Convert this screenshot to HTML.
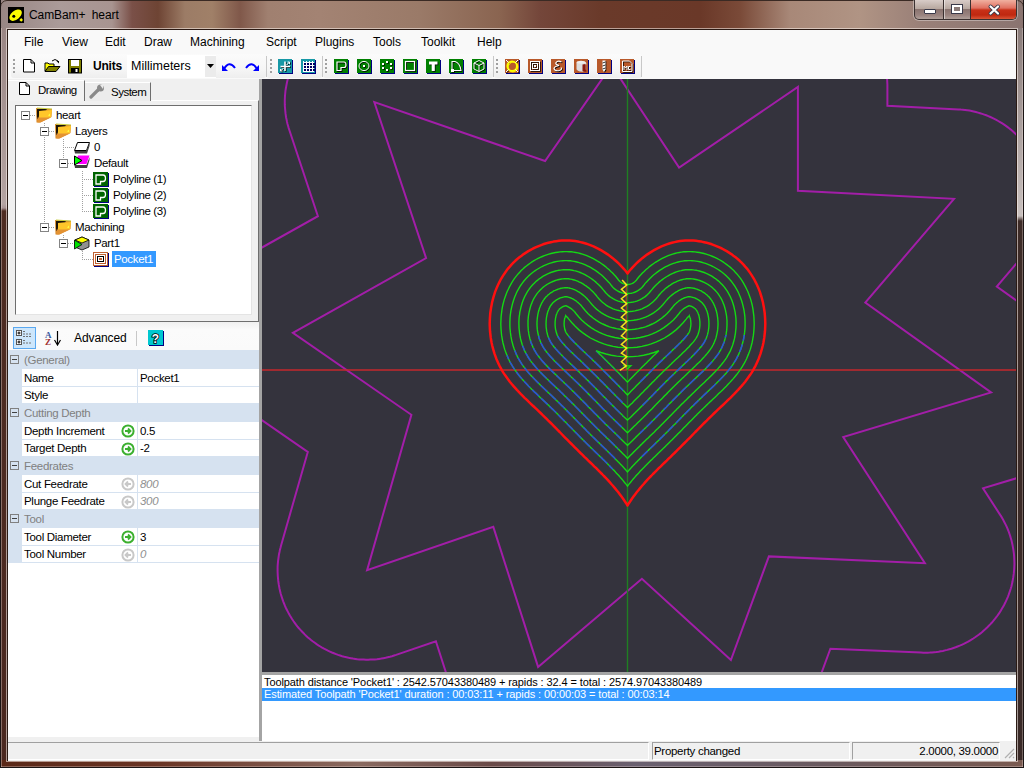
<!DOCTYPE html>
<html><head><meta charset="utf-8">
<style>
*{box-sizing:border-box;margin:0;padding:0}
html,body{width:1024px;height:768px;overflow:hidden}
body{position:relative;font-family:"Liberation Sans",sans-serif;font-size:11px;color:#000;
background:linear-gradient(90deg,#988684 0px,#ab9b99 60px,#a89490 112px,#7a5048 132px,#6e4434 158px,#9c7c66 185px,#a08068 212px,#80584a 240px,#a08070 268px,#a38373 320px,#9a7a68 420px,#8a6450 500px,#74463a 540px,#6a3a2a 600px,#6a3828 700px,#7a4a38 740px,#a88878 790px,#b09484 860px,#9a8078 920px,#8a7470 1024px)}
.a{position:absolute}
.t{position:absolute;white-space:pre;line-height:1}
</style></head><body>
<!-- window outer frame line -->
<div class="a" style="left:0;top:0;width:1024px;height:768px;border:1px solid #3a2a24;border-radius:7px 7px 0 0"></div>
<!-- title icon -->
<div class="a" style="left:8px;top:7px;width:16px;height:16px;background:#000"></div>
<svg class="a" style="left:8px;top:7px" width="16" height="16"><ellipse cx="7.6" cy="8.2" rx="7.2" ry="4.4" transform="rotate(-40 7.6 8.2)" fill="#ff0"/><circle cx="5.8" cy="9.2" r="1.5" fill="#000"/><path d="M13.2 11L15 12.9L13.2 14.8L11.4 12.9Z" fill="#ff0"/></svg>
<div class="t" style="left:29px;top:9px;font-size:12px;color:#000;letter-spacing:-0.1px">CamBam+  heart</div>
<!-- caption buttons -->
<div class="a" style="left:913px;top:0px;width:105px;height:21px;border-radius:0 0 6px 6px;background:rgba(255,255,255,0.35)"></div>
<div class="a" style="left:914px;top:0px;width:103px;height:20px;border:1px solid #3a3030;border-top:none;border-radius:0 0 5px 5px;overflow:hidden;background:linear-gradient(#d8ccc8,#b8a8a0 45%,#8a7470 50%,#9a8480 80%,#b0a09a)">
 <div class="a" style="left:28px;top:0;width:1px;height:20px;background:#3a3030"></div>
 <div class="a" style="left:29px;top:0;width:1px;height:20px;background:rgba(255,255,255,0.5)"></div>
 <div class="a" style="left:55px;top:0;width:47px;height:20px;background:linear-gradient(#f0b0a0,#e07060 40%,#c83018 50%,#c02810 75%,#e06040)"></div>
 <div class="a" style="left:55px;top:0;width:1px;height:20px;background:#3a3030"></div>
 <div class="a" style="left:9px;top:9px;width:12px;height:5px;background:#fff;border:1px solid #3a3a4a;border-radius:1px"></div>
 <div class="a" style="left:36px;top:4px;width:12px;height:10px;border:3px solid #fff;outline:1px solid #3a3a4a;outline-offset:-1px;background:#8a7a78"></div>
 <svg class="a" style="left:73px;top:4px" width="13" height="12"><path d="M2.5 2.5 L10 9.5 M10 2.5 L2.5 9.5" stroke="#3a3a4a" stroke-width="3.8" stroke-linecap="round"/><path d="M2.5 2.5 L10 9.5 M10 2.5 L2.5 9.5" stroke="#fff" stroke-width="2.2" stroke-linecap="round"/></svg>
</div>

<!-- frame strips -->
<div class="a" style="left:0;top:28px;width:8px;height:740px;background:linear-gradient(#9a8684 0px,#b4a4a2 176px,#a89494 180px,#4e2c22 183px,#4a2820 740px)"></div>
<div class="a" style="left:1016px;top:28px;width:8px;height:740px;background:linear-gradient(#8a7c7a 0px,#c8c0be 188px,#3e2c28 193px,#3a2a28 740px)"></div>
<div class="a" style="left:0;top:760px;width:1024px;height:8px;background:linear-gradient(90deg,#5a2818 0%,#6a3424 15%,#8a6a60 35%,#6a4a48 48%,#6a6070 62%,#6a5a60 80%,#7a5a50 100%)"></div>
<div class="a" style="left:0;top:0;width:1px;height:768px;background:#1a1414"></div>
<div class="a" style="left:1023px;top:0;width:1px;height:768px;background:#1a1414"></div>
<div class="a" style="left:1px;top:28px;width:1px;height:739px;background:rgba(255,240,235,0.35)"></div>
<div class="a" style="left:1022px;top:28px;width:1px;height:739px;background:rgba(255,240,235,0.3)"></div>
<div class="a" style="left:0;top:767px;width:1024px;height:1px;background:#1a1414"></div>
<div class="a" style="left:1px;top:766px;width:1022px;height:1px;background:rgba(255,240,235,0.3)"></div>
<div class="a" style="left:6px;top:28px;width:1012px;height:734px;border:1px solid rgba(255,245,240,0.55)"></div>
<!-- client area -->
<div class="a" id="client" style="left:7px;top:29px;width:1010px;height:732px;border:1px solid #2a1a14;background:#f0f0f0;overflow:hidden">
</div>

<!-- menu bar -->
<div class="a" style="left:8px;top:30px;width:1008px;height:49px;background:#f9f9f9"></div>
<div class="t" style="left:24px;top:36px;font-size:12px">File</div>
<div class="t" style="left:62px;top:36px;font-size:12px">View</div>
<div class="t" style="left:105px;top:36px;font-size:12px">Edit</div>
<div class="t" style="left:144px;top:36px;font-size:12px">Draw</div>
<div class="t" style="left:190px;top:36px;font-size:12px">Machining</div>
<div class="t" style="left:266px;top:36px;font-size:12px">Script</div>
<div class="t" style="left:315px;top:36px;font-size:12px">Plugins</div>
<div class="t" style="left:373px;top:36px;font-size:12px">Tools</div>
<div class="t" style="left:421px;top:36px;font-size:12px">Toolkit</div>
<div class="t" style="left:477px;top:36px;font-size:12px">Help</div>
<!-- toolbar strip -->


<!-- toolbar 1 -->
<div class="a" style="left:11px;top:54px;width:255px;height:24px;border-radius:3px;background:linear-gradient(#fbfbfb,#f6f6f6 60%,#eeeeee)"></div>
<div class="a" style="left:266px;top:56px;width:1px;height:21px;background:#c8c8c8"></div>
<div class="a" style="left:267px;top:54px;width:55px;height:24px;border-radius:3px;background:linear-gradient(#fbfbfb,#f6f6f6 60%,#eeeeee)"></div><div class="a" style="left:322px;top:56px;width:1px;height:21px;background:#c8c8c8"></div><div class="a" style="left:323px;top:54px;width:170px;height:24px;border-radius:3px;background:linear-gradient(#fbfbfb,#f6f6f6 60%,#eeeeee)"></div>
<div class="a" style="left:493px;top:56px;width:1px;height:21px;background:#c8c8c8"></div>
<div class="a" style="left:494px;top:54px;width:148px;height:24px;border-radius:3px;background:linear-gradient(#fbfbfb,#f6f6f6 60%,#eeeeee)"></div>
<div class="a" style="left:641px;top:56px;width:1px;height:21px;background:#c8c8c8"></div>
<div class="a" style="left:325px;top:59px;width:2px;height:2px;background:#a0a0a0"></div><div class="a" style="left:325px;top:63px;width:2px;height:2px;background:#a0a0a0"></div><div class="a" style="left:325px;top:67px;width:2px;height:2px;background:#a0a0a0"></div><div class="a" style="left:325px;top:71px;width:2px;height:2px;background:#a0a0a0"></div><div class="a" style="left:13px;top:59px;width:2px;height:2px;background:#a0a0a0"></div><div class="a" style="left:13px;top:63px;width:2px;height:2px;background:#a0a0a0"></div><div class="a" style="left:13px;top:67px;width:2px;height:2px;background:#a0a0a0"></div><div class="a" style="left:13px;top:71px;width:2px;height:2px;background:#a0a0a0"></div><div class="a" style="left:270px;top:59px;width:2px;height:2px;background:#a0a0a0"></div><div class="a" style="left:270px;top:63px;width:2px;height:2px;background:#a0a0a0"></div><div class="a" style="left:270px;top:67px;width:2px;height:2px;background:#a0a0a0"></div><div class="a" style="left:270px;top:71px;width:2px;height:2px;background:#a0a0a0"></div><div class="a" style="left:496px;top:59px;width:2px;height:2px;background:#a0a0a0"></div><div class="a" style="left:496px;top:63px;width:2px;height:2px;background:#a0a0a0"></div><div class="a" style="left:496px;top:67px;width:2px;height:2px;background:#a0a0a0"></div><div class="a" style="left:496px;top:71px;width:2px;height:2px;background:#a0a0a0"></div><svg class="a" style="left:23px;top:59px" width="13" height="14"><path d="M0.5 0.5 H8 L11.5 4 V13 H0.5Z" fill="#fff" stroke="#000"/><path d="M8 0.5 V4 H11.5" fill="none" stroke="#000" stroke-width="1"/></svg><svg class="a" style="left:44px;top:58px" width="17" height="15"><path d="M1 5 H4 L5 6 H10 V13 H1Z" fill="#ff0" stroke="#000"/><path d="M1 13.5 L4.5 8.5 H16 L12 13.5Z" fill="#808000" stroke="#000"/><path d="M8 3 Q11 0 14 3" fill="none" stroke="#000"/><path d="M12.5 3 L15 3 L15 5.5Z" fill="#000"/></svg><svg class="a" style="left:68px;top:59px" width="15" height="15"><rect x="0.5" y="0.5" width="13" height="13.5" fill="#808000" stroke="#000"/><rect x="3" y="1" width="8" height="6" fill="#fff"/><rect x="3" y="9" width="8" height="5" fill="#000"/><rect x="7.5" y="10" width="2" height="3" fill="#fff"/></svg><svg class="a" style="left:278px;top:59px" width="15" height="15"><rect x="1" y="1" width="14" height="14" fill="#000080"/><rect x="0" y="0" width="14" height="14" fill="#1798a6"/><g transform="translate(0.8,0.8)" opacity="0.9"><path d="M7 2.5V12M2.5 7.5H12" stroke="#000" stroke-width="1.6"/><path d="M8.5 6L11.5 3M9.5 3H11.5V5M5.5 9L2.5 12M2.5 10V12H4.5" fill="none" stroke="#000" stroke-width="1"/></g><path d="M7 2.5V12M2.5 7.5H12" stroke="#fff" stroke-width="1.6"/><path d="M8.5 6L11.5 3M9.5 3H11.5V5M5.5 9L2.5 12M2.5 10V12H4.5" fill="none" stroke="#fff" stroke-width="1"/></svg><svg class="a" style="left:301px;top:59px" width="15" height="15"><rect x="1" y="1" width="14" height="14" fill="#000080"/><rect x="0" y="0" width="14" height="14" fill="#1798a6"/><rect x="3" y="4" width="2" height="2" fill="#000060"/><rect x="3" y="7" width="2" height="2" fill="#000060"/><rect x="3" y="10" width="2" height="2" fill="#000060"/><rect x="6" y="4" width="2" height="2" fill="#000060"/><rect x="6" y="7" width="2" height="2" fill="#000060"/><rect x="6" y="10" width="2" height="2" fill="#000060"/><rect x="9" y="4" width="2" height="2" fill="#000060"/><rect x="9" y="7" width="2" height="2" fill="#000060"/><rect x="9" y="10" width="2" height="2" fill="#000060"/><rect x="12" y="4" width="2" height="2" fill="#000060"/><rect x="12" y="7" width="2" height="2" fill="#000060"/><rect x="12" y="10" width="2" height="2" fill="#000060"/><path d="M2 3.5H13M2 6.5H13M2 9.5H13M2 12.5H13M2.5 2V13M5.5 2V13M8.5 2V13M11.5 2V13" stroke="#fff" stroke-width="1"/></svg><svg class="a" style="left:334px;top:59px" width="15" height="15"><rect x="1" y="1" width="14" height="14" fill="#000080"/><rect x="0" y="0" width="14" height="14" fill="#008000"/><g transform="translate(0.8,0.8)" opacity="0.9"><path d="M3 3H10Q12 3 12 6Q12 8.5 10 8.5H7V11.5H3Z" fill="none" stroke="#000" stroke-width="1.2"/></g><path d="M3 3H10Q12 3 12 6Q12 8.5 10 8.5H7V11.5H3Z" fill="none" stroke="#fff" stroke-width="1.2"/></svg><svg class="a" style="left:357px;top:59px" width="15" height="15"><rect x="1" y="1" width="14" height="14" fill="#000080"/><rect x="0" y="0" width="14" height="14" fill="#008000"/><g transform="translate(0.8,0.8)" opacity="0.9"><ellipse cx="7" cy="7" rx="5" ry="4.6" fill="none" stroke="#000" stroke-width="1"/><rect x="6" y="6" width="2" height="2" fill="#000"/></g><ellipse cx="7" cy="7" rx="5" ry="4.6" fill="none" stroke="#fff" stroke-width="1"/><rect x="6" y="6" width="2" height="2" fill="#fff"/></svg><svg class="a" style="left:380px;top:59px" width="15" height="15"><rect x="1" y="1" width="14" height="14" fill="#000080"/><rect x="0" y="0" width="14" height="14" fill="#008000"/><g transform="translate(0.8,0.8)" opacity="0.9"><rect x="6" y="2" width="2" height="2" fill="#000"/><rect x="2" y="4" width="2" height="2" fill="#000"/><rect x="10" y="4" width="2" height="2" fill="#000"/><rect x="2" y="8" width="2" height="2" fill="#000"/><rect x="10" y="8" width="2" height="2" fill="#000"/><rect x="6" y="10" width="2" height="2" fill="#000"/></g><rect x="6" y="2" width="2" height="2" fill="#fff"/><rect x="2" y="4" width="2" height="2" fill="#fff"/><rect x="10" y="4" width="2" height="2" fill="#fff"/><rect x="2" y="8" width="2" height="2" fill="#fff"/><rect x="10" y="8" width="2" height="2" fill="#fff"/><rect x="6" y="10" width="2" height="2" fill="#fff"/></svg><svg class="a" style="left:403px;top:59px" width="15" height="15"><rect x="1" y="1" width="14" height="14" fill="#000080"/><rect x="0" y="0" width="14" height="14" fill="#008000"/><g transform="translate(0.8,0.8)" opacity="0.9"><rect x="2.5" y="2.5" width="9" height="9" fill="none" stroke="#000" stroke-width="1.2"/></g><rect x="2.5" y="2.5" width="9" height="9" fill="none" stroke="#fff" stroke-width="1.2"/></svg><svg class="a" style="left:426px;top:59px" width="15" height="15"><rect x="1" y="1" width="14" height="14" fill="#000080"/><rect x="0" y="0" width="14" height="14" fill="#008000"/><g transform="translate(0.8,0.8)" opacity="0.9"><path d="M3 2.5H11.5V5.5H8.8V12H5.7V5.5H3Z" fill="#000"/></g><path d="M3 2.5H11.5V5.5H8.8V12H5.7V5.5H3Z" fill="#fff"/></svg><svg class="a" style="left:449px;top:59px" width="15" height="15"><rect x="1" y="1" width="14" height="14" fill="#000080"/><rect x="0" y="0" width="14" height="14" fill="#008000"/><g transform="translate(0.8,0.8)" opacity="0.9"><path d="M3 12V2.5H6Q11 4 12 11.5H3.5" fill="none" stroke="#000" stroke-width="1.1"/><rect x="2" y="10" width="3" height="3" fill="#000"/></g><path d="M3 12V2.5H6Q11 4 12 11.5H3.5" fill="none" stroke="#fff" stroke-width="1.1"/><rect x="2" y="10" width="3" height="3" fill="#fff"/></svg><svg class="a" style="left:472px;top:59px" width="15" height="15"><rect x="1" y="1" width="14" height="14" fill="#000080"/><rect x="0" y="0" width="14" height="14" fill="#008000"/><g transform="translate(0.8,0.8)" opacity="0.9"><path d="M7 1.5L12 4V10L7 12.5L2 10V4Z M2 4L7 6.5L12 4 M7 6.5V12.5" fill="none" stroke="#000" stroke-width="1"/></g><path d="M7 1.5L12 4V10L7 12.5L2 10V4Z M2 4L7 6.5L12 4 M7 6.5V12.5" fill="none" stroke="#fff" stroke-width="1"/></svg><svg class="a" style="left:505px;top:59px" width="15" height="15"><rect x="1" y="1" width="14" height="14" fill="#000080"/><rect x="0" y="0" width="14" height="14" fill="#b8592a"/><g transform="translate(0.8,0.8)" opacity="0.9"><circle cx="7" cy="7" r="4.8" fill="none" stroke="#ff0" stroke-width="1.6"/><path d="M1 1L3.5 3.5M13 1L10.5 3.5M1 13L3.5 10.5M13 13L10.5 10.5" stroke="#000"/></g><circle cx="7" cy="7" r="4.8" fill="none" stroke="#ff0" stroke-width="1.6"/><path d="M1 1L3.5 3.5M13 1L10.5 3.5M1 13L3.5 10.5M13 13L10.5 10.5" stroke="#fff"/></svg><svg class="a" style="left:528px;top:59px" width="15" height="15"><rect x="1" y="1" width="14" height="14" fill="#000080"/><rect x="0" y="0" width="14" height="14" fill="#b8592a"/><g transform="translate(0.8,0.8)" opacity="0.9"><rect x="2.5" y="2.5" width="9" height="9" fill="none" stroke="#000"/><rect x="4.5" y="4.5" width="5" height="5" fill="none" stroke="#000"/><rect x="6" y="6" width="2" height="2" fill="#000"/></g><rect x="2.5" y="2.5" width="9" height="9" fill="none" stroke="#fff"/><rect x="4.5" y="4.5" width="5" height="5" fill="none" stroke="#fff"/><rect x="6" y="6" width="2" height="2" fill="#fff"/></svg><svg class="a" style="left:551px;top:59px" width="15" height="15"><rect x="1" y="1" width="14" height="14" fill="#000080"/><rect x="0" y="0" width="14" height="14" fill="#b8592a"/><g transform="translate(0.8,0.8)" opacity="0.9"><path d="M10.5 3Q7 1 5 3.5Q4 5.5 8 6.5Q3 7.5 3 9.5Q4 12.5 8.5 11.5Q11.5 10.5 10 8.5" fill="none" stroke="#000" stroke-width="1.2"/></g><path d="M10.5 3Q7 1 5 3.5Q4 5.5 8 6.5Q3 7.5 3 9.5Q4 12.5 8.5 11.5Q11.5 10.5 10 8.5" fill="none" stroke="#fff" stroke-width="1.2"/></svg><svg class="a" style="left:574px;top:59px" width="15" height="15"><rect x="1" y="1" width="14" height="14" fill="#000080"/><rect x="0" y="0" width="14" height="14" fill="#b8592a"/><g transform="translate(0.8,0.8)" opacity="0.9"><ellipse cx="7" cy="3.5" rx="4.5" ry="1.8" fill="#eee"/><path d="M2.5 3.5V10.5Q7 13.5 11.5 10.5V3.5Q7 6 2.5 3.5Z" fill="#ddd"/><path d="M8.5 5.5V12H11.5V5Z" fill="#8a1a10"/></g><ellipse cx="7" cy="3.5" rx="4.5" ry="1.8" fill="#eee"/><path d="M2.5 3.5V10.5Q7 13.5 11.5 10.5V3.5Q7 6 2.5 3.5Z" fill="#ddd"/><path d="M8.5 5.5V12H11.5V5Z" fill="#8a1a10"/></svg><svg class="a" style="left:597px;top:59px" width="15" height="15"><rect x="1" y="1" width="14" height="14" fill="#000080"/><rect x="0" y="0" width="14" height="14" fill="#b8592a"/><g transform="translate(0.8,0.8)" opacity="0.9"><path d="M5.5 1.5H8.5V10.5L7 13L5.5 10.5Z" fill="#000"/><path d="M5.5 4L8.5 3M5.5 7L8.5 6M5.5 10L8.5 9" stroke="#333"/></g><path d="M5.5 1.5H8.5V10.5L7 13L5.5 10.5Z" fill="#fff"/><path d="M5.5 4L8.5 3M5.5 7L8.5 6M5.5 10L8.5 9" stroke="#333"/></svg><svg class="a" style="left:620px;top:59px" width="15" height="15"><rect x="1" y="1" width="14" height="14" fill="#000080"/><rect x="0" y="0" width="14" height="14" fill="#b8592a"/><g transform="translate(0.8,0.8)" opacity="0.9"><path d="M2.5 2H9.5L12 4.5V12.5H2.5Z" fill="none" stroke="#000"/><path d="M4 11V7L5.5 9L7 7V11M10.5 7.5H8.5V10.5H10.5" fill="none" stroke="#000"/></g><path d="M2.5 2H9.5L12 4.5V12.5H2.5Z" fill="none" stroke="#fff"/><path d="M4 11V7L5.5 9L7 7V11M10.5 7.5H8.5V10.5H10.5" fill="none" stroke="#fff"/></svg><div class="t" style="left:93px;top:60px;font-size:12px;font-weight:bold;letter-spacing:-0.2px">Units</div>
<div class="a" style="left:127px;top:55px;width:89px;height:23px;background:#fff"></div>
<div class="a" style="left:205px;top:56px;width:11px;height:21px;background:#ebebeb"></div>
<svg class="a" style="left:207px;top:64px" width="7" height="4"><path d="M0 0H7L3.5 4Z" fill="#000"/></svg>
<div class="t" style="left:131px;top:60px;font-size:12.5px">Millimeters</div>
<svg class="a" style="left:221px;top:60px" width="17" height="12"><path d="M3 9 Q8 0 14 8" fill="none" stroke="#0000ff" stroke-width="2"/><path d="M1 5 L1 11 L7 11Z" fill="#0000ff"/></svg>
<svg class="a" style="left:244px;top:60px" width="17" height="12"><path d="M2 8 Q8 0 13 9" fill="none" stroke="#0000ff" stroke-width="2"/><path d="M15 5 L15 11 L9 11Z" fill="#0000ff"/></svg>

<!-- left panel -->
<div class="a" style="left:8px;top:79px;width:254px;height:664px;background:#f0f0f0"></div>
<div class="a" style="left:259px;top:79px;width:3px;height:594px;background:#a4a4a4"></div>
<!-- tab page -->
<div class="a" style="left:8px;top:100px;width:251px;height:222px;border-top:1px solid #fff;border-right:1px solid #6e6e6e;border-bottom:1px solid #6e6e6e;background:#f0f0f0"></div>
<!-- tabs -->
<div class="a" style="left:85px;top:82px;width:66px;height:19px;border-right:1px solid #6e6e6e;border-top:1px solid #fff;background:#ececec"></div>
<div class="a" style="left:8px;top:80px;width:77px;height:21px;border-right:1px solid #6e6e6e;border-top:1px solid #fff;background:#f2f2f2"></div>
<svg class="a" style="left:19px;top:82px" width="12" height="13"><path d="M0.5 0.5H7L10.5 4V12.5H0.5Z" fill="#fff" stroke="#000"/><path d="M7 0.5V4H10.5" fill="none" stroke="#000"/></svg>
<div class="t" style="left:38px;top:85px;font-size:11.5px;letter-spacing:-0.5px">Drawing</div>
<svg class="a" style="left:89px;top:84px" width="17" height="15"><path d="M2 13 L9 6" stroke="#8a8a8a" stroke-width="3.2" stroke-linecap="round"/><circle cx="11.5" cy="4" r="3.5" fill="#8a8a8a"/><path d="M11 1 L15 0 L14 5Z" fill="#ececec"/></svg>
<div class="t" style="left:111px;top:87px;font-size:11.5px;letter-spacing:-0.5px">System</div>
<!-- tree -->
<div class="a" style="left:15px;top:105px;width:237px;height:210px;border-top:1px solid #6e6e6e;border-left:1px solid #6e6e6e;border-right:1px solid #e4e4e4;border-bottom:1px solid #e4e4e4;background:#fff"></div>
<!-- tree items --><div class="a" style="left:44px;top:123px;width:1px;height:100px;background:repeating-linear-gradient(180deg,#a0a0a0 0 1px,transparent 1px 2px)"></div><div class="a" style="left:63px;top:139px;width:1px;height:20px;background:repeating-linear-gradient(180deg,#a0a0a0 0 1px,transparent 1px 2px)"></div><div class="a" style="left:82px;top:171px;width:1px;height:40px;background:repeating-linear-gradient(180deg,#a0a0a0 0 1px,transparent 1px 2px)"></div><div class="a" style="left:63px;top:235px;width:1px;height:4px;background:repeating-linear-gradient(180deg,#a0a0a0 0 1px,transparent 1px 2px)"></div><div class="a" style="left:82px;top:251px;width:1px;height:8px;background:repeating-linear-gradient(180deg,#a0a0a0 0 1px,transparent 1px 2px)"></div><svg class="a" style="left:21px;top:111px" width="9" height="9"><rect x="0.5" y="0.5" width="8" height="8" fill="#fff" stroke="#848484"/><path d="M2 4.5H7" stroke="#000"/></svg><div class="a" style="left:30px;top:115px;width:6px;height:1px;background:repeating-linear-gradient(90deg,#a0a0a0 0 1px,transparent 1px 2px)"></div><svg class="a" style="left:36px;top:107px" width="17" height="16"><path d="M0 1L16 2L15.5 10L4 15.5L0.5 15.5Z" fill="#d88a2a"/><path d="M1 2L11 2L10 3.5L3.5 4L2.5 12L1 12Z" fill="#1c1408"/><path d="M3 4L16 3L15 10.5L3 12Z" fill="#ffc62a"/><path d="M1.5 10.5L15 10.5L4.5 15.5L1.5 15.5Z" fill="#e39232"/><path d="M1 1L16 2" stroke="#c8d040" stroke-width="1"/><path d="M12 8.5L14 6.5L14 9Z" fill="#ffff40"/></svg><div class="t" style="left:56px;top:110px;font-size:11.5px;letter-spacing:-0.35px">heart</div><svg class="a" style="left:40px;top:127px" width="9" height="9"><rect x="0.5" y="0.5" width="8" height="8" fill="#fff" stroke="#848484"/><path d="M2 4.5H7" stroke="#000"/></svg><div class="a" style="left:49px;top:131px;width:6px;height:1px;background:repeating-linear-gradient(90deg,#a0a0a0 0 1px,transparent 1px 2px)"></div><svg class="a" style="left:55px;top:123px" width="17" height="16"><path d="M0 1L16 2L15.5 10L4 15.5L0.5 15.5Z" fill="#d88a2a"/><path d="M1 2L11 2L10 3.5L3.5 4L2.5 12L1 12Z" fill="#1c1408"/><path d="M3 4L16 3L15 10.5L3 12Z" fill="#ffc62a"/><path d="M1.5 10.5L15 10.5L4.5 15.5L1.5 15.5Z" fill="#e39232"/><path d="M1 1L16 2" stroke="#c8d040" stroke-width="1"/><path d="M12 8.5L14 6.5L14 9Z" fill="#ffff40"/></svg><div class="t" style="left:75px;top:126px;font-size:11.5px;letter-spacing:-0.35px">Layers</div><div class="a" style="left:63px;top:147px;width:11px;height:1px;background:repeating-linear-gradient(90deg,#a0a0a0 0 1px,transparent 1px 2px)"></div><svg class="a" style="left:74px;top:142px" width="16" height="13"><path d="M3.5 0.5H15.5L12.5 8.5H0.5Z" fill="#fff" stroke="#000"/><path d="M0.5 9 H12.5 L15.5 1 V4 L13 11.5 H1Z" fill="#404040"/></svg><div class="t" style="left:94px;top:142px;font-size:11.5px;letter-spacing:-0.35px">0</div><svg class="a" style="left:59px;top:159px" width="9" height="9"><rect x="0.5" y="0.5" width="8" height="8" fill="#fff" stroke="#848484"/><path d="M2 4.5H7" stroke="#000"/></svg><div class="a" style="left:68px;top:163px;width:6px;height:1px;background:repeating-linear-gradient(90deg,#a0a0a0 0 1px,transparent 1px 2px)"></div><svg class="a" style="left:74px;top:155px" width="16" height="14"><path d="M0.5 10 H12.5 L15.5 2 V5 L13 13 H1Z" fill="#404040"/><path d="M4 0.5H15.5L12.5 9H1Z" fill="#ff00ff"/><path d="M0.5 1 L0.5 10 L8 5.5Z" fill="#00ff00" stroke="#000" stroke-width="1"/></svg><div class="t" style="left:94px;top:158px;font-size:11.5px;letter-spacing:-0.35px">Default</div><div class="a" style="left:82px;top:179px;width:11px;height:1px;background:repeating-linear-gradient(90deg,#a0a0a0 0 1px,transparent 1px 2px)"></div><svg class="a" style="left:93px;top:172px" width="16" height="15"><rect x="1" y="1" width="15" height="14" fill="#000080"/><rect x="0" y="0" width="15" height="14" fill="#006400"/><path d="M3 3H10Q12.5 3 12.5 6.5Q12.5 9.5 10 9.5H7.5V12H3Z" fill="none" stroke="#fff" stroke-width="1.3"/></svg><div class="t" style="left:113px;top:174px;font-size:11.5px;letter-spacing:-0.35px">Polyline (1)</div><div class="a" style="left:82px;top:195px;width:11px;height:1px;background:repeating-linear-gradient(90deg,#a0a0a0 0 1px,transparent 1px 2px)"></div><svg class="a" style="left:93px;top:188px" width="16" height="15"><rect x="1" y="1" width="15" height="14" fill="#000080"/><rect x="0" y="0" width="15" height="14" fill="#006400"/><path d="M3 3H10Q12.5 3 12.5 6.5Q12.5 9.5 10 9.5H7.5V12H3Z" fill="none" stroke="#fff" stroke-width="1.3"/></svg><div class="t" style="left:113px;top:190px;font-size:11.5px;letter-spacing:-0.35px">Polyline (2)</div><div class="a" style="left:82px;top:211px;width:11px;height:1px;background:repeating-linear-gradient(90deg,#a0a0a0 0 1px,transparent 1px 2px)"></div><svg class="a" style="left:93px;top:204px" width="16" height="15"><rect x="1" y="1" width="15" height="14" fill="#000080"/><rect x="0" y="0" width="15" height="14" fill="#006400"/><path d="M3 3H10Q12.5 3 12.5 6.5Q12.5 9.5 10 9.5H7.5V12H3Z" fill="none" stroke="#fff" stroke-width="1.3"/></svg><div class="t" style="left:113px;top:206px;font-size:11.5px;letter-spacing:-0.35px">Polyline (3)</div><svg class="a" style="left:40px;top:223px" width="9" height="9"><rect x="0.5" y="0.5" width="8" height="8" fill="#fff" stroke="#848484"/><path d="M2 4.5H7" stroke="#000"/></svg><div class="a" style="left:49px;top:227px;width:6px;height:1px;background:repeating-linear-gradient(90deg,#a0a0a0 0 1px,transparent 1px 2px)"></div><svg class="a" style="left:55px;top:219px" width="17" height="16"><path d="M0 1L16 2L15.5 10L4 15.5L0.5 15.5Z" fill="#d88a2a"/><path d="M1 2L11 2L10 3.5L3.5 4L2.5 12L1 12Z" fill="#1c1408"/><path d="M3 4L16 3L15 10.5L3 12Z" fill="#ffc62a"/><path d="M1.5 10.5L15 10.5L4.5 15.5L1.5 15.5Z" fill="#e39232"/><path d="M1 1L16 2" stroke="#c8d040" stroke-width="1"/><path d="M12 8.5L14 6.5L14 9Z" fill="#ffff40"/></svg><div class="t" style="left:75px;top:222px;font-size:11.5px;letter-spacing:-0.35px">Machining</div><svg class="a" style="left:59px;top:239px" width="9" height="9"><rect x="0.5" y="0.5" width="8" height="8" fill="#fff" stroke="#848484"/><path d="M2 4.5H7" stroke="#000"/></svg><div class="a" style="left:68px;top:243px;width:6px;height:1px;background:repeating-linear-gradient(90deg,#a0a0a0 0 1px,transparent 1px 2px)"></div><svg class="a" style="left:74px;top:236px" width="16" height="15"><path d="M8 1 L15 4 V11 L8 14 L1 11 V4Z" fill="#909090" stroke="#000" stroke-width="0.8"/><path d="M8 1 L15 4 L8 7 L1 4Z" fill="#ffff00" stroke="#000" stroke-width="0.8"/><path d="M0.5 4 V13 L8 8.5Z" fill="#00e000" stroke="#000" stroke-width="0.8"/></svg><div class="t" style="left:94px;top:238px;font-size:11.5px;letter-spacing:-0.35px">Part1</div><div class="a" style="left:82px;top:259px;width:11px;height:1px;background:repeating-linear-gradient(90deg,#a0a0a0 0 1px,transparent 1px 2px)"></div><svg class="a" style="left:93px;top:252px" width="16" height="15"><rect x="1" y="1" width="15" height="14" fill="#000080"/><rect x="0" y="0" width="15" height="14" fill="#fff"/><rect x="0.5" y="0.5" width="14" height="13" fill="none" stroke="#c06030"/><rect x="2.5" y="2.5" width="10" height="9" fill="none" stroke="#c06030"/><rect x="4.5" y="4.5" width="6" height="5" fill="none" stroke="#000"/><rect x="6" y="6" width="3" height="2" fill="#c06030"/></svg><div class="a" style="left:112px;top:251px;width:44px;height:16px;background:#3399ff"></div><div class="t" style="left:114px;top:254px;font-size:11.5px;letter-spacing:-0.35px;color:#fff">Pocket1</div>
<!-- property grid -->
<div class="a" style="left:8px;top:322px;width:251px;height:28px;background:linear-gradient(#f0f0f0,#fbfbfb 30%,#fafafa)"></div>
<div class="a" style="left:13px;top:327px;width:23px;height:22px;border:1px solid #5aa8f0;background:#cde6fb"></div>
<svg class="a" style="left:16px;top:330px" width="18" height="16"><rect x="0.5" y="0.5" width="5" height="5" fill="#fff" stroke="#555"/><path d="M1.5 3H4.5M3 1.5V4.5" stroke="#000"/><rect x="0.5" y="9.5" width="5" height="5" fill="#fff" stroke="#555"/><path d="M1.5 12H4.5M3 10.5V13.5" stroke="#000"/><path d="M7 1.5H10M7 4H16M7 6.5H16M7 10.5H10M7 13H16" stroke="#707070" stroke-dasharray="2 1"/></svg>
<div class="t" style="left:45px;top:331px;font-family:'Liberation Serif',serif;font-size:9px;font-weight:bold;color:#3a5aa0">A</div>
<div class="t" style="left:45px;top:338px;font-family:'Liberation Serif',serif;font-size:9px;font-weight:bold;color:#a03030">Z</div>
<svg class="a" style="left:54px;top:331px" width="7" height="15"><path d="M3.5 0V13" stroke="#000" stroke-width="1.2"/><path d="M0.5 9L3.5 14L6.5 9" fill="none" stroke="#000" stroke-width="1.2"/></svg>
<div class="t" style="left:74px;top:332px;font-size:12px;letter-spacing:-0.1px">Advanced</div>
<div class="a" style="left:136px;top:331px;width:1px;height:15px;background:#c8c8c8"></div>
<svg class="a" style="left:148px;top:330px" width="16" height="16"><rect x="1" y="1" width="15" height="15" fill="#000080"/><rect x="0" y="0" width="15" height="15" fill="#00c8d0"/><text x="7.5" y="12.5" font-family="Liberation Sans" font-size="12" font-weight="bold" text-anchor="middle" fill="#fff" stroke="#000" stroke-width="1.6" paint-order="stroke">?</text></svg>
<!-- grid -->
<div class="a" style="left:8px;top:350px;width:251px;height:387px;background:#fff"></div>
<div class="a" style="left:8px;top:350px;width:251px;height:213px;background:#d6e2f0"></div>
<svg class="a" style="left:10px;top:355px" width="9" height="9"><rect x="0.5" y="0.5" width="8" height="8" fill="none" stroke="#808080"/><path d="M2 4.5H7" stroke="#404040"/></svg><div class="t" style="left:24px;top:355px;font-size:11.5px;letter-spacing:-0.3px;color:#808080">(General)</div><div class="a" style="left:22px;top:369px;width:237px;height:17px;background:#fff"></div><div class="a" style="left:137px;top:369px;width:1px;height:17px;background:#d6e2f0"></div><div class="t" style="left:24px;top:373px;font-size:11.5px;letter-spacing:-0.3px">Name</div><div class="t" style="left:140px;top:373px;font-size:11.5px;letter-spacing:-0.3px">Pocket1</div><div class="a" style="left:22px;top:387px;width:237px;height:16px;background:#fff"></div><div class="a" style="left:137px;top:387px;width:1px;height:16px;background:#d6e2f0"></div><div class="t" style="left:24px;top:390px;font-size:11.5px;letter-spacing:-0.3px">Style</div><div class="t" style="left:140px;top:390px;font-size:11.5px;letter-spacing:-0.3px"></div><svg class="a" style="left:10px;top:408px" width="9" height="9"><rect x="0.5" y="0.5" width="8" height="8" fill="none" stroke="#808080"/><path d="M2 4.5H7" stroke="#404040"/></svg><div class="t" style="left:24px;top:408px;font-size:11.5px;letter-spacing:-0.3px;color:#808080">Cutting Depth</div><div class="a" style="left:22px;top:422px;width:237px;height:17px;background:#fff"></div><div class="a" style="left:137px;top:422px;width:1px;height:17px;background:#d6e2f0"></div><div class="t" style="left:24px;top:426px;font-size:11.5px;letter-spacing:-0.3px">Depth Increment</div><svg class="a" style="left:121px;top:424px" width="14" height="14"><circle cx="7" cy="7" r="5.6" fill="#fff" stroke="#3cb030" stroke-width="2"/><path d="M4 7H9M7 4.5L9.5 7L7 9.5" fill="none" stroke="#3cb030" stroke-width="1.8"/></svg><div class="t" style="left:140px;top:426px;font-size:11.5px;letter-spacing:-0.3px">0.5</div><div class="a" style="left:22px;top:440px;width:237px;height:16px;background:#fff"></div><div class="a" style="left:137px;top:440px;width:1px;height:16px;background:#d6e2f0"></div><div class="t" style="left:24px;top:443px;font-size:11.5px;letter-spacing:-0.3px">Target Depth</div><svg class="a" style="left:121px;top:442px" width="14" height="14"><circle cx="7" cy="7" r="5.6" fill="#fff" stroke="#3cb030" stroke-width="2"/><path d="M4 7H9M7 4.5L9.5 7L7 9.5" fill="none" stroke="#3cb030" stroke-width="1.8"/></svg><div class="t" style="left:140px;top:443px;font-size:11.5px;letter-spacing:-0.3px">-2</div><svg class="a" style="left:10px;top:461px" width="9" height="9"><rect x="0.5" y="0.5" width="8" height="8" fill="none" stroke="#808080"/><path d="M2 4.5H7" stroke="#404040"/></svg><div class="t" style="left:24px;top:461px;font-size:11.5px;letter-spacing:-0.3px;color:#808080">Feedrates</div><div class="a" style="left:22px;top:475px;width:237px;height:17px;background:#fff"></div><div class="a" style="left:137px;top:475px;width:1px;height:17px;background:#d6e2f0"></div><div class="t" style="left:24px;top:479px;font-size:11.5px;letter-spacing:-0.3px">Cut Feedrate</div><svg class="a" style="left:121px;top:477px" width="14" height="14"><circle cx="7" cy="7" r="5.6" fill="#fff" stroke="#c8c8c8" stroke-width="2"/><path d="M10 7H5M7 4.5L4.5 7L7 9.5" fill="none" stroke="#c8c8c8" stroke-width="1.8"/></svg><div class="t" style="left:140px;top:479px;font-size:11.5px;letter-spacing:-0.3px;font-style:italic;color:#909090">800</div><div class="a" style="left:22px;top:493px;width:237px;height:16px;background:#fff"></div><div class="a" style="left:137px;top:493px;width:1px;height:16px;background:#d6e2f0"></div><div class="t" style="left:24px;top:496px;font-size:11.5px;letter-spacing:-0.3px">Plunge Feedrate</div><svg class="a" style="left:121px;top:495px" width="14" height="14"><circle cx="7" cy="7" r="5.6" fill="#fff" stroke="#c8c8c8" stroke-width="2"/><path d="M10 7H5M7 4.5L4.5 7L7 9.5" fill="none" stroke="#c8c8c8" stroke-width="1.8"/></svg><div class="t" style="left:140px;top:496px;font-size:11.5px;letter-spacing:-0.3px;font-style:italic;color:#909090">300</div><svg class="a" style="left:10px;top:514px" width="9" height="9"><rect x="0.5" y="0.5" width="8" height="8" fill="none" stroke="#808080"/><path d="M2 4.5H7" stroke="#404040"/></svg><div class="t" style="left:24px;top:514px;font-size:11.5px;letter-spacing:-0.3px;color:#808080">Tool</div><div class="a" style="left:22px;top:528px;width:237px;height:17px;background:#fff"></div><div class="a" style="left:137px;top:528px;width:1px;height:17px;background:#d6e2f0"></div><div class="t" style="left:24px;top:532px;font-size:11.5px;letter-spacing:-0.3px">Tool Diameter</div><svg class="a" style="left:121px;top:530px" width="14" height="14"><circle cx="7" cy="7" r="5.6" fill="#fff" stroke="#3cb030" stroke-width="2"/><path d="M4 7H9M7 4.5L9.5 7L7 9.5" fill="none" stroke="#3cb030" stroke-width="1.8"/></svg><div class="t" style="left:140px;top:532px;font-size:11.5px;letter-spacing:-0.3px">3</div><div class="a" style="left:22px;top:546px;width:237px;height:16px;background:#fff"></div><div class="a" style="left:137px;top:546px;width:1px;height:16px;background:#d6e2f0"></div><div class="t" style="left:24px;top:549px;font-size:11.5px;letter-spacing:-0.3px">Tool Number</div><svg class="a" style="left:121px;top:548px" width="14" height="14"><circle cx="7" cy="7" r="5.6" fill="#fff" stroke="#c8c8c8" stroke-width="2"/><path d="M10 7H5M7 4.5L4.5 7L7 9.5" fill="none" stroke="#c8c8c8" stroke-width="1.8"/></svg><div class="t" style="left:140px;top:549px;font-size:11.5px;letter-spacing:-0.3px;font-style:italic;color:#909090">0</div>
<!-- canvas bg -->
<div class="a" id="cv" style="left:262px;top:79px;width:754px;height:593px;background:#34333d;overflow:hidden"><!-- CANVAS START --><svg class="a" style="left:0;top:0" width="754" height="593" viewBox="262 79 754 593">
<path d="M611.6 65.3 L679.1 167.6 L797.9 87.0 L797.9 190.8 L954.0 198.8 L865.3 302.6 L991.1 392.4 L843.2 437.0 L924.9 563.2 L768.9 556.4 L730.9 660.1 L641.9 578.8 L538.1 666.9 L493.3 526.9 L367.1 570.2 L411.4 414.8 L292.9 332.8 L426.1 258.1 L374.3 102.0 L545.1 161.0Z" fill="none" stroke="#a21ea8" stroke-width="2" stroke-linejoin="miter"/>
<path d="M538.1 14.2 L510.3 54.3 L403.5 17.4 L401.4 16.7 L399.4 16.1 L397.2 15.5 L395.1 15.0 L393.0 14.5 L390.8 14.0 L388.7 13.7 L386.5 13.3 L384.4 13.1 L382.2 12.8 L380.0 12.7 L377.8 12.6 L375.6 12.5 L373.4 12.5 L371.3 12.6 L369.1 12.7 L366.9 12.8 L364.7 13.0 L362.5 13.3 L360.4 13.6 L358.2 14.0 L356.1 14.4 L353.9 14.8 L351.8 15.4 L349.7 15.9 L347.6 16.6 L345.5 17.2 L343.5 18.0 L341.4 18.8 L339.4 19.6 L337.4 20.5 L335.4 21.4 L333.5 22.4 L331.5 23.4 L329.6 24.5 L327.7 25.6 L325.9 26.7 L324.1 27.9 L322.3 29.2 L320.5 30.5 L318.8 31.8 L317.1 33.2 L315.4 34.6 L313.8 36.1 L312.2 37.6 L310.6 39.1 L309.1 40.7 L307.6 42.3 L306.2 43.9 L304.8 45.6 L303.4 47.3 L302.1 49.1 L300.9 50.9 L299.6 52.7 L298.4 54.5 L297.3 56.4 L296.2 58.3 L295.2 60.2 L294.2 62.1 L293.2 64.1 L292.3 66.1 L291.5 68.1 L290.7 70.1 L289.9 72.2 L289.2 74.3 L288.6 76.4 L287.9 78.5 L287.4 80.6 L286.9 82.7 L286.5 84.9 L286.1 87.0 L285.7 89.2 L285.4 91.3 L285.2 93.5 L285.0 95.7 L284.9 97.9 L284.8 100.1 L284.8 102.2 L284.8 104.4 L284.9 106.6 L285.1 108.8 L285.3 111.0 L285.5 113.2 L285.8 115.3 L286.1 117.5 L286.6 119.6 L287.0 121.8 L287.5 123.9 L288.1 126.0 L288.7 128.1 L289.4 130.2 L317.9 216.2 L249.1 254.7 L247.2 255.8 L245.4 257.0 L243.5 258.1 L241.7 259.4 L239.9 260.6 L238.2 262.0 L236.5 263.3 L234.8 264.7 L233.2 266.1 L231.6 267.6 L230.0 269.1 L228.5 270.7 L227.0 272.3 L225.5 273.9 L224.1 275.6 L222.7 277.3 L221.4 279.0 L220.1 280.8 L218.8 282.6 L217.6 284.4 L216.5 286.2 L215.4 288.1 L214.3 290.0 L213.3 291.9 L212.3 293.9 L211.4 295.9 L210.5 297.9 L209.7 299.9 L208.9 301.9 L208.2 304.0 L207.5 306.1 L206.9 308.2 L206.3 310.3 L205.8 312.4 L205.3 314.5 L204.9 316.7 L204.5 318.8 L204.2 321.0 L203.9 323.1 L203.7 325.3 L203.6 327.5 L203.5 329.7 L203.4 331.9 L203.4 334.0 L203.5 336.2 L203.6 338.4 L203.7 340.6 L204.0 342.8 L204.2 344.9 L204.5 347.1 L204.9 349.2 L205.3 351.4 L205.8 353.5 L206.4 355.6 L206.9 357.7 L207.6 359.8 L208.3 361.9 L209.0 363.9 L209.8 366.0 L210.6 368.0 L211.5 370.0 L212.4 372.0 L213.4 373.9 L214.4 375.9 L215.5 377.8 L216.6 379.6 L217.8 381.5 L219.0 383.3 L220.3 385.1 L221.6 386.8 L222.9 388.6 L224.3 390.3 L225.7 391.9 L227.2 393.5 L228.7 395.1 L230.2 396.7 L231.8 398.2 L233.4 399.7 L235.0 401.1 L236.7 402.5 L238.4 403.8 L240.2 405.1 L242.0 406.4 L307.8 451.9 L281.0 545.7 L280.5 547.8 L279.9 549.9 L279.5 552.0 L279.0 554.2 L278.7 556.4 L278.4 558.5 L278.1 560.7 L277.9 562.9 L277.7 565.1 L277.6 567.3 L277.6 569.4 L277.6 571.6 L277.7 573.8 L277.8 576.0 L278.0 578.2 L278.2 580.4 L278.5 582.6 L278.8 584.7 L279.2 586.9 L279.6 589.0 L280.1 591.2 L280.6 593.3 L281.2 595.4 L281.9 597.5 L282.6 599.6 L283.3 601.6 L284.1 603.7 L284.9 605.7 L285.8 607.7 L286.8 609.7 L287.8 611.6 L288.8 613.6 L289.9 615.5 L291.0 617.3 L292.2 619.2 L293.4 621.0 L294.7 622.8 L296.0 624.6 L297.3 626.3 L298.7 628.0 L300.2 629.6 L301.7 631.2 L303.2 632.8 L304.7 634.4 L306.3 635.9 L307.9 637.4 L309.6 638.8 L311.3 640.2 L313.0 641.5 L314.8 642.8 L316.6 644.1 L318.4 645.3 L320.3 646.5 L322.1 647.6 L324.0 648.7 L326.0 649.7 L327.9 650.7 L329.9 651.6 L331.9 652.5 L333.9 653.3 L336.0 654.1 L338.1 654.9 L340.1 655.5 L342.2 656.2 L344.3 656.8 L346.5 657.3 L348.6 657.8 L350.8 658.2 L352.9 658.6 L355.1 658.9 L357.3 659.2 L359.4 659.4 L361.6 659.5 L363.8 659.6 L366.0 659.7 L368.2 659.7 L370.4 659.6 L372.6 659.5 L374.8 659.4 L376.9 659.2 L379.1 658.9 L381.3 658.6 L383.4 658.2 L385.6 657.8 L387.7 657.3 L389.9 656.8 L392.0 656.2 L394.1 655.5 L396.1 654.9 L435.9 641.2 L452.9 694.2 L453.6 696.3 L454.3 698.3 L455.1 700.4 L455.9 702.4 L456.8 704.4 L457.8 706.4 L458.8 708.4 L459.8 710.3 L460.9 712.2 L462.0 714.1 L463.2 715.9 L464.5 717.8 L465.7 719.6 L467.0 721.3 L468.4 723.0 L469.8 724.7 L471.2 726.4 L472.7 728.0 L474.2 729.6 L475.8 731.2 L477.4 732.7 L479.0 734.1 L480.7 735.6 L482.4 737.0 L484.1 738.3 L485.9 739.6 L487.7 740.9 L489.5 742.1 L491.4 743.3 L493.3 744.4 L495.2 745.5 L497.2 746.5 L499.1 747.5 L501.1 748.4 L503.1 749.3 L505.2 750.1 L507.2 750.9 L509.3 751.6 L511.4 752.3 L513.5 752.9 L515.6 753.5 L517.7 754.1 L519.9 754.5 L522.0 754.9 L524.2 755.3 L526.4 755.6 L528.6 755.9 L530.8 756.1 L532.9 756.3 L535.1 756.4 L537.3 756.4 L539.5 756.4 L541.7 756.3 L543.9 756.2 L546.1 756.0 L548.3 755.8 L550.5 755.5 L552.7 755.2 L554.8 754.8 L557.0 754.4 L559.1 753.9 L561.3 753.4 L563.4 752.8 L565.5 752.1 L567.6 751.4 L569.6 750.7 L571.7 749.9 L573.7 749.0 L575.7 748.1 L577.7 747.2 L579.6 746.2 L581.6 745.1 L583.5 744.0 L585.4 742.9 L587.2 741.7 L589.0 740.5 L590.8 739.2 L592.6 737.9 L594.3 736.5 L596.0 735.1 L639.7 698.0 L670.5 726.2 L672.2 727.6 L673.8 729.1 L675.6 730.4 L677.3 731.8 L679.1 733.1 L680.9 734.3 L682.7 735.5 L684.6 736.7 L686.4 737.8 L688.4 738.8 L690.3 739.9 L692.3 740.8 L694.3 741.8 L696.3 742.6 L698.3 743.5 L700.4 744.2 L702.4 744.9 L704.5 745.6 L706.6 746.2 L708.7 746.8 L710.9 747.3 L713.0 747.8 L715.2 748.2 L717.3 748.6 L719.5 748.9 L721.7 749.1 L723.9 749.3 L726.0 749.5 L728.2 749.6 L730.4 749.6 L732.6 749.6 L734.8 749.5 L737.0 749.4 L739.2 749.2 L741.4 749.0 L743.5 748.7 L745.7 748.4 L747.9 748.0 L750.0 747.5 L752.1 747.0 L754.3 746.5 L756.4 745.9 L758.5 745.2 L760.5 744.5 L762.6 743.8 L764.6 743.0 L766.7 742.1 L768.7 741.2 L770.6 740.3 L772.6 739.3 L774.5 738.2 L776.4 737.2 L778.3 736.0 L780.1 734.8 L782.0 733.6 L783.7 732.3 L785.5 731.0 L787.2 729.7 L788.9 728.3 L790.6 726.8 L792.2 725.3 L793.8 723.8 L795.3 722.3 L796.8 720.7 L798.3 719.0 L799.7 717.4 L801.1 715.7 L802.4 713.9 L803.7 712.2 L805.0 710.4 L806.2 708.5 L807.3 706.7 L808.4 704.8 L809.5 702.9 L810.5 700.9 L811.5 699.0 L812.4 697.0 L813.3 695.0 L814.2 692.9 L814.9 690.9 L830.4 648.7 L921.0 652.6 L923.2 652.7 L925.4 652.7 L927.6 652.7 L929.8 652.6 L932.0 652.4 L934.2 652.2 L936.4 652.0 L938.6 651.7 L940.7 651.3 L942.9 650.9 L945.0 650.4 L947.2 649.9 L949.3 649.3 L951.4 648.7 L953.5 648.0 L955.6 647.3 L957.6 646.5 L959.7 645.7 L961.7 644.8 L963.7 643.9 L965.7 642.9 L967.6 641.9 L969.5 640.8 L971.4 639.7 L973.3 638.5 L975.1 637.3 L976.9 636.0 L978.7 634.7 L980.5 633.4 L982.2 632.0 L983.8 630.6 L985.5 629.1 L987.1 627.6 L988.6 626.0 L990.2 624.4 L991.7 622.8 L993.1 621.2 L994.5 619.5 L995.9 617.7 L997.2 616.0 L998.5 614.2 L999.7 612.4 L1000.9 610.5 L1002.0 608.6 L1003.1 606.7 L1004.2 604.8 L1005.2 602.8 L1006.1 600.8 L1007.0 598.8 L1007.9 596.8 L1008.7 594.7 L1009.4 592.7 L1010.1 590.6 L1010.8 588.5 L1011.4 586.4 L1011.9 584.2 L1012.4 582.1 L1012.8 579.9 L1013.2 577.7 L1013.5 575.6 L1013.8 573.4 L1014.0 571.2 L1014.2 569.0 L1014.3 566.8 L1014.4 564.6 L1014.4 562.4 L1014.3 560.2 L1014.2 558.0 L1014.1 555.8 L1013.9 553.6 L1013.6 551.4 L1013.3 549.3 L1012.9 547.1 L1012.5 544.9 L1012.0 542.8 L1011.5 540.6 L1010.9 538.5 L1010.3 536.4 L1009.6 534.3 L1008.9 532.2 L1008.1 530.2 L1007.3 528.2 L1006.4 526.1 L1005.4 524.1 L1004.4 522.2 L1003.4 520.2 L1002.3 518.3 L1001.2 516.4 L1000.0 514.6 L983.0 488.3 L1016.9 478.1 L1019.0 477.4 L1021.1 476.7 L1023.2 476.0 L1025.2 475.2 L1027.2 474.3 L1029.2 473.4 L1031.2 472.4 L1033.1 471.4 L1035.1 470.4 L1036.9 469.3 L1038.8 468.1 L1040.7 466.9 L1042.5 465.7 L1044.2 464.4 L1046.0 463.1 L1047.7 461.7 L1049.4 460.3 L1051.0 458.9 L1052.6 457.4 L1054.2 455.9 L1055.8 454.3 L1057.2 452.7 L1058.7 451.1 L1060.1 449.4 L1061.5 447.7 L1062.8 445.9 L1064.1 444.2 L1065.4 442.4 L1066.6 440.5 L1067.7 438.7 L1068.8 436.8 L1069.9 434.9 L1070.9 432.9 L1071.9 430.9 L1072.8 429.0 L1073.7 426.9 L1074.5 424.9 L1075.3 422.9 L1076.0 420.8 L1076.6 418.7 L1077.3 416.6 L1077.8 414.5 L1078.3 412.3 L1078.8 410.2 L1079.2 408.1 L1079.6 405.9 L1079.9 403.7 L1080.1 401.5 L1080.3 399.4 L1080.5 397.2 L1080.6 395.0 L1080.6 392.8 L1080.6 390.6 L1080.5 388.4 L1080.4 386.2 L1080.2 384.0 L1080.0 381.9 L1079.7 379.7 L1079.4 377.5 L1079.0 375.4 L1078.5 373.2 L1078.0 371.1 L1077.5 369.0 L1076.9 366.8 L1076.2 364.8 L1075.5 362.7 L1074.8 360.6 L1074.0 358.6 L1073.1 356.6 L1072.2 354.6 L1071.3 352.6 L1070.3 350.6 L1069.2 348.7 L1068.1 346.8 L1067.0 344.9 L1065.8 343.1 L1064.6 341.3 L1063.3 339.5 L1062.0 337.7 L1060.6 336.0 L1059.2 334.3 L1057.8 332.7 L1056.3 331.1 L1054.8 329.5 L1053.2 328.0 L1051.6 326.5 L1050.0 325.0 L1048.3 323.6 L1046.6 322.2 L1044.9 320.9 L1043.1 319.6 L996.8 286.5 L1022.0 256.9 L1023.4 255.3 L1024.8 253.5 L1026.1 251.8 L1027.4 250.0 L1028.6 248.2 L1029.8 246.4 L1031.0 244.5 L1032.1 242.6 L1033.1 240.7 L1034.1 238.7 L1035.1 236.8 L1036.0 234.8 L1036.8 232.7 L1037.6 230.7 L1038.4 228.7 L1039.1 226.6 L1039.7 224.5 L1040.3 222.4 L1040.9 220.3 L1041.4 218.1 L1041.8 216.0 L1042.2 213.8 L1042.6 211.7 L1042.9 209.5 L1043.1 207.3 L1043.3 205.1 L1043.4 203.0 L1043.5 200.8 L1043.5 198.6 L1043.5 196.4 L1043.4 194.2 L1043.2 192.0 L1043.0 189.8 L1042.8 187.7 L1042.5 185.5 L1042.2 183.3 L1041.7 181.2 L1041.3 179.0 L1040.8 176.9 L1040.2 174.8 L1039.6 172.7 L1038.9 170.6 L1038.2 168.5 L1037.5 166.5 L1036.6 164.4 L1035.8 162.4 L1034.9 160.4 L1033.9 158.5 L1032.9 156.5 L1031.8 154.6 L1030.7 152.7 L1029.6 150.9 L1028.4 149.0 L1027.1 147.2 L1025.9 145.4 L1024.5 143.7 L1023.2 142.0 L1021.8 140.3 L1020.3 138.7 L1018.8 137.1 L1017.3 135.5 L1015.7 134.0 L1014.1 132.5 L1012.5 131.0 L1010.8 129.6 L1009.1 128.3 L1007.3 126.9 L1005.6 125.6 L1003.8 124.4 L1001.9 123.2 L1000.1 122.1 L998.2 121.0 L996.3 119.9 L994.3 118.9 L992.3 117.9 L990.4 117.0 L988.3 116.1 L986.3 115.3 L984.3 114.6 L982.2 113.9 L980.1 113.2 L978.0 112.6 L975.9 112.0 L973.7 111.5 L971.6 111.0 L969.5 110.6 L967.3 110.3 L965.1 110.0 L962.9 109.7 L960.8 109.6 L958.6 109.4 L887.4 105.8 L887.4 87.0 L887.4 84.8 L887.3 82.6 L887.2 80.4 L887.0 78.2 L886.7 76.0 L886.4 73.8 L886.1 71.6 L885.7 69.5 L885.2 67.3 L884.7 65.2 L884.1 63.1 L883.5 60.9 L882.9 58.8 L882.1 56.8 L881.4 54.7 L880.5 52.6 L879.7 50.6 L878.8 48.6 L877.8 46.6 L876.8 44.7 L875.7 42.8 L874.6 40.9 L873.4 39.0 L872.2 37.1 L871.0 35.3 L869.7 33.5 L868.3 31.8 L867.0 30.1 L865.5 28.4 L864.1 26.7 L862.6 25.1 L861.0 23.6 L859.4 22.0 L857.8 20.5 L856.2 19.1 L854.5 17.7 L852.8 16.3 L851.0 15.0 L849.2 13.7 L847.4 12.4 L845.5 11.2 L843.7 10.1 L841.7 9.0 L839.8 7.9 L837.9 6.9 L835.9 6.0 L833.9 5.0 L831.8 4.2 L829.8 3.4 L827.7 2.6 L825.6 1.9 L823.5 1.2 L821.4 0.6 L819.3 0.1 L817.1 -0.4 L815.0 -0.9 L812.8 -1.3 L810.6 -1.6 L808.4 -1.9 L806.2 -2.1 L804.0 -2.3 L801.8 -2.4 L799.6 -2.5 L797.4 -2.5 L795.2 -2.5 L793.0 -2.4 L790.8 -2.2 L788.6 -2.0 L786.5 -1.8 L784.3 -1.5 L782.1 -1.1 L779.9 -0.7 L777.8 -0.2 L775.6 0.3 L773.5 0.9 L771.4 1.5 L769.3 2.2 L767.2 2.9 L765.2 3.7 L763.1 4.5 L761.1 5.4 L759.1 6.3 L757.1 7.3 L755.2 8.4 L753.3 9.4 L751.4 10.6 L749.5 11.7 L747.7 12.9 L703.9 42.6 L686.3 16.0 L685.1 14.2 L683.8 12.4 L682.4 10.6 L681.1 8.9 L679.7 7.2 L678.2 5.5 L676.7 3.9 L675.2 2.3 L673.6 0.8 L672.0 -0.8 L670.3 -2.2 L668.7 -3.7 L666.9 -5.0 L665.2 -6.4 L663.4 -7.7 L661.6 -8.9 L659.7 -10.2 L657.8 -11.3 L655.9 -12.4 L654.0 -13.5 L652.0 -14.5 L650.1 -15.5 L648.1 -16.4 L646.0 -17.3 L644.0 -18.1 L641.9 -18.9 L639.8 -19.6 L637.7 -20.3 L635.6 -20.9 L633.5 -21.5 L631.3 -22.0 L629.1 -22.5 L627.0 -22.9 L624.8 -23.2 L622.6 -23.5 L620.4 -23.8 L618.2 -24.0 L616.0 -24.1 L613.8 -24.2 L611.6 -24.2 L609.4 -24.2 L607.2 -24.1 L604.9 -24.0 L602.7 -23.8 L600.5 -23.5 L598.4 -23.2 L596.2 -22.9 L594.0 -22.5 L591.8 -22.0 L589.7 -21.5 L587.6 -20.9 L585.4 -20.3 L583.3 -19.6 L581.2 -18.9 L579.2 -18.1 L577.1 -17.3 L575.1 -16.4 L573.1 -15.5 L571.1 -14.5 L569.1 -13.5 L567.2 -12.4 L565.3 -11.3 L563.4 -10.1 L561.6 -8.9 L559.8 -7.7 L558.0 -6.4 L556.2 -5.0 L554.5 -3.6 L552.8 -2.2 L551.2 -0.7 L549.6 0.8 L548.0 2.3 L546.4 3.9 L545.0 5.6 L543.5 7.2 L542.1 8.9 L540.7 10.7 L539.4 12.4 L538.1 14.2Z" fill="none" stroke="#a21ea8" stroke-width="2"/>
<path d="M262 370H1016" stroke="#c4282c" stroke-width="1.6"/>
<path d="M627.5 79V672" stroke="#1f7f22" stroke-width="1.4"/>
<path d="M627.5 486.1 L627.9 485.5 L628.1 485.3 L629.7 483.2 L629.9 483.1 L631.6 481.0 L631.7 480.9 L633.4 478.8 L633.5 478.7 L635.3 476.7 L635.4 476.5 L637.2 474.5 L637.3 474.4 L639.2 472.4 L639.3 472.3 L641.1 470.3 L641.2 470.3 L643.1 468.3 L643.2 468.2 L645.1 466.3 L645.1 466.2 L647.0 464.3 L647.1 464.2 L649.0 462.3 L649.1 462.2 L651.0 460.3 L651.1 460.3 L653.0 458.4 L653.0 458.3 L655.0 456.4 L655.0 456.4 L657.0 454.5 L657.0 454.5 L659.0 452.6 L660.9 450.7 L662.9 448.8 L664.8 446.9 L666.7 445.1 L668.6 443.2 L670.5 441.3 L672.4 439.5 L674.3 437.6 L676.1 435.7 L678.0 433.8 L679.9 431.9 L681.8 430.0 L683.6 428.1 L685.5 426.2 L687.4 424.3 L689.3 422.3 L689.3 422.3 L691.2 420.4 L691.2 420.4 L693.1 418.5 L693.1 418.5 L695.0 416.6 L695.0 416.6 L696.9 414.7 L696.9 414.6 L698.8 412.7 L698.8 412.7 L700.8 410.8 L700.8 410.8 L702.7 408.9 L702.8 408.9 L704.7 407.0 L704.8 406.9 L706.7 405.0 L706.8 405.0 L708.7 403.1 L708.8 403.1 L710.7 401.2 L710.8 401.2 L712.8 399.3 L714.8 397.4 L716.8 395.5 L718.7 393.6 L720.7 391.8 L722.6 389.9 L724.5 388.0 L726.3 386.2 L728.1 384.3 L729.9 382.4 L731.6 380.5 L733.3 378.6 L734.9 376.7 L736.5 374.8 L738.0 372.8 L739.4 370.9 L740.8 368.9 L742.1 366.9 L743.3 364.9 L744.5 362.9 L745.6 360.8 L746.6 358.7 L747.5 356.5 L748.4 354.4 L749.3 352.1 L750.1 349.9 L750.8 347.6 L751.4 345.3 L752.0 343.0 L752.5 340.6 L752.9 338.2 L753.3 335.9 L753.6 333.5 L753.8 331.1 L754.0 328.6 L754.1 326.2 L754.2 323.8 L754.1 321.4 L754.0 319.0 L753.9 316.6 L753.6 314.2 L753.3 311.8 L753.0 309.4 L752.6 307.1 L752.1 304.7 L751.5 302.4 L750.9 300.1 L750.2 297.9 L749.4 295.7 L748.6 293.5 L747.7 291.3 L746.7 289.2 L745.7 287.1 L744.6 285.1 L743.5 283.1 L742.3 281.1 L741.0 279.2 L739.7 277.4 L738.3 275.6 L736.9 273.9 L735.3 272.2 L733.8 270.5 L732.1 269.0 L730.4 267.4 L728.6 266.0 L726.8 264.6 L724.9 263.2 L723.0 261.9 L721.0 260.7 L719.0 259.5 L716.9 258.4 L714.8 257.4 L712.7 256.5 L710.6 255.6 L708.4 254.9 L706.2 254.2 L704.0 253.5 L701.7 253.0 L699.5 252.5 L697.2 252.2 L695.0 251.9 L692.7 251.7 L690.4 251.6 L688.2 251.6 L685.9 251.7 L683.7 251.8 L681.5 252.1 L679.3 252.5 L677.0 252.9 L674.8 253.5 L672.6 254.1 L670.4 254.9 L668.2 255.7 L666.0 256.6 L663.8 257.6 L661.7 258.7 L659.6 259.8 L657.5 261.1 L655.4 262.3 L653.4 263.7 L651.4 265.1 L649.5 266.6 L647.7 268.2 L645.8 269.7 L644.1 271.4 L642.4 273.0 L640.8 274.8 L639.2 276.5 L637.8 278.3 L636.3 280.2 L635.8 280.8 L635.3 281.3 L634.8 281.8 L634.2 282.2 L633.6 282.7 L633.0 283.0 L632.4 283.4 L631.7 283.7 L631.0 283.9 L630.4 284.1 L629.7 284.3 L628.9 284.4 L628.2 284.5 L627.5 284.5 L626.8 284.5 L626.1 284.4 L625.3 284.3 L624.6 284.1 L624.0 283.9 L623.3 283.7 L622.6 283.4 L622.0 283.0 L621.4 282.7 L620.8 282.2 L620.2 281.8 L619.7 281.3 L619.2 280.8 L618.7 280.2 L617.2 278.3 L615.8 276.5 L614.2 274.8 L612.6 273.0 L610.9 271.4 L609.2 269.7 L607.3 268.2 L605.5 266.6 L603.6 265.1 L601.6 263.7 L599.6 262.3 L597.5 261.1 L595.4 259.8 L593.3 258.7 L591.2 257.6 L589.0 256.6 L586.8 255.7 L584.6 254.9 L582.4 254.1 L580.2 253.5 L578.0 252.9 L575.7 252.5 L573.5 252.1 L571.3 251.8 L569.1 251.7 L566.8 251.6 L564.6 251.6 L562.3 251.7 L560.0 251.9 L557.8 252.2 L555.5 252.5 L553.3 253.0 L551.0 253.5 L548.8 254.2 L546.6 254.9 L544.4 255.6 L542.3 256.5 L540.2 257.4 L538.1 258.4 L536.0 259.5 L534.0 260.7 L532.0 261.9 L530.1 263.2 L528.2 264.6 L526.4 266.0 L524.6 267.4 L522.9 269.0 L521.2 270.5 L519.7 272.2 L518.1 273.9 L516.7 275.6 L515.3 277.4 L514.0 279.2 L512.7 281.1 L511.5 283.1 L510.4 285.1 L509.3 287.1 L508.3 289.2 L507.3 291.3 L506.4 293.5 L505.6 295.7 L504.8 297.9 L504.1 300.1 L503.5 302.4 L502.9 304.7 L502.4 307.1 L502.0 309.4 L501.7 311.8 L501.4 314.2 L501.1 316.6 L501.0 319.0 L500.9 321.4 L500.8 323.8 L500.9 326.2 L501.0 328.6 L501.2 331.1 L501.4 333.5 L501.7 335.9 L502.1 338.2 L502.5 340.6 L503.0 343.0 L503.6 345.3 L504.2 347.6 L504.9 349.9 L505.7 352.1 L506.6 354.4 L507.5 356.5 L508.4 358.7 L509.4 360.8 L510.5 362.9 L511.7 364.9 L512.9 366.9 L514.2 368.9 L515.6 370.9 L517.0 372.8 L518.5 374.8 L520.1 376.7 L521.7 378.6 L523.4 380.5 L525.1 382.4 L526.9 384.3 L528.7 386.2 L530.5 388.0 L532.4 389.9 L534.3 391.8 L536.3 393.6 L538.2 395.5 L540.2 397.4 L542.2 399.3 L544.2 401.2 L544.3 401.2 L546.2 403.1 L546.3 403.1 L548.2 405.0 L548.3 405.0 L550.2 406.9 L550.3 407.0 L552.2 408.9 L552.3 408.9 L554.2 410.8 L554.2 410.8 L556.2 412.7 L556.2 412.7 L558.1 414.6 L558.1 414.7 L560.0 416.6 L560.0 416.6 L561.9 418.5 L561.9 418.5 L563.8 420.4 L563.8 420.4 L565.7 422.3 L565.7 422.3 L567.6 424.3 L569.5 426.2 L571.4 428.1 L573.2 430.0 L575.1 431.9 L577.0 433.8 L578.9 435.7 L580.7 437.6 L582.6 439.5 L584.5 441.3 L586.4 443.2 L588.3 445.1 L590.2 446.9 L592.1 448.8 L594.1 450.7 L596.0 452.6 L598.0 454.5 L598.0 454.5 L600.0 456.4 L600.0 456.4 L602.0 458.3 L602.0 458.4 L603.9 460.3 L604.0 460.3 L605.9 462.2 L606.0 462.3 L607.9 464.2 L608.0 464.3 L609.9 466.2 L609.9 466.3 L611.8 468.2 L611.9 468.3 L613.8 470.3 L613.9 470.3 L615.7 472.3 L615.8 472.4 L617.7 474.4 L617.8 474.5 L619.6 476.5 L619.7 476.7 L621.5 478.7 L621.6 478.8 L623.3 480.9 L623.4 481.0 L625.1 483.1 L625.3 483.2 L626.9 485.3 L627.1 485.5 L627.5 486.1Z" fill="none" stroke="#14d814" stroke-width="1.4"/>
<path d="M627.5 471.9 L628.5 470.7 L628.7 470.5 L630.5 468.5 L630.7 468.3 L632.5 466.3 L632.7 466.1 L634.5 464.2 L634.7 464.0 L636.6 462.0 L636.7 461.9 L638.6 460.0 L638.7 459.9 L640.6 457.9 L640.7 457.8 L642.6 455.9 L642.7 455.8 L644.7 453.9 L644.7 453.8 L646.7 451.9 L646.7 451.9 L648.7 450.0 L648.7 449.9 L650.7 448.0 L650.7 448.0 L652.7 446.1 L654.6 444.2 L656.6 442.3 L658.5 440.5 L660.4 438.6 L662.3 436.8 L664.1 434.9 L666.0 433.1 L667.9 431.2 L669.7 429.3 L671.6 427.4 L673.4 425.5 L675.3 423.7 L677.2 421.7 L679.1 419.8 L680.9 417.9 L682.8 416.0 L682.8 416.0 L684.7 414.1 L684.7 414.1 L686.6 412.2 L686.7 412.1 L688.6 410.2 L688.6 410.2 L690.5 408.3 L690.5 408.2 L692.4 406.3 L692.5 406.3 L694.4 404.4 L694.5 404.3 L696.4 402.4 L696.5 402.4 L698.4 400.5 L698.5 400.4 L700.4 398.5 L700.5 398.5 L702.5 396.6 L702.5 396.5 L704.5 394.6 L704.6 394.6 L706.6 392.7 L708.6 390.8 L710.5 389.0 L712.5 387.1 L714.4 385.3 L716.2 383.4 L718.1 381.6 L719.9 379.8 L721.6 378.0 L723.3 376.2 L724.9 374.5 L726.5 372.7 L728.0 370.9 L729.4 369.1 L730.8 367.4 L732.1 365.6 L733.3 363.9 L734.4 362.1 L735.5 360.3 L736.5 358.6 L737.5 356.7 L738.4 354.9 L739.2 353.0 L740.0 351.0 L740.8 349.1 L741.5 347.1 L742.1 345.1 L742.6 343.0 L743.2 340.9 L743.6 338.8 L744.0 336.7 L744.3 334.6 L744.6 332.4 L744.8 330.3 L745.0 328.1 L745.1 326.0 L745.1 323.8 L745.1 321.6 L745.0 319.5 L744.9 317.3 L744.7 315.2 L744.4 313.0 L744.1 310.9 L743.7 308.8 L743.2 306.7 L742.7 304.7 L742.2 302.7 L741.6 300.7 L740.9 298.7 L740.2 296.8 L739.4 294.9 L738.6 293.0 L737.7 291.2 L736.7 289.4 L735.7 287.7 L734.7 286.0 L733.6 284.4 L732.5 282.8 L731.3 281.3 L730.0 279.8 L728.7 278.3 L727.4 276.9 L726.0 275.6 L724.5 274.3 L723.0 273.0 L721.4 271.8 L719.8 270.6 L718.1 269.5 L716.4 268.5 L714.7 267.5 L712.9 266.5 L711.1 265.6 L709.2 264.8 L707.4 264.1 L705.5 263.4 L703.6 262.8 L701.7 262.3 L699.8 261.8 L697.8 261.4 L695.9 261.1 L694.0 260.9 L692.1 260.7 L690.2 260.6 L688.3 260.6 L686.4 260.7 L684.6 260.8 L682.7 261.1 L680.9 261.4 L679.1 261.7 L677.2 262.2 L675.3 262.8 L673.4 263.4 L671.5 264.1 L669.6 264.9 L667.7 265.8 L665.9 266.7 L664.0 267.7 L662.2 268.8 L660.4 269.9 L658.6 271.1 L656.9 272.4 L655.2 273.7 L653.5 275.0 L651.9 276.4 L650.4 277.9 L648.9 279.4 L647.5 280.9 L646.1 282.4 L644.8 283.9 L643.4 285.8 L642.6 286.8 L641.7 287.7 L640.7 288.6 L639.7 289.4 L638.6 290.2 L637.5 290.9 L636.3 291.5 L635.2 292.0 L633.9 292.5 L632.7 292.9 L631.4 293.2 L630.1 293.4 L628.8 293.5 L627.5 293.5 L626.2 293.5 L624.9 293.4 L623.6 293.2 L622.3 292.9 L621.1 292.5 L619.8 292.0 L618.7 291.5 L617.5 290.9 L616.4 290.2 L615.3 289.4 L614.3 288.6 L613.3 287.7 L612.4 286.8 L611.6 285.8 L610.2 283.9 L608.9 282.4 L607.5 280.9 L606.1 279.4 L604.6 277.9 L603.1 276.4 L601.5 275.0 L599.8 273.7 L598.1 272.4 L596.4 271.1 L594.6 269.9 L592.8 268.8 L591.0 267.7 L589.1 266.7 L587.3 265.8 L585.4 264.9 L583.5 264.1 L581.6 263.4 L579.7 262.8 L577.8 262.2 L575.9 261.7 L574.1 261.4 L572.3 261.1 L570.4 260.8 L568.6 260.7 L566.7 260.6 L564.8 260.6 L562.9 260.7 L561.0 260.9 L559.1 261.1 L557.2 261.4 L555.2 261.8 L553.3 262.3 L551.4 262.8 L549.5 263.4 L547.6 264.1 L545.8 264.8 L543.9 265.6 L542.1 266.5 L540.3 267.5 L538.6 268.5 L536.9 269.5 L535.2 270.6 L533.6 271.8 L532.0 273.0 L530.5 274.3 L529.0 275.6 L527.6 276.9 L526.3 278.3 L525.0 279.8 L523.7 281.3 L522.5 282.8 L521.4 284.4 L520.3 286.0 L519.3 287.7 L518.3 289.4 L517.3 291.2 L516.4 293.0 L515.6 294.9 L514.8 296.8 L514.1 298.7 L513.4 300.7 L512.8 302.7 L512.3 304.7 L511.8 306.7 L511.3 308.8 L510.9 310.9 L510.6 313.0 L510.3 315.2 L510.1 317.3 L510.0 319.5 L509.9 321.6 L509.9 323.8 L509.9 326.0 L510.0 328.1 L510.2 330.3 L510.4 332.4 L510.7 334.6 L511.0 336.7 L511.4 338.8 L511.8 340.9 L512.4 343.0 L512.9 345.1 L513.5 347.1 L514.2 349.1 L515.0 351.0 L515.8 353.0 L516.6 354.9 L517.5 356.7 L518.5 358.6 L519.5 360.3 L520.6 362.1 L521.7 363.9 L522.9 365.6 L524.2 367.4 L525.6 369.1 L527.0 370.9 L528.5 372.7 L530.1 374.5 L531.7 376.2 L533.4 378.0 L535.1 379.8 L536.9 381.6 L538.8 383.4 L540.6 385.3 L542.5 387.1 L544.5 389.0 L546.4 390.8 L548.4 392.7 L550.4 394.6 L550.5 394.6 L552.5 396.5 L552.5 396.6 L554.5 398.5 L554.6 398.5 L556.5 400.4 L556.6 400.5 L558.5 402.4 L558.6 402.4 L560.5 404.3 L560.6 404.4 L562.5 406.3 L562.6 406.3 L564.5 408.2 L564.5 408.3 L566.4 410.2 L566.4 410.2 L568.3 412.1 L568.4 412.2 L570.3 414.1 L570.3 414.1 L572.2 416.0 L572.2 416.0 L574.1 417.9 L575.9 419.8 L577.8 421.7 L579.7 423.7 L581.6 425.5 L583.4 427.4 L585.3 429.3 L587.1 431.2 L589.0 433.1 L590.9 434.9 L592.7 436.8 L594.6 438.6 L596.5 440.5 L598.4 442.3 L600.4 444.2 L602.3 446.1 L604.3 448.0 L604.3 448.0 L606.3 449.9 L606.3 450.0 L608.3 451.9 L608.3 451.9 L610.3 453.8 L610.3 453.9 L612.3 455.8 L612.4 455.9 L614.3 457.8 L614.4 457.9 L616.3 459.9 L616.4 460.0 L618.3 461.9 L618.4 462.0 L620.3 464.0 L620.5 464.2 L622.3 466.1 L622.5 466.3 L624.3 468.3 L624.5 468.5 L626.3 470.5 L626.5 470.7 L627.5 471.9Z" fill="none" stroke="#14d814" stroke-width="1.4"/>
<path d="M627.5 458.4 L627.9 458.0 L628.1 457.8 L630.0 455.8 L630.2 455.6 L632.1 453.7 L632.3 453.5 L634.2 451.6 L634.3 451.4 L636.2 449.5 L636.4 449.4 L638.3 447.5 L638.4 447.4 L640.4 445.5 L640.4 445.4 L642.4 443.5 L642.4 443.4 L644.4 441.5 L644.4 441.5 L646.4 439.6 L648.4 437.7 L650.3 435.8 L652.2 434.0 L654.1 432.2 L655.9 430.3 L657.8 428.5 L659.6 426.7 L661.5 424.8 L663.3 423.0 L665.2 421.1 L667.0 419.2 L668.9 417.3 L670.7 415.4 L672.6 413.5 L674.5 411.6 L676.4 409.7 L676.4 409.6 L678.3 407.7 L678.3 407.7 L680.2 405.8 L680.2 405.8 L682.1 403.8 L682.2 403.8 L684.1 401.9 L684.2 401.8 L686.1 399.9 L686.1 399.9 L688.1 398.0 L688.1 397.9 L690.1 396.0 L690.2 395.9 L692.1 394.0 L692.2 393.9 L694.2 392.0 L694.3 391.9 L696.2 390.0 L696.3 390.0 L698.3 388.1 L698.4 388.0 L700.4 386.1 L702.3 384.3 L704.3 382.4 L706.2 380.6 L708.1 378.8 L709.9 377.0 L711.7 375.2 L713.4 373.5 L715.1 371.8 L716.6 370.1 L718.2 368.4 L719.6 366.8 L721.0 365.1 L722.3 363.5 L723.6 361.9 L724.7 360.4 L725.8 358.8 L726.8 357.3 L727.7 355.7 L728.6 354.2 L729.4 352.7 L730.2 351.1 L730.9 349.4 L731.6 347.7 L732.3 346.0 L732.9 344.3 L733.4 342.5 L733.9 340.7 L734.4 338.9 L734.8 337.0 L735.1 335.2 L735.4 333.3 L735.6 331.4 L735.8 329.5 L736.0 327.6 L736.0 325.7 L736.1 323.8 L736.1 321.9 L736.0 319.9 L735.9 318.0 L735.7 316.2 L735.4 314.3 L735.2 312.4 L734.8 310.6 L734.4 308.8 L734.0 307.0 L733.5 305.2 L733.0 303.5 L732.4 301.8 L731.8 300.1 L731.1 298.5 L730.4 296.9 L729.6 295.3 L728.8 293.8 L728.0 292.4 L727.1 290.9 L726.2 289.6 L725.2 288.2 L724.2 286.9 L723.2 285.7 L722.1 284.5 L721.0 283.4 L719.8 282.2 L718.6 281.1 L717.3 280.1 L716.0 279.0 L714.6 278.1 L713.2 277.1 L711.8 276.2 L710.3 275.4 L708.8 274.6 L707.3 273.9 L705.7 273.2 L704.2 272.5 L702.6 272.0 L701.0 271.5 L699.4 271.0 L697.8 270.6 L696.2 270.3 L694.6 270.1 L693.1 269.9 L691.5 269.7 L690.0 269.7 L688.5 269.7 L687.0 269.7 L685.5 269.8 L684.0 270.0 L682.6 270.2 L681.1 270.6 L679.5 270.9 L678.0 271.4 L676.4 271.9 L674.8 272.5 L673.3 273.2 L671.7 273.9 L670.1 274.7 L668.5 275.6 L666.9 276.5 L665.3 277.5 L663.8 278.5 L662.3 279.6 L660.8 280.8 L659.4 281.9 L658.0 283.2 L656.6 284.4 L655.3 285.7 L654.1 287.0 L653.0 288.3 L651.9 289.6 L650.5 291.3 L649.3 292.8 L648.0 294.1 L646.6 295.4 L645.2 296.6 L643.6 297.7 L642.0 298.7 L640.3 299.6 L638.6 300.4 L636.8 301.1 L635.0 301.6 L633.2 302.0 L631.3 302.3 L629.4 302.5 L627.5 302.6 L625.6 302.5 L623.7 302.3 L621.8 302.0 L620.0 301.6 L618.2 301.1 L616.4 300.4 L614.7 299.6 L613.0 298.7 L611.4 297.7 L609.8 296.6 L608.4 295.4 L607.0 294.1 L605.7 292.8 L604.5 291.3 L603.1 289.6 L602.0 288.3 L600.9 287.0 L599.7 285.7 L598.4 284.4 L597.0 283.2 L595.6 281.9 L594.2 280.8 L592.7 279.6 L591.2 278.5 L589.7 277.5 L588.1 276.5 L586.5 275.6 L584.9 274.7 L583.3 273.9 L581.7 273.2 L580.2 272.5 L578.6 271.9 L577.0 271.4 L575.5 270.9 L573.9 270.6 L572.4 270.2 L571.0 270.0 L569.5 269.8 L568.0 269.7 L566.5 269.7 L565.0 269.7 L563.5 269.7 L561.9 269.9 L560.4 270.1 L558.8 270.3 L557.2 270.6 L555.6 271.0 L554.0 271.5 L552.4 272.0 L550.8 272.5 L549.3 273.2 L547.7 273.9 L546.2 274.6 L544.7 275.4 L543.2 276.2 L541.8 277.1 L540.4 278.1 L539.0 279.0 L537.7 280.1 L536.4 281.1 L535.2 282.2 L534.0 283.4 L532.9 284.5 L531.8 285.7 L530.8 286.9 L529.8 288.2 L528.8 289.6 L527.9 290.9 L527.0 292.4 L526.2 293.8 L525.4 295.3 L524.6 296.9 L523.9 298.5 L523.2 300.1 L522.6 301.8 L522.0 303.5 L521.5 305.2 L521.0 307.0 L520.6 308.8 L520.2 310.6 L519.8 312.4 L519.6 314.3 L519.3 316.2 L519.1 318.0 L519.0 319.9 L518.9 321.9 L518.9 323.8 L519.0 325.7 L519.0 327.6 L519.2 329.5 L519.4 331.4 L519.6 333.3 L519.9 335.2 L520.2 337.0 L520.6 338.9 L521.1 340.7 L521.6 342.5 L522.1 344.3 L522.7 346.0 L523.4 347.7 L524.1 349.4 L524.8 351.1 L525.6 352.7 L526.4 354.2 L527.3 355.7 L528.2 357.3 L529.2 358.8 L530.3 360.4 L531.4 361.9 L532.7 363.5 L534.0 365.1 L535.4 366.8 L536.8 368.4 L538.4 370.1 L539.9 371.8 L541.6 373.5 L543.3 375.2 L545.1 377.0 L546.9 378.8 L548.8 380.6 L550.7 382.4 L552.7 384.3 L554.6 386.1 L556.6 388.0 L556.7 388.1 L558.7 390.0 L558.8 390.0 L560.7 391.9 L560.8 392.0 L562.8 393.9 L562.9 394.0 L564.8 395.9 L564.9 396.0 L566.9 397.9 L566.9 398.0 L568.9 399.9 L568.9 399.9 L570.8 401.8 L570.9 401.9 L572.8 403.8 L572.9 403.8 L574.8 405.8 L574.8 405.8 L576.7 407.7 L576.7 407.7 L578.6 409.6 L578.6 409.7 L580.5 411.6 L582.4 413.5 L584.3 415.4 L586.1 417.3 L588.0 419.2 L589.8 421.1 L591.7 423.0 L593.5 424.8 L595.4 426.7 L597.2 428.5 L599.1 430.3 L600.9 432.2 L602.8 434.0 L604.7 435.8 L606.6 437.7 L608.6 439.6 L610.6 441.5 L610.6 441.5 L612.6 443.4 L612.6 443.5 L614.6 445.4 L614.6 445.5 L616.6 447.4 L616.7 447.5 L618.6 449.4 L618.8 449.5 L620.7 451.4 L620.8 451.6 L622.7 453.5 L622.9 453.7 L624.8 455.6 L625.0 455.8 L626.9 457.8 L627.1 458.0 L627.5 458.4Z" fill="none" stroke="#14d814" stroke-width="1.4"/>
<path d="M627.5 445.5 L627.8 445.2 L627.9 445.0 L629.9 443.1 L630.0 443.0 L632.0 441.0 L632.1 440.9 L634.0 439.0 L634.1 438.9 L636.1 437.0 L636.1 436.9 L638.1 435.0 L638.1 435.0 L640.1 433.1 L642.1 431.2 L644.0 429.3 L645.9 427.5 L647.7 425.7 L649.6 423.9 L651.4 422.1 L653.2 420.3 L655.0 418.4 L656.9 416.6 L658.7 414.7 L660.6 412.9 L662.4 411.0 L664.3 409.1 L666.2 407.2 L668.0 405.3 L669.9 403.3 L670.0 403.3 L671.8 401.4 L671.9 401.3 L673.8 399.4 L673.8 399.4 L675.7 397.5 L675.8 397.4 L677.7 395.5 L677.8 395.4 L679.7 393.5 L679.8 393.4 L681.7 391.5 L681.8 391.4 L683.7 389.5 L683.8 389.4 L685.8 387.5 L685.9 387.4 L687.9 385.5 L688.0 385.4 L690.0 383.5 L690.1 383.4 L692.1 381.5 L692.1 381.5 L694.1 379.6 L696.1 377.7 L698.1 375.8 L700.0 374.0 L701.8 372.3 L703.6 370.6 L705.3 368.9 L706.9 367.2 L708.5 365.6 L710.0 364.0 L711.4 362.4 L712.8 360.9 L714.0 359.4 L715.2 357.9 L716.3 356.5 L717.4 355.1 L718.3 353.8 L719.2 352.4 L719.9 351.2 L720.7 349.9 L721.3 348.6 L722.0 347.2 L722.6 345.8 L723.2 344.4 L723.8 343.0 L724.3 341.5 L724.7 340.0 L725.2 338.4 L725.5 336.9 L725.9 335.3 L726.2 333.7 L726.4 332.0 L726.7 330.4 L726.8 328.7 L726.9 327.1 L727.0 325.4 L727.0 323.8 L727.0 322.1 L727.0 320.4 L726.8 318.8 L726.7 317.1 L726.5 315.5 L726.2 313.9 L725.9 312.3 L725.6 310.8 L725.2 309.2 L724.8 307.7 L724.4 306.3 L723.9 304.8 L723.3 303.4 L722.8 302.0 L722.2 300.7 L721.6 299.4 L720.9 298.2 L720.2 297.0 L719.5 295.8 L718.7 294.7 L718.0 293.6 L717.2 292.6 L716.3 291.6 L715.5 290.7 L714.6 289.8 L713.7 288.9 L712.7 288.0 L711.7 287.1 L710.6 286.3 L709.5 285.5 L708.3 284.7 L707.2 284.0 L706.0 283.3 L704.7 282.7 L703.5 282.1 L702.2 281.5 L700.9 281.0 L699.7 280.5 L698.4 280.1 L697.1 279.8 L695.9 279.5 L694.6 279.2 L693.4 279.0 L692.1 278.9 L690.9 278.8 L689.7 278.7 L688.6 278.7 L687.5 278.7 L686.4 278.8 L685.3 279.0 L684.2 279.1 L683.1 279.4 L681.9 279.7 L680.7 280.0 L679.5 280.4 L678.2 280.9 L676.9 281.4 L675.6 282.1 L674.2 282.7 L672.9 283.4 L671.6 284.2 L670.3 285.1 L669.0 285.9 L667.7 286.9 L666.4 287.8 L665.2 288.8 L664.0 289.9 L662.9 290.9 L661.8 292.0 L660.8 293.1 L659.8 294.2 L658.9 295.3 L657.7 296.9 L656.1 298.8 L654.4 300.6 L652.6 302.3 L650.6 303.8 L648.6 305.3 L646.5 306.6 L644.3 307.7 L642.0 308.8 L639.7 309.6 L637.3 310.3 L634.9 310.9 L632.5 311.3 L630.0 311.5 L627.5 311.6 L625.0 311.5 L622.5 311.3 L620.1 310.9 L617.7 310.3 L615.3 309.6 L613.0 308.8 L610.7 307.7 L608.5 306.6 L606.4 305.3 L604.4 303.8 L602.4 302.3 L600.6 300.6 L598.9 298.8 L597.3 296.9 L596.1 295.3 L595.2 294.2 L594.2 293.1 L593.2 292.0 L592.1 290.9 L591.0 289.9 L589.8 288.8 L588.6 287.8 L587.3 286.9 L586.0 285.9 L584.7 285.1 L583.4 284.2 L582.1 283.4 L580.8 282.7 L579.4 282.1 L578.1 281.4 L576.8 280.9 L575.5 280.4 L574.3 280.0 L573.1 279.7 L571.9 279.4 L570.8 279.1 L569.7 279.0 L568.6 278.8 L567.5 278.7 L566.4 278.7 L565.3 278.7 L564.1 278.8 L562.9 278.9 L561.6 279.0 L560.4 279.2 L559.1 279.5 L557.9 279.8 L556.6 280.1 L555.3 280.5 L554.1 281.0 L552.8 281.5 L551.5 282.1 L550.3 282.7 L549.0 283.3 L547.8 284.0 L546.7 284.7 L545.5 285.5 L544.4 286.3 L543.3 287.1 L542.3 288.0 L541.3 288.9 L540.4 289.8 L539.5 290.7 L538.7 291.6 L537.8 292.6 L537.0 293.6 L536.3 294.7 L535.5 295.8 L534.8 297.0 L534.1 298.2 L533.4 299.4 L532.8 300.7 L532.2 302.0 L531.7 303.4 L531.1 304.8 L530.6 306.3 L530.2 307.7 L529.8 309.2 L529.4 310.8 L529.1 312.3 L528.8 313.9 L528.5 315.5 L528.3 317.1 L528.2 318.8 L528.0 320.4 L528.0 322.1 L528.0 323.8 L528.0 325.4 L528.1 327.1 L528.2 328.7 L528.3 330.4 L528.6 332.0 L528.8 333.7 L529.1 335.3 L529.5 336.9 L529.8 338.4 L530.3 340.0 L530.7 341.5 L531.2 343.0 L531.8 344.4 L532.4 345.8 L533.0 347.2 L533.7 348.6 L534.3 349.9 L535.1 351.2 L535.8 352.4 L536.7 353.8 L537.6 355.1 L538.7 356.5 L539.8 357.9 L541.0 359.4 L542.2 360.9 L543.6 362.4 L545.0 364.0 L546.5 365.6 L548.1 367.2 L549.7 368.9 L551.4 370.6 L553.2 372.3 L555.0 374.0 L556.9 375.8 L558.9 377.7 L560.8 379.6 L562.9 381.5 L562.9 381.5 L564.9 383.4 L565.0 383.5 L567.0 385.4 L567.1 385.5 L569.1 387.4 L569.2 387.5 L571.2 389.4 L571.3 389.5 L573.2 391.4 L573.3 391.5 L575.2 393.4 L575.3 393.5 L577.2 395.4 L577.3 395.5 L579.2 397.4 L579.3 397.5 L581.2 399.4 L581.2 399.4 L583.1 401.3 L583.2 401.4 L585.0 403.3 L585.1 403.3 L586.9 405.2 L588.8 407.2 L590.7 409.1 L592.6 411.0 L594.4 412.9 L596.3 414.7 L598.1 416.6 L600.0 418.4 L601.8 420.3 L603.6 422.1 L605.4 423.9 L607.3 425.7 L609.1 427.5 L611.0 429.3 L612.9 431.2 L614.9 433.1 L616.9 435.0 L616.9 435.0 L618.9 436.9 L618.9 437.0 L620.9 438.9 L621.0 439.0 L622.9 440.9 L623.0 441.0 L625.0 443.0 L625.1 443.1 L627.1 445.0 L627.2 445.2 L627.5 445.5Z" fill="none" stroke="#14d814" stroke-width="1.4"/>
<path d="M627.5 432.7 L627.7 432.5 L627.8 432.4 L629.8 430.5 L629.9 430.4 L631.8 428.5 L631.9 428.5 L633.8 426.6 L635.8 424.7 L637.7 422.8 L639.6 421.0 L641.4 419.2 L643.2 417.5 L645.0 415.7 L646.8 413.9 L648.6 412.1 L650.5 410.2 L652.3 408.4 L654.1 406.5 L656.0 404.6 L657.8 402.7 L659.7 400.8 L661.6 398.9 L663.5 397.0 L663.5 396.9 L665.4 395.0 L665.5 395.0 L667.4 393.1 L667.4 393.0 L669.3 391.1 L669.4 391.0 L671.3 389.1 L671.4 389.0 L673.3 387.1 L673.4 387.0 L675.3 385.1 L675.5 385.0 L677.4 383.1 L677.5 382.9 L679.5 381.0 L679.6 380.9 L681.6 379.0 L681.8 378.8 L683.8 377.0 L683.9 376.8 L685.9 374.9 L685.9 374.9 L687.9 373.0 L689.9 371.1 L691.9 369.3 L693.7 367.5 L695.5 365.8 L697.2 364.1 L698.9 362.5 L700.5 360.9 L702.0 359.3 L703.4 357.8 L704.7 356.4 L705.9 355.0 L707.1 353.6 L708.2 352.3 L709.1 351.0 L710.0 349.8 L710.8 348.7 L711.5 347.6 L712.1 346.6 L712.7 345.5 L713.3 344.5 L713.8 343.4 L714.3 342.3 L714.8 341.1 L715.2 339.9 L715.7 338.7 L716.1 337.4 L716.4 336.1 L716.7 334.8 L717.0 333.5 L717.3 332.1 L717.5 330.8 L717.7 329.4 L717.8 328.0 L717.9 326.6 L718.0 325.1 L718.0 323.7 L718.0 322.3 L717.9 320.9 L717.8 319.5 L717.7 318.1 L717.5 316.8 L717.3 315.4 L717.1 314.1 L716.8 312.8 L716.5 311.5 L716.1 310.3 L715.8 309.1 L715.4 307.9 L714.9 306.7 L714.5 305.6 L714.0 304.6 L713.5 303.5 L713.0 302.6 L712.4 301.6 L711.9 300.7 L711.3 299.9 L710.7 299.0 L710.1 298.3 L709.5 297.5 L708.9 296.8 L708.2 296.2 L707.5 295.5 L706.8 294.8 L706.0 294.2 L705.2 293.5 L704.3 292.9 L703.4 292.3 L702.5 291.8 L701.6 291.2 L700.7 290.7 L699.7 290.3 L698.7 289.8 L697.7 289.5 L696.8 289.1 L695.8 288.8 L694.8 288.5 L693.9 288.3 L693.0 288.1 L692.1 288.0 L691.2 287.9 L690.3 287.8 L689.5 287.7 L688.7 287.7 L688.0 287.8 L687.3 287.8 L686.6 287.9 L685.9 288.0 L685.1 288.2 L684.3 288.4 L683.4 288.6 L682.5 288.9 L681.5 289.3 L680.5 289.7 L679.5 290.2 L678.4 290.7 L677.4 291.3 L676.3 291.9 L675.2 292.6 L674.2 293.3 L673.1 294.1 L672.1 294.9 L671.1 295.7 L670.1 296.6 L669.2 297.4 L668.3 298.3 L667.5 299.2 L666.7 300.1 L666.0 300.9 L664.8 302.4 L662.8 304.8 L660.7 307.0 L658.5 309.1 L656.1 311.0 L653.6 312.8 L651.0 314.4 L648.3 315.9 L645.5 317.1 L642.6 318.2 L639.6 319.1 L636.7 319.8 L633.6 320.3 L630.6 320.6 L627.5 320.7 L624.4 320.6 L621.4 320.3 L618.3 319.8 L615.4 319.1 L612.4 318.2 L609.5 317.1 L606.7 315.9 L604.0 314.4 L601.4 312.8 L598.9 311.0 L596.5 309.1 L594.3 307.0 L592.2 304.8 L590.2 302.4 L589.0 300.9 L588.3 300.1 L587.5 299.2 L586.7 298.3 L585.8 297.4 L584.9 296.6 L583.9 295.7 L582.9 294.9 L581.9 294.1 L580.8 293.3 L579.8 292.6 L578.7 291.9 L577.6 291.3 L576.6 290.7 L575.5 290.2 L574.5 289.7 L573.5 289.3 L572.5 288.9 L571.6 288.6 L570.7 288.4 L569.9 288.2 L569.1 288.0 L568.4 287.9 L567.7 287.8 L567.0 287.8 L566.3 287.7 L565.5 287.7 L564.7 287.8 L563.8 287.9 L562.9 288.0 L562.0 288.1 L561.1 288.3 L560.2 288.5 L559.2 288.8 L558.2 289.1 L557.3 289.5 L556.3 289.8 L555.3 290.3 L554.3 290.7 L553.4 291.2 L552.5 291.8 L551.6 292.3 L550.7 292.9 L549.8 293.5 L549.0 294.2 L548.2 294.8 L547.5 295.5 L546.8 296.2 L546.1 296.8 L545.5 297.5 L544.9 298.3 L544.3 299.0 L543.7 299.9 L543.1 300.7 L542.6 301.6 L542.0 302.6 L541.5 303.5 L541.0 304.6 L540.5 305.6 L540.1 306.7 L539.6 307.9 L539.2 309.1 L538.9 310.3 L538.5 311.5 L538.2 312.8 L537.9 314.1 L537.7 315.4 L537.5 316.8 L537.3 318.1 L537.2 319.5 L537.1 320.9 L537.0 322.3 L537.0 323.7 L537.0 325.1 L537.1 326.6 L537.2 328.0 L537.3 329.4 L537.5 330.8 L537.7 332.1 L538.0 333.5 L538.3 334.8 L538.6 336.1 L538.9 337.4 L539.3 338.7 L539.8 339.9 L540.2 341.1 L540.7 342.3 L541.2 343.4 L541.7 344.5 L542.3 345.5 L542.9 346.6 L543.5 347.6 L544.2 348.7 L545.0 349.8 L545.9 351.0 L546.8 352.3 L547.9 353.6 L549.1 355.0 L550.3 356.4 L551.6 357.8 L553.0 359.3 L554.5 360.9 L556.1 362.5 L557.8 364.1 L559.5 365.8 L561.3 367.5 L563.1 369.3 L565.1 371.1 L567.1 373.0 L569.1 374.9 L569.1 374.9 L571.1 376.8 L571.2 377.0 L573.2 378.8 L573.4 379.0 L575.4 380.9 L575.5 381.0 L577.5 382.9 L577.6 383.1 L579.5 385.0 L579.7 385.1 L581.6 387.0 L581.7 387.1 L583.6 389.0 L583.7 389.1 L585.6 391.0 L585.7 391.1 L587.6 393.0 L587.6 393.1 L589.5 395.0 L589.6 395.0 L591.5 396.9 L591.5 397.0 L593.4 398.9 L595.3 400.8 L597.2 402.7 L599.0 404.6 L600.9 406.5 L602.7 408.4 L604.5 410.2 L606.4 412.1 L608.2 413.9 L610.0 415.7 L611.8 417.5 L613.6 419.2 L615.4 421.0 L617.3 422.8 L619.2 424.7 L621.2 426.6 L623.1 428.5 L623.2 428.5 L625.1 430.4 L625.2 430.5 L627.2 432.4 L627.3 432.5 L627.5 432.7Z" fill="none" stroke="#14d814" stroke-width="1.4"/>
<path d="M627.5 420.1 L627.5 420.1 L629.5 418.2 L631.4 416.4 L633.3 414.5 L635.1 412.8 L636.9 411.0 L638.7 409.3 L640.4 407.5 L642.2 405.7 L644.0 403.9 L645.9 402.0 L647.7 400.2 L649.5 398.3 L651.4 396.4 L653.3 394.5 L655.1 392.6 L657.0 390.6 L657.1 390.6 L659.0 388.7 L659.0 388.6 L660.9 386.7 L661.0 386.6 L662.9 384.7 L663.0 384.6 L664.9 382.7 L665.0 382.6 L666.9 380.7 L667.1 380.6 L669.0 378.7 L669.1 378.5 L671.1 376.6 L671.2 376.5 L673.2 374.6 L673.4 374.4 L675.3 372.5 L675.5 372.3 L677.5 370.4 L677.7 370.3 L679.6 368.4 L679.7 368.3 L681.7 366.4 L683.7 364.5 L685.6 362.7 L687.5 361.0 L689.2 359.3 L690.9 357.7 L692.5 356.1 L694.0 354.6 L695.4 353.1 L696.7 351.7 L698.0 350.3 L699.1 349.1 L700.1 347.8 L701.1 346.7 L701.9 345.6 L702.7 344.6 L703.3 343.6 L703.9 342.8 L704.4 342.0 L704.8 341.2 L705.2 340.4 L705.6 339.6 L706.0 338.7 L706.4 337.8 L706.7 336.9 L707.1 335.9 L707.4 334.9 L707.7 333.8 L707.9 332.8 L708.2 331.7 L708.4 330.6 L708.5 329.5 L708.7 328.3 L708.8 327.2 L708.9 326.0 L708.9 324.9 L709.0 323.7 L708.9 322.6 L708.9 321.4 L708.8 320.3 L708.7 319.1 L708.6 318.0 L708.4 316.9 L708.2 315.9 L708.0 314.8 L707.7 313.8 L707.5 312.8 L707.2 311.8 L706.9 310.9 L706.5 310.0 L706.2 309.2 L705.8 308.4 L705.4 307.6 L705.1 306.9 L704.7 306.2 L704.3 305.6 L703.9 305.0 L703.5 304.5 L703.1 303.9 L702.7 303.5 L702.3 303.0 L701.8 302.6 L701.4 302.1 L700.9 301.7 L700.3 301.2 L699.8 300.8 L699.2 300.4 L698.6 299.9 L697.9 299.5 L697.3 299.2 L696.6 298.8 L695.9 298.5 L695.2 298.2 L694.5 297.9 L693.9 297.7 L693.2 297.5 L692.6 297.3 L691.9 297.1 L691.3 297.0 L690.8 296.9 L690.2 296.8 L689.7 296.8 L689.3 296.8 L688.9 296.8 L688.5 296.8 L688.1 296.8 L687.8 296.9 L687.5 296.9 L687.1 297.0 L686.6 297.1 L686.1 297.3 L685.5 297.5 L684.8 297.7 L684.1 298.0 L683.4 298.4 L682.6 298.7 L681.8 299.2 L681.0 299.7 L680.2 300.2 L679.3 300.7 L678.5 301.3 L677.7 302.0 L676.9 302.6 L676.2 303.3 L675.4 303.9 L674.8 304.6 L674.1 305.3 L673.5 306.0 L673.0 306.6 L671.9 308.0 L669.6 310.8 L667.1 313.4 L664.4 315.9 L661.6 318.2 L658.6 320.3 L655.5 322.3 L652.2 324.0 L648.9 325.5 L645.5 326.8 L642.0 327.8 L638.4 328.6 L634.8 329.2 L631.2 329.6 L627.5 329.7 L623.8 329.6 L620.2 329.2 L616.6 328.6 L613.0 327.8 L609.5 326.8 L606.1 325.5 L602.8 324.0 L599.5 322.3 L596.4 320.3 L593.4 318.2 L590.6 315.9 L587.9 313.4 L585.4 310.8 L583.1 308.0 L582.0 306.6 L581.5 306.0 L580.9 305.3 L580.2 304.6 L579.6 303.9 L578.8 303.3 L578.1 302.6 L577.3 302.0 L576.5 301.3 L575.7 300.7 L574.8 300.2 L574.0 299.7 L573.2 299.2 L572.4 298.7 L571.6 298.4 L570.9 298.0 L570.2 297.7 L569.5 297.5 L568.9 297.3 L568.4 297.1 L567.9 297.0 L567.5 296.9 L567.2 296.9 L566.9 296.8 L566.5 296.8 L566.1 296.8 L565.7 296.8 L565.3 296.8 L564.8 296.8 L564.2 296.9 L563.7 297.0 L563.1 297.1 L562.4 297.3 L561.8 297.5 L561.1 297.7 L560.5 297.9 L559.8 298.2 L559.1 298.5 L558.4 298.8 L557.7 299.2 L557.1 299.5 L556.4 299.9 L555.8 300.4 L555.2 300.8 L554.7 301.2 L554.1 301.7 L553.6 302.1 L553.2 302.6 L552.7 303.0 L552.3 303.5 L551.9 303.9 L551.5 304.5 L551.1 305.0 L550.7 305.6 L550.3 306.2 L549.9 306.9 L549.6 307.6 L549.2 308.4 L548.8 309.2 L548.5 310.0 L548.1 310.9 L547.8 311.8 L547.5 312.8 L547.3 313.8 L547.0 314.8 L546.8 315.9 L546.6 316.9 L546.4 318.0 L546.3 319.1 L546.2 320.3 L546.1 321.4 L546.1 322.6 L546.0 323.7 L546.1 324.9 L546.1 326.0 L546.2 327.2 L546.3 328.3 L546.5 329.5 L546.6 330.6 L546.8 331.7 L547.1 332.8 L547.3 333.8 L547.6 334.9 L547.9 335.9 L548.3 336.9 L548.6 337.8 L549.0 338.7 L549.4 339.6 L549.8 340.4 L550.2 341.2 L550.6 342.0 L551.1 342.8 L551.7 343.6 L552.3 344.6 L553.1 345.6 L553.9 346.7 L554.9 347.8 L555.9 349.1 L557.0 350.3 L558.3 351.7 L559.6 353.1 L561.0 354.6 L562.5 356.1 L564.1 357.7 L565.8 359.3 L567.5 361.0 L569.4 362.7 L571.3 364.5 L573.3 366.4 L575.3 368.3 L575.4 368.4 L577.3 370.3 L577.5 370.4 L579.5 372.3 L579.7 372.5 L581.6 374.4 L581.8 374.6 L583.8 376.5 L583.9 376.6 L585.9 378.5 L586.0 378.7 L587.9 380.6 L588.1 380.7 L590.0 382.6 L590.1 382.7 L592.0 384.6 L592.1 384.7 L594.0 386.6 L594.1 386.7 L596.0 388.6 L596.0 388.7 L597.9 390.6 L598.0 390.6 L599.8 392.6 L601.7 394.5 L603.6 396.4 L605.5 398.3 L607.3 400.2 L609.1 402.0 L611.0 403.9 L612.8 405.7 L614.6 407.5 L616.3 409.3 L618.1 411.0 L619.9 412.8 L621.7 414.5 L623.6 416.4 L625.5 418.2 L627.4 420.1 L627.5 420.1Z" fill="none" stroke="#14d814" stroke-width="1.4"/>
<path d="M565.9 305.8 L565.8 305.8 L565.7 305.8 L565.5 305.9 L565.3 305.9 L565.0 306.0 L564.7 306.0 L564.4 306.1 L564.0 306.2 L563.7 306.4 L563.3 306.5 L562.9 306.7 L562.5 306.9 L562.1 307.1 L561.7 307.3 L561.3 307.5 L561.0 307.8 L560.6 308.0 L560.3 308.3 L560.0 308.5 L559.8 308.7 L559.5 309.0 L559.3 309.2 L559.2 309.4 L559.0 309.6 L558.8 309.9 L558.5 310.2 L558.3 310.5 L558.1 310.9 L557.9 311.3 L557.6 311.7 L557.4 312.2 L557.1 312.8 L556.9 313.4 L556.7 314.0 L556.4 314.6 L556.2 315.3 L556.0 316.1 L555.8 316.8 L555.7 317.6 L555.5 318.4 L555.4 319.3 L555.3 320.1 L555.2 321.0 L555.1 321.9 L555.1 322.8 L555.1 323.7 L555.1 324.6 L555.1 325.5 L555.2 326.4 L555.3 327.3 L555.4 328.2 L555.5 329.1 L555.7 329.9 L555.9 330.7 L556.1 331.6 L556.3 332.3 L556.5 333.1 L556.8 333.8 L557.0 334.5 L557.3 335.1 L557.6 335.8 L557.9 336.3 L558.1 336.9 L558.4 337.4 L558.8 337.9 L559.2 338.6 L559.7 339.3 L560.3 340.1 L561.0 341.1 L561.8 342.1 L562.7 343.1 L563.8 344.3 L564.9 345.5 L566.1 346.9 L567.5 348.2 L568.9 349.7 L570.4 351.2 L572.1 352.8 L573.8 354.5 L575.6 356.2 L577.5 358.0 L579.5 359.8 L581.5 361.7 L581.6 361.8 L583.6 363.7 L583.7 363.9 L585.7 365.8 L585.9 366.0 L587.9 367.9 L588.1 368.1 L590.1 370.0 L590.3 370.2 L592.2 372.1 L592.4 372.3 L594.3 374.2 L594.5 374.3 L596.4 376.2 L596.5 376.3 L598.4 378.2 L598.5 378.4 L600.4 380.3 L600.5 380.4 L602.4 382.3 L602.5 382.3 L604.3 384.3 L604.4 384.3 L606.3 386.2 L608.2 388.2 L610.1 390.1 L611.9 392.0 L613.8 393.8 L615.6 395.7 L617.4 397.5 L619.2 399.3 L621.0 401.1 L622.7 402.9 L624.5 404.6 L626.2 406.3 L627.5 407.6 L628.8 406.3 L630.5 404.6 L632.3 402.9 L634.0 401.1 L635.8 399.3 L637.6 397.5 L639.4 395.7 L641.2 393.8 L643.1 392.0 L644.9 390.1 L646.8 388.2 L648.7 386.3 L650.6 384.3 L650.7 384.3 L652.5 382.3 L652.6 382.3 L654.5 380.4 L654.6 380.3 L656.5 378.4 L656.6 378.2 L658.5 376.3 L658.6 376.2 L660.5 374.3 L660.7 374.2 L662.6 372.3 L662.8 372.1 L664.7 370.2 L664.9 370.0 L666.9 368.1 L667.1 367.9 L669.1 366.0 L669.3 365.8 L671.3 363.9 L671.4 363.7 L673.4 361.8 L673.5 361.7 L675.5 359.8 L677.5 358.0 L679.4 356.2 L681.2 354.5 L682.9 352.8 L684.6 351.2 L686.1 349.7 L687.5 348.2 L688.9 346.9 L690.1 345.5 L691.2 344.3 L692.3 343.1 L693.2 342.1 L694.0 341.1 L694.7 340.1 L695.3 339.3 L695.8 338.6 L696.2 337.9 L696.6 337.4 L696.9 336.9 L697.1 336.3 L697.4 335.8 L697.7 335.1 L698.0 334.5 L698.2 333.8 L698.5 333.1 L698.7 332.3 L698.9 331.6 L699.1 330.7 L699.3 329.9 L699.5 329.1 L699.6 328.2 L699.7 327.3 L699.8 326.4 L699.9 325.5 L699.9 324.6 L699.9 323.7 L699.9 322.8 L699.9 321.9 L699.8 321.0 L699.7 320.1 L699.6 319.3 L699.5 318.4 L699.3 317.6 L699.2 316.8 L699.0 316.1 L698.8 315.3 L698.6 314.6 L698.3 314.0 L698.1 313.4 L697.9 312.8 L697.6 312.2 L697.4 311.7 L697.1 311.3 L696.9 310.9 L696.7 310.5 L696.5 310.2 L696.2 309.9 L696.0 309.6 L695.8 309.4 L695.7 309.2 L695.5 309.0 L695.2 308.7 L695.0 308.5 L694.7 308.3 L694.4 308.0 L694.0 307.8 L693.7 307.5 L693.3 307.3 L692.9 307.1 L692.5 306.9 L692.1 306.7 L691.7 306.5 L691.3 306.4 L691.0 306.2 L690.6 306.1 L690.3 306.0 L690.0 306.0 L689.7 305.9 L689.5 305.9 L689.3 305.8 L689.2 305.8 L689.1 305.8 L689.0 305.8 L688.8 305.9 L688.5 306.0 L688.2 306.1 L687.8 306.3 L687.3 306.5 L686.8 306.8 L686.3 307.1 L685.7 307.4 L685.1 307.8 L684.5 308.2 L683.9 308.6 L683.3 309.0 L682.8 309.5 L682.2 310.0 L681.7 310.5 L681.2 310.9 L680.8 311.4 L680.4 311.8 L680.0 312.3 L679.1 313.5 L676.4 316.8 L673.4 319.9 L670.3 322.7 L667.0 325.4 L663.6 327.9 L660.0 330.1 L656.2 332.1 L652.3 333.8 L648.4 335.3 L644.3 336.5 L640.2 337.5 L636.0 338.2 L631.7 338.6 L627.5 338.7 L623.3 338.6 L619.0 338.2 L614.8 337.5 L610.7 336.5 L606.6 335.3 L602.7 333.8 L598.8 332.1 L595.0 330.1 L591.4 327.9 L588.0 325.4 L584.7 322.7 L581.6 319.9 L578.6 316.8 L575.9 313.5 L575.0 312.3 L574.6 311.8 L574.2 311.4 L573.8 310.9 L573.3 310.5 L572.8 310.0 L572.2 309.5 L571.7 309.0 L571.1 308.6 L570.5 308.2 L569.9 307.8 L569.3 307.4 L568.7 307.1 L568.2 306.8 L567.7 306.5 L567.2 306.3 L566.8 306.1 L566.5 306.0 L566.2 305.9 L566.0 305.8 L565.9 305.8Z" fill="none" stroke="#14d814" stroke-width="1.4"/>
<path d="M565.7 315.8 L565.7 315.9 L565.6 316.1 L565.4 316.4 L565.3 316.7 L565.2 317.0 L565.0 317.4 L564.9 317.9 L564.8 318.3 L564.6 318.8 L564.5 319.4 L564.4 319.9 L564.3 320.5 L564.3 321.1 L564.2 321.7 L564.2 322.4 L564.1 323.0 L564.1 323.7 L564.1 324.3 L564.2 325.0 L564.2 325.6 L564.3 326.3 L564.4 326.9 L564.5 327.5 L564.6 328.1 L564.7 328.7 L564.8 329.3 L565.0 329.8 L565.1 330.3 L565.3 330.8 L565.4 331.2 L565.6 331.6 L565.8 331.9 L565.9 332.3 L566.1 332.5 L566.2 332.8 L566.4 333.1 L566.7 333.5 L567.1 334.1 L567.5 334.7 L568.1 335.4 L568.8 336.3 L569.6 337.2 L570.5 338.3 L571.5 339.4 L572.7 340.6 L573.9 341.9 L575.3 343.3 L576.8 344.8 L578.4 346.3 L580.0 347.9 L581.8 349.6 L583.7 351.4 L585.7 353.3 L587.7 355.2 L587.8 355.3 L589.8 357.2 L590.0 357.3 L592.0 359.2 L592.2 359.5 L594.2 361.4 L594.4 361.6 L596.4 363.5 L596.6 363.7 L598.5 365.6 L598.7 365.8 L600.7 367.7 L600.8 367.9 L602.7 369.8 L602.9 370.0 L604.8 371.9 L604.9 372.0 L606.8 373.9 L606.9 374.0 L608.8 375.9 L608.9 376.0 L610.8 377.9 L610.8 378.0 L612.7 379.9 L614.6 381.8 L616.5 383.7 L618.4 385.6 L620.2 387.5 L622.0 389.3 L623.8 391.1 L625.6 392.9 L627.3 394.7 L627.5 394.9 L627.7 394.7 L629.4 392.9 L631.2 391.1 L633.0 389.3 L634.8 387.5 L636.6 385.6 L638.5 383.7 L640.4 381.8 L642.2 379.9 L644.2 378.0 L644.2 377.9 L646.1 376.0 L646.2 375.9 L648.1 374.0 L648.2 373.9 L650.1 372.0 L650.2 371.9 L652.1 370.0 L652.3 369.8 L654.2 367.9 L654.3 367.7 L656.3 365.8 L656.5 365.6 L658.4 363.7 L658.6 363.5 L660.6 361.6 L660.8 361.4 L662.8 359.5 L663.0 359.2 L665.0 357.3 L665.2 357.2 L667.2 355.3 L667.3 355.2 L669.3 353.3 L671.3 351.4 L673.2 349.6 L675.0 347.9 L676.6 346.3 L678.2 344.8 L679.7 343.3 L681.1 341.9 L682.3 340.6 L683.5 339.4 L684.5 338.3 L685.4 337.2 L686.2 336.3 L686.9 335.4 L687.5 334.7 L687.9 334.1 L688.3 333.5 L688.6 333.1 L688.8 332.8 L688.9 332.5 L689.1 332.3 L689.2 331.9 L689.4 331.6 L689.6 331.2 L689.7 330.8 L689.9 330.3 L690.0 329.8 L690.2 329.3 L690.3 328.7 L690.4 328.1 L690.5 327.5 L690.6 326.9 L690.7 326.3 L690.8 325.6 L690.8 325.0 L690.9 324.3 L690.9 323.7 L690.9 323.0 L690.8 322.4 L690.8 321.7 L690.7 321.1 L690.7 320.5 L690.6 319.9 L690.5 319.4 L690.4 318.8 L690.2 318.3 L690.1 317.9 L690.0 317.4 L689.8 317.0 L689.7 316.7 L689.6 316.4 L689.4 316.1 L689.3 315.9 L689.3 315.8 L689.0 316.1 L688.6 316.4 L688.3 316.7 L688.0 317.0 L687.7 317.3 L687.5 317.5 L687.3 317.7 L687.1 317.9 L686.2 319.1 L683.1 322.8 L679.8 326.3 L676.3 329.6 L672.5 332.6 L668.6 335.4 L664.5 338.0 L660.2 340.2 L655.8 342.2 L651.2 343.9 L646.6 345.3 L641.9 346.4 L637.1 347.2 L632.3 347.6 L627.5 347.8 L622.7 347.6 L617.9 347.2 L613.1 346.4 L608.4 345.3 L603.8 343.9 L599.2 342.2 L594.8 340.2 L590.5 338.0 L586.4 335.4 L582.5 332.6 L578.7 329.6 L575.2 326.3 L571.9 322.8 L568.8 319.1 L567.9 317.9 L567.7 317.7 L567.5 317.5 L567.3 317.3 L567.0 317.0 L566.7 316.7 L566.4 316.4 L566.0 316.1 L565.7 315.8Z" fill="none" stroke="#14d814" stroke-width="1.4"/>
<path d="M596.1 350.7 L596.2 350.8 L598.2 352.7 L598.5 353.0 L600.5 354.9 L600.7 355.1 L602.7 357.0 L602.9 357.3 L604.9 359.2 L605.1 359.4 L607.0 361.3 L607.2 361.5 L609.1 363.4 L609.3 363.6 L611.2 365.5 L611.3 365.6 L613.2 367.5 L613.4 367.6 L615.2 369.6 L615.3 369.7 L617.2 371.6 L617.3 371.6 L619.2 373.5 L621.1 375.5 L623.0 377.4 L624.8 379.3 L626.6 381.2 L627.5 382.0 L628.4 381.2 L630.2 379.3 L632.0 377.4 L633.9 375.5 L635.8 373.6 L637.7 371.6 L637.8 371.6 L639.7 369.7 L639.8 369.6 L641.6 367.6 L641.8 367.5 L643.7 365.6 L643.8 365.5 L645.7 363.6 L645.9 363.4 L647.8 361.5 L648.0 361.3 L649.9 359.4 L650.1 359.2 L652.1 357.3 L652.3 357.0 L654.3 355.1 L654.5 354.9 L656.5 353.0 L656.8 352.7 L658.8 350.8 L658.9 350.7 L654.1 352.5 L648.9 354.0 L643.7 355.2 L638.3 356.1 L632.9 356.6 L627.5 356.8 L622.1 356.6 L616.7 356.1 L611.3 355.2 L606.1 354.0 L600.9 352.5 L596.1 350.7Z" fill="none" stroke="#14d814" stroke-width="1.4"/>
<path d="M624.2 365.8 L625.6 367.2 L627.5 369.1 L629.3 367.2 L630.8 365.8 L627.5 365.9 L624.2 365.8Z" fill="none" stroke="#14d814" stroke-width="1.4"/>
<clipPath id="cb1"><path d="M480 372 L540 335 L580 335 L623 378 L623 430 L612 472 L480 472Z"/></clipPath>
<clipPath id="cb2"><path d="M640 380 L680 335 L780 335 L780 470 L640 470Z"/></clipPath>
<path d="M627.5 486.1 L627.9 485.5 L628.1 485.3 L629.7 483.2 L629.9 483.1 L631.6 481.0 L631.7 480.9 L633.4 478.8 L633.5 478.7 L635.3 476.7 L635.4 476.5 L637.2 474.5 L637.3 474.4 L639.2 472.4 L639.3 472.3 L641.1 470.3 L641.2 470.3 L643.1 468.3 L643.2 468.2 L645.1 466.3 L645.1 466.2 L647.0 464.3 L647.1 464.2 L649.0 462.3 L649.1 462.2 L651.0 460.3 L651.1 460.3 L653.0 458.4 L653.0 458.3 L655.0 456.4 L655.0 456.4 L657.0 454.5 L657.0 454.5 L659.0 452.6 L660.9 450.7 L662.9 448.8 L664.8 446.9 L666.7 445.1 L668.6 443.2 L670.5 441.3 L672.4 439.5 L674.3 437.6 L676.1 435.7 L678.0 433.8 L679.9 431.9 L681.8 430.0 L683.6 428.1 L685.5 426.2 L687.4 424.3 L689.3 422.3 L689.3 422.3 L691.2 420.4 L691.2 420.4 L693.1 418.5 L693.1 418.5 L695.0 416.6 L695.0 416.6 L696.9 414.7 L696.9 414.6 L698.8 412.7 L698.8 412.7 L700.8 410.8 L700.8 410.8 L702.7 408.9 L702.8 408.9 L704.7 407.0 L704.8 406.9 L706.7 405.0 L706.8 405.0 L708.7 403.1 L708.8 403.1 L710.7 401.2 L710.8 401.2 L712.8 399.3 L714.8 397.4 L716.8 395.5 L718.7 393.6 L720.7 391.8 L722.6 389.9 L724.5 388.0 L726.3 386.2 L728.1 384.3 L729.9 382.4 L731.6 380.5 L733.3 378.6 L734.9 376.7 L736.5 374.8 L738.0 372.8 L739.4 370.9 L740.8 368.9 L742.1 366.9 L743.3 364.9 L744.5 362.9 L745.6 360.8 L746.6 358.7 L747.5 356.5 L748.4 354.4 L749.3 352.1 L750.1 349.9 L750.8 347.6 L751.4 345.3 L752.0 343.0 L752.5 340.6 L752.9 338.2 L753.3 335.9 L753.6 333.5 L753.8 331.1 L754.0 328.6 L754.1 326.2 L754.2 323.8 L754.1 321.4 L754.0 319.0 L753.9 316.6 L753.6 314.2 L753.3 311.8 L753.0 309.4 L752.6 307.1 L752.1 304.7 L751.5 302.4 L750.9 300.1 L750.2 297.9 L749.4 295.7 L748.6 293.5 L747.7 291.3 L746.7 289.2 L745.7 287.1 L744.6 285.1 L743.5 283.1 L742.3 281.1 L741.0 279.2 L739.7 277.4 L738.3 275.6 L736.9 273.9 L735.3 272.2 L733.8 270.5 L732.1 269.0 L730.4 267.4 L728.6 266.0 L726.8 264.6 L724.9 263.2 L723.0 261.9 L721.0 260.7 L719.0 259.5 L716.9 258.4 L714.8 257.4 L712.7 256.5 L710.6 255.6 L708.4 254.9 L706.2 254.2 L704.0 253.5 L701.7 253.0 L699.5 252.5 L697.2 252.2 L695.0 251.9 L692.7 251.7 L690.4 251.6 L688.2 251.6 L685.9 251.7 L683.7 251.8 L681.5 252.1 L679.3 252.5 L677.0 252.9 L674.8 253.5 L672.6 254.1 L670.4 254.9 L668.2 255.7 L666.0 256.6 L663.8 257.6 L661.7 258.7 L659.6 259.8 L657.5 261.1 L655.4 262.3 L653.4 263.7 L651.4 265.1 L649.5 266.6 L647.7 268.2 L645.8 269.7 L644.1 271.4 L642.4 273.0 L640.8 274.8 L639.2 276.5 L637.8 278.3 L636.3 280.2 L635.8 280.8 L635.3 281.3 L634.8 281.8 L634.2 282.2 L633.6 282.7 L633.0 283.0 L632.4 283.4 L631.7 283.7 L631.0 283.9 L630.4 284.1 L629.7 284.3 L628.9 284.4 L628.2 284.5 L627.5 284.5 L626.8 284.5 L626.1 284.4 L625.3 284.3 L624.6 284.1 L624.0 283.9 L623.3 283.7 L622.6 283.4 L622.0 283.0 L621.4 282.7 L620.8 282.2 L620.2 281.8 L619.7 281.3 L619.2 280.8 L618.7 280.2 L617.2 278.3 L615.8 276.5 L614.2 274.8 L612.6 273.0 L610.9 271.4 L609.2 269.7 L607.3 268.2 L605.5 266.6 L603.6 265.1 L601.6 263.7 L599.6 262.3 L597.5 261.1 L595.4 259.8 L593.3 258.7 L591.2 257.6 L589.0 256.6 L586.8 255.7 L584.6 254.9 L582.4 254.1 L580.2 253.5 L578.0 252.9 L575.7 252.5 L573.5 252.1 L571.3 251.8 L569.1 251.7 L566.8 251.6 L564.6 251.6 L562.3 251.7 L560.0 251.9 L557.8 252.2 L555.5 252.5 L553.3 253.0 L551.0 253.5 L548.8 254.2 L546.6 254.9 L544.4 255.6 L542.3 256.5 L540.2 257.4 L538.1 258.4 L536.0 259.5 L534.0 260.7 L532.0 261.9 L530.1 263.2 L528.2 264.6 L526.4 266.0 L524.6 267.4 L522.9 269.0 L521.2 270.5 L519.7 272.2 L518.1 273.9 L516.7 275.6 L515.3 277.4 L514.0 279.2 L512.7 281.1 L511.5 283.1 L510.4 285.1 L509.3 287.1 L508.3 289.2 L507.3 291.3 L506.4 293.5 L505.6 295.7 L504.8 297.9 L504.1 300.1 L503.5 302.4 L502.9 304.7 L502.4 307.1 L502.0 309.4 L501.7 311.8 L501.4 314.2 L501.1 316.6 L501.0 319.0 L500.9 321.4 L500.8 323.8 L500.9 326.2 L501.0 328.6 L501.2 331.1 L501.4 333.5 L501.7 335.9 L502.1 338.2 L502.5 340.6 L503.0 343.0 L503.6 345.3 L504.2 347.6 L504.9 349.9 L505.7 352.1 L506.6 354.4 L507.5 356.5 L508.4 358.7 L509.4 360.8 L510.5 362.9 L511.7 364.9 L512.9 366.9 L514.2 368.9 L515.6 370.9 L517.0 372.8 L518.5 374.8 L520.1 376.7 L521.7 378.6 L523.4 380.5 L525.1 382.4 L526.9 384.3 L528.7 386.2 L530.5 388.0 L532.4 389.9 L534.3 391.8 L536.3 393.6 L538.2 395.5 L540.2 397.4 L542.2 399.3 L544.2 401.2 L544.3 401.2 L546.2 403.1 L546.3 403.1 L548.2 405.0 L548.3 405.0 L550.2 406.9 L550.3 407.0 L552.2 408.9 L552.3 408.9 L554.2 410.8 L554.2 410.8 L556.2 412.7 L556.2 412.7 L558.1 414.6 L558.1 414.7 L560.0 416.6 L560.0 416.6 L561.9 418.5 L561.9 418.5 L563.8 420.4 L563.8 420.4 L565.7 422.3 L565.7 422.3 L567.6 424.3 L569.5 426.2 L571.4 428.1 L573.2 430.0 L575.1 431.9 L577.0 433.8 L578.9 435.7 L580.7 437.6 L582.6 439.5 L584.5 441.3 L586.4 443.2 L588.3 445.1 L590.2 446.9 L592.1 448.8 L594.1 450.7 L596.0 452.6 L598.0 454.5 L598.0 454.5 L600.0 456.4 L600.0 456.4 L602.0 458.3 L602.0 458.4 L603.9 460.3 L604.0 460.3 L605.9 462.2 L606.0 462.3 L607.9 464.2 L608.0 464.3 L609.9 466.2 L609.9 466.3 L611.8 468.2 L611.9 468.3 L613.8 470.3 L613.9 470.3 L615.7 472.3 L615.8 472.4 L617.7 474.4 L617.8 474.5 L619.6 476.5 L619.7 476.7 L621.5 478.7 L621.6 478.8 L623.3 480.9 L623.4 481.0 L625.1 483.1 L625.3 483.2 L626.9 485.3 L627.1 485.5 L627.5 486.1Z" fill="none" stroke="#2e4fd6" stroke-width="1.6" stroke-dasharray="9 3" stroke-dashoffset="0" clip-path="url(#cb1)"/>
<path d="M627.5 471.9 L628.5 470.7 L628.7 470.5 L630.5 468.5 L630.7 468.3 L632.5 466.3 L632.7 466.1 L634.5 464.2 L634.7 464.0 L636.6 462.0 L636.7 461.9 L638.6 460.0 L638.7 459.9 L640.6 457.9 L640.7 457.8 L642.6 455.9 L642.7 455.8 L644.7 453.9 L644.7 453.8 L646.7 451.9 L646.7 451.9 L648.7 450.0 L648.7 449.9 L650.7 448.0 L650.7 448.0 L652.7 446.1 L654.6 444.2 L656.6 442.3 L658.5 440.5 L660.4 438.6 L662.3 436.8 L664.1 434.9 L666.0 433.1 L667.9 431.2 L669.7 429.3 L671.6 427.4 L673.4 425.5 L675.3 423.7 L677.2 421.7 L679.1 419.8 L680.9 417.9 L682.8 416.0 L682.8 416.0 L684.7 414.1 L684.7 414.1 L686.6 412.2 L686.7 412.1 L688.6 410.2 L688.6 410.2 L690.5 408.3 L690.5 408.2 L692.4 406.3 L692.5 406.3 L694.4 404.4 L694.5 404.3 L696.4 402.4 L696.5 402.4 L698.4 400.5 L698.5 400.4 L700.4 398.5 L700.5 398.5 L702.5 396.6 L702.5 396.5 L704.5 394.6 L704.6 394.6 L706.6 392.7 L708.6 390.8 L710.5 389.0 L712.5 387.1 L714.4 385.3 L716.2 383.4 L718.1 381.6 L719.9 379.8 L721.6 378.0 L723.3 376.2 L724.9 374.5 L726.5 372.7 L728.0 370.9 L729.4 369.1 L730.8 367.4 L732.1 365.6 L733.3 363.9 L734.4 362.1 L735.5 360.3 L736.5 358.6 L737.5 356.7 L738.4 354.9 L739.2 353.0 L740.0 351.0 L740.8 349.1 L741.5 347.1 L742.1 345.1 L742.6 343.0 L743.2 340.9 L743.6 338.8 L744.0 336.7 L744.3 334.6 L744.6 332.4 L744.8 330.3 L745.0 328.1 L745.1 326.0 L745.1 323.8 L745.1 321.6 L745.0 319.5 L744.9 317.3 L744.7 315.2 L744.4 313.0 L744.1 310.9 L743.7 308.8 L743.2 306.7 L742.7 304.7 L742.2 302.7 L741.6 300.7 L740.9 298.7 L740.2 296.8 L739.4 294.9 L738.6 293.0 L737.7 291.2 L736.7 289.4 L735.7 287.7 L734.7 286.0 L733.6 284.4 L732.5 282.8 L731.3 281.3 L730.0 279.8 L728.7 278.3 L727.4 276.9 L726.0 275.6 L724.5 274.3 L723.0 273.0 L721.4 271.8 L719.8 270.6 L718.1 269.5 L716.4 268.5 L714.7 267.5 L712.9 266.5 L711.1 265.6 L709.2 264.8 L707.4 264.1 L705.5 263.4 L703.6 262.8 L701.7 262.3 L699.8 261.8 L697.8 261.4 L695.9 261.1 L694.0 260.9 L692.1 260.7 L690.2 260.6 L688.3 260.6 L686.4 260.7 L684.6 260.8 L682.7 261.1 L680.9 261.4 L679.1 261.7 L677.2 262.2 L675.3 262.8 L673.4 263.4 L671.5 264.1 L669.6 264.9 L667.7 265.8 L665.9 266.7 L664.0 267.7 L662.2 268.8 L660.4 269.9 L658.6 271.1 L656.9 272.4 L655.2 273.7 L653.5 275.0 L651.9 276.4 L650.4 277.9 L648.9 279.4 L647.5 280.9 L646.1 282.4 L644.8 283.9 L643.4 285.8 L642.6 286.8 L641.7 287.7 L640.7 288.6 L639.7 289.4 L638.6 290.2 L637.5 290.9 L636.3 291.5 L635.2 292.0 L633.9 292.5 L632.7 292.9 L631.4 293.2 L630.1 293.4 L628.8 293.5 L627.5 293.5 L626.2 293.5 L624.9 293.4 L623.6 293.2 L622.3 292.9 L621.1 292.5 L619.8 292.0 L618.7 291.5 L617.5 290.9 L616.4 290.2 L615.3 289.4 L614.3 288.6 L613.3 287.7 L612.4 286.8 L611.6 285.8 L610.2 283.9 L608.9 282.4 L607.5 280.9 L606.1 279.4 L604.6 277.9 L603.1 276.4 L601.5 275.0 L599.8 273.7 L598.1 272.4 L596.4 271.1 L594.6 269.9 L592.8 268.8 L591.0 267.7 L589.1 266.7 L587.3 265.8 L585.4 264.9 L583.5 264.1 L581.6 263.4 L579.7 262.8 L577.8 262.2 L575.9 261.7 L574.1 261.4 L572.3 261.1 L570.4 260.8 L568.6 260.7 L566.7 260.6 L564.8 260.6 L562.9 260.7 L561.0 260.9 L559.1 261.1 L557.2 261.4 L555.2 261.8 L553.3 262.3 L551.4 262.8 L549.5 263.4 L547.6 264.1 L545.8 264.8 L543.9 265.6 L542.1 266.5 L540.3 267.5 L538.6 268.5 L536.9 269.5 L535.2 270.6 L533.6 271.8 L532.0 273.0 L530.5 274.3 L529.0 275.6 L527.6 276.9 L526.3 278.3 L525.0 279.8 L523.7 281.3 L522.5 282.8 L521.4 284.4 L520.3 286.0 L519.3 287.7 L518.3 289.4 L517.3 291.2 L516.4 293.0 L515.6 294.9 L514.8 296.8 L514.1 298.7 L513.4 300.7 L512.8 302.7 L512.3 304.7 L511.8 306.7 L511.3 308.8 L510.9 310.9 L510.6 313.0 L510.3 315.2 L510.1 317.3 L510.0 319.5 L509.9 321.6 L509.9 323.8 L509.9 326.0 L510.0 328.1 L510.2 330.3 L510.4 332.4 L510.7 334.6 L511.0 336.7 L511.4 338.8 L511.8 340.9 L512.4 343.0 L512.9 345.1 L513.5 347.1 L514.2 349.1 L515.0 351.0 L515.8 353.0 L516.6 354.9 L517.5 356.7 L518.5 358.6 L519.5 360.3 L520.6 362.1 L521.7 363.9 L522.9 365.6 L524.2 367.4 L525.6 369.1 L527.0 370.9 L528.5 372.7 L530.1 374.5 L531.7 376.2 L533.4 378.0 L535.1 379.8 L536.9 381.6 L538.8 383.4 L540.6 385.3 L542.5 387.1 L544.5 389.0 L546.4 390.8 L548.4 392.7 L550.4 394.6 L550.5 394.6 L552.5 396.5 L552.5 396.6 L554.5 398.5 L554.6 398.5 L556.5 400.4 L556.6 400.5 L558.5 402.4 L558.6 402.4 L560.5 404.3 L560.6 404.4 L562.5 406.3 L562.6 406.3 L564.5 408.2 L564.5 408.3 L566.4 410.2 L566.4 410.2 L568.3 412.1 L568.4 412.2 L570.3 414.1 L570.3 414.1 L572.2 416.0 L572.2 416.0 L574.1 417.9 L575.9 419.8 L577.8 421.7 L579.7 423.7 L581.6 425.5 L583.4 427.4 L585.3 429.3 L587.1 431.2 L589.0 433.1 L590.9 434.9 L592.7 436.8 L594.6 438.6 L596.5 440.5 L598.4 442.3 L600.4 444.2 L602.3 446.1 L604.3 448.0 L604.3 448.0 L606.3 449.9 L606.3 450.0 L608.3 451.9 L608.3 451.9 L610.3 453.8 L610.3 453.9 L612.3 455.8 L612.4 455.9 L614.3 457.8 L614.4 457.9 L616.3 459.9 L616.4 460.0 L618.3 461.9 L618.4 462.0 L620.3 464.0 L620.5 464.2 L622.3 466.1 L622.5 466.3 L624.3 468.3 L624.5 468.5 L626.3 470.5 L626.5 470.7 L627.5 471.9Z" fill="none" stroke="#2e4fd6" stroke-width="1.6" stroke-dasharray="9 3" stroke-dashoffset="2" clip-path="url(#cb1)"/>
<path d="M627.5 471.9 L628.5 470.7 L628.7 470.5 L630.5 468.5 L630.7 468.3 L632.5 466.3 L632.7 466.1 L634.5 464.2 L634.7 464.0 L636.6 462.0 L636.7 461.9 L638.6 460.0 L638.7 459.9 L640.6 457.9 L640.7 457.8 L642.6 455.9 L642.7 455.8 L644.7 453.9 L644.7 453.8 L646.7 451.9 L646.7 451.9 L648.7 450.0 L648.7 449.9 L650.7 448.0 L650.7 448.0 L652.7 446.1 L654.6 444.2 L656.6 442.3 L658.5 440.5 L660.4 438.6 L662.3 436.8 L664.1 434.9 L666.0 433.1 L667.9 431.2 L669.7 429.3 L671.6 427.4 L673.4 425.5 L675.3 423.7 L677.2 421.7 L679.1 419.8 L680.9 417.9 L682.8 416.0 L682.8 416.0 L684.7 414.1 L684.7 414.1 L686.6 412.2 L686.7 412.1 L688.6 410.2 L688.6 410.2 L690.5 408.3 L690.5 408.2 L692.4 406.3 L692.5 406.3 L694.4 404.4 L694.5 404.3 L696.4 402.4 L696.5 402.4 L698.4 400.5 L698.5 400.4 L700.4 398.5 L700.5 398.5 L702.5 396.6 L702.5 396.5 L704.5 394.6 L704.6 394.6 L706.6 392.7 L708.6 390.8 L710.5 389.0 L712.5 387.1 L714.4 385.3 L716.2 383.4 L718.1 381.6 L719.9 379.8 L721.6 378.0 L723.3 376.2 L724.9 374.5 L726.5 372.7 L728.0 370.9 L729.4 369.1 L730.8 367.4 L732.1 365.6 L733.3 363.9 L734.4 362.1 L735.5 360.3 L736.5 358.6 L737.5 356.7 L738.4 354.9 L739.2 353.0 L740.0 351.0 L740.8 349.1 L741.5 347.1 L742.1 345.1 L742.6 343.0 L743.2 340.9 L743.6 338.8 L744.0 336.7 L744.3 334.6 L744.6 332.4 L744.8 330.3 L745.0 328.1 L745.1 326.0 L745.1 323.8 L745.1 321.6 L745.0 319.5 L744.9 317.3 L744.7 315.2 L744.4 313.0 L744.1 310.9 L743.7 308.8 L743.2 306.7 L742.7 304.7 L742.2 302.7 L741.6 300.7 L740.9 298.7 L740.2 296.8 L739.4 294.9 L738.6 293.0 L737.7 291.2 L736.7 289.4 L735.7 287.7 L734.7 286.0 L733.6 284.4 L732.5 282.8 L731.3 281.3 L730.0 279.8 L728.7 278.3 L727.4 276.9 L726.0 275.6 L724.5 274.3 L723.0 273.0 L721.4 271.8 L719.8 270.6 L718.1 269.5 L716.4 268.5 L714.7 267.5 L712.9 266.5 L711.1 265.6 L709.2 264.8 L707.4 264.1 L705.5 263.4 L703.6 262.8 L701.7 262.3 L699.8 261.8 L697.8 261.4 L695.9 261.1 L694.0 260.9 L692.1 260.7 L690.2 260.6 L688.3 260.6 L686.4 260.7 L684.6 260.8 L682.7 261.1 L680.9 261.4 L679.1 261.7 L677.2 262.2 L675.3 262.8 L673.4 263.4 L671.5 264.1 L669.6 264.9 L667.7 265.8 L665.9 266.7 L664.0 267.7 L662.2 268.8 L660.4 269.9 L658.6 271.1 L656.9 272.4 L655.2 273.7 L653.5 275.0 L651.9 276.4 L650.4 277.9 L648.9 279.4 L647.5 280.9 L646.1 282.4 L644.8 283.9 L643.4 285.8 L642.6 286.8 L641.7 287.7 L640.7 288.6 L639.7 289.4 L638.6 290.2 L637.5 290.9 L636.3 291.5 L635.2 292.0 L633.9 292.5 L632.7 292.9 L631.4 293.2 L630.1 293.4 L628.8 293.5 L627.5 293.5 L626.2 293.5 L624.9 293.4 L623.6 293.2 L622.3 292.9 L621.1 292.5 L619.8 292.0 L618.7 291.5 L617.5 290.9 L616.4 290.2 L615.3 289.4 L614.3 288.6 L613.3 287.7 L612.4 286.8 L611.6 285.8 L610.2 283.9 L608.9 282.4 L607.5 280.9 L606.1 279.4 L604.6 277.9 L603.1 276.4 L601.5 275.0 L599.8 273.7 L598.1 272.4 L596.4 271.1 L594.6 269.9 L592.8 268.8 L591.0 267.7 L589.1 266.7 L587.3 265.8 L585.4 264.9 L583.5 264.1 L581.6 263.4 L579.7 262.8 L577.8 262.2 L575.9 261.7 L574.1 261.4 L572.3 261.1 L570.4 260.8 L568.6 260.7 L566.7 260.6 L564.8 260.6 L562.9 260.7 L561.0 260.9 L559.1 261.1 L557.2 261.4 L555.2 261.8 L553.3 262.3 L551.4 262.8 L549.5 263.4 L547.6 264.1 L545.8 264.8 L543.9 265.6 L542.1 266.5 L540.3 267.5 L538.6 268.5 L536.9 269.5 L535.2 270.6 L533.6 271.8 L532.0 273.0 L530.5 274.3 L529.0 275.6 L527.6 276.9 L526.3 278.3 L525.0 279.8 L523.7 281.3 L522.5 282.8 L521.4 284.4 L520.3 286.0 L519.3 287.7 L518.3 289.4 L517.3 291.2 L516.4 293.0 L515.6 294.9 L514.8 296.8 L514.1 298.7 L513.4 300.7 L512.8 302.7 L512.3 304.7 L511.8 306.7 L511.3 308.8 L510.9 310.9 L510.6 313.0 L510.3 315.2 L510.1 317.3 L510.0 319.5 L509.9 321.6 L509.9 323.8 L509.9 326.0 L510.0 328.1 L510.2 330.3 L510.4 332.4 L510.7 334.6 L511.0 336.7 L511.4 338.8 L511.8 340.9 L512.4 343.0 L512.9 345.1 L513.5 347.1 L514.2 349.1 L515.0 351.0 L515.8 353.0 L516.6 354.9 L517.5 356.7 L518.5 358.6 L519.5 360.3 L520.6 362.1 L521.7 363.9 L522.9 365.6 L524.2 367.4 L525.6 369.1 L527.0 370.9 L528.5 372.7 L530.1 374.5 L531.7 376.2 L533.4 378.0 L535.1 379.8 L536.9 381.6 L538.8 383.4 L540.6 385.3 L542.5 387.1 L544.5 389.0 L546.4 390.8 L548.4 392.7 L550.4 394.6 L550.5 394.6 L552.5 396.5 L552.5 396.6 L554.5 398.5 L554.6 398.5 L556.5 400.4 L556.6 400.5 L558.5 402.4 L558.6 402.4 L560.5 404.3 L560.6 404.4 L562.5 406.3 L562.6 406.3 L564.5 408.2 L564.5 408.3 L566.4 410.2 L566.4 410.2 L568.3 412.1 L568.4 412.2 L570.3 414.1 L570.3 414.1 L572.2 416.0 L572.2 416.0 L574.1 417.9 L575.9 419.8 L577.8 421.7 L579.7 423.7 L581.6 425.5 L583.4 427.4 L585.3 429.3 L587.1 431.2 L589.0 433.1 L590.9 434.9 L592.7 436.8 L594.6 438.6 L596.5 440.5 L598.4 442.3 L600.4 444.2 L602.3 446.1 L604.3 448.0 L604.3 448.0 L606.3 449.9 L606.3 450.0 L608.3 451.9 L608.3 451.9 L610.3 453.8 L610.3 453.9 L612.3 455.8 L612.4 455.9 L614.3 457.8 L614.4 457.9 L616.3 459.9 L616.4 460.0 L618.3 461.9 L618.4 462.0 L620.3 464.0 L620.5 464.2 L622.3 466.1 L622.5 466.3 L624.3 468.3 L624.5 468.5 L626.3 470.5 L626.5 470.7 L627.5 471.9Z" fill="none" stroke="#2e4fd6" stroke-width="1.6" stroke-dasharray="8 4" stroke-dashoffset="3" clip-path="url(#cb2)"/>
<path d="M627.5 458.4 L627.9 458.0 L628.1 457.8 L630.0 455.8 L630.2 455.6 L632.1 453.7 L632.3 453.5 L634.2 451.6 L634.3 451.4 L636.2 449.5 L636.4 449.4 L638.3 447.5 L638.4 447.4 L640.4 445.5 L640.4 445.4 L642.4 443.5 L642.4 443.4 L644.4 441.5 L644.4 441.5 L646.4 439.6 L648.4 437.7 L650.3 435.8 L652.2 434.0 L654.1 432.2 L655.9 430.3 L657.8 428.5 L659.6 426.7 L661.5 424.8 L663.3 423.0 L665.2 421.1 L667.0 419.2 L668.9 417.3 L670.7 415.4 L672.6 413.5 L674.5 411.6 L676.4 409.7 L676.4 409.6 L678.3 407.7 L678.3 407.7 L680.2 405.8 L680.2 405.8 L682.1 403.8 L682.2 403.8 L684.1 401.9 L684.2 401.8 L686.1 399.9 L686.1 399.9 L688.1 398.0 L688.1 397.9 L690.1 396.0 L690.2 395.9 L692.1 394.0 L692.2 393.9 L694.2 392.0 L694.3 391.9 L696.2 390.0 L696.3 390.0 L698.3 388.1 L698.4 388.0 L700.4 386.1 L702.3 384.3 L704.3 382.4 L706.2 380.6 L708.1 378.8 L709.9 377.0 L711.7 375.2 L713.4 373.5 L715.1 371.8 L716.6 370.1 L718.2 368.4 L719.6 366.8 L721.0 365.1 L722.3 363.5 L723.6 361.9 L724.7 360.4 L725.8 358.8 L726.8 357.3 L727.7 355.7 L728.6 354.2 L729.4 352.7 L730.2 351.1 L730.9 349.4 L731.6 347.7 L732.3 346.0 L732.9 344.3 L733.4 342.5 L733.9 340.7 L734.4 338.9 L734.8 337.0 L735.1 335.2 L735.4 333.3 L735.6 331.4 L735.8 329.5 L736.0 327.6 L736.0 325.7 L736.1 323.8 L736.1 321.9 L736.0 319.9 L735.9 318.0 L735.7 316.2 L735.4 314.3 L735.2 312.4 L734.8 310.6 L734.4 308.8 L734.0 307.0 L733.5 305.2 L733.0 303.5 L732.4 301.8 L731.8 300.1 L731.1 298.5 L730.4 296.9 L729.6 295.3 L728.8 293.8 L728.0 292.4 L727.1 290.9 L726.2 289.6 L725.2 288.2 L724.2 286.9 L723.2 285.7 L722.1 284.5 L721.0 283.4 L719.8 282.2 L718.6 281.1 L717.3 280.1 L716.0 279.0 L714.6 278.1 L713.2 277.1 L711.8 276.2 L710.3 275.4 L708.8 274.6 L707.3 273.9 L705.7 273.2 L704.2 272.5 L702.6 272.0 L701.0 271.5 L699.4 271.0 L697.8 270.6 L696.2 270.3 L694.6 270.1 L693.1 269.9 L691.5 269.7 L690.0 269.7 L688.5 269.7 L687.0 269.7 L685.5 269.8 L684.0 270.0 L682.6 270.2 L681.1 270.6 L679.5 270.9 L678.0 271.4 L676.4 271.9 L674.8 272.5 L673.3 273.2 L671.7 273.9 L670.1 274.7 L668.5 275.6 L666.9 276.5 L665.3 277.5 L663.8 278.5 L662.3 279.6 L660.8 280.8 L659.4 281.9 L658.0 283.2 L656.6 284.4 L655.3 285.7 L654.1 287.0 L653.0 288.3 L651.9 289.6 L650.5 291.3 L649.3 292.8 L648.0 294.1 L646.6 295.4 L645.2 296.6 L643.6 297.7 L642.0 298.7 L640.3 299.6 L638.6 300.4 L636.8 301.1 L635.0 301.6 L633.2 302.0 L631.3 302.3 L629.4 302.5 L627.5 302.6 L625.6 302.5 L623.7 302.3 L621.8 302.0 L620.0 301.6 L618.2 301.1 L616.4 300.4 L614.7 299.6 L613.0 298.7 L611.4 297.7 L609.8 296.6 L608.4 295.4 L607.0 294.1 L605.7 292.8 L604.5 291.3 L603.1 289.6 L602.0 288.3 L600.9 287.0 L599.7 285.7 L598.4 284.4 L597.0 283.2 L595.6 281.9 L594.2 280.8 L592.7 279.6 L591.2 278.5 L589.7 277.5 L588.1 276.5 L586.5 275.6 L584.9 274.7 L583.3 273.9 L581.7 273.2 L580.2 272.5 L578.6 271.9 L577.0 271.4 L575.5 270.9 L573.9 270.6 L572.4 270.2 L571.0 270.0 L569.5 269.8 L568.0 269.7 L566.5 269.7 L565.0 269.7 L563.5 269.7 L561.9 269.9 L560.4 270.1 L558.8 270.3 L557.2 270.6 L555.6 271.0 L554.0 271.5 L552.4 272.0 L550.8 272.5 L549.3 273.2 L547.7 273.9 L546.2 274.6 L544.7 275.4 L543.2 276.2 L541.8 277.1 L540.4 278.1 L539.0 279.0 L537.7 280.1 L536.4 281.1 L535.2 282.2 L534.0 283.4 L532.9 284.5 L531.8 285.7 L530.8 286.9 L529.8 288.2 L528.8 289.6 L527.9 290.9 L527.0 292.4 L526.2 293.8 L525.4 295.3 L524.6 296.9 L523.9 298.5 L523.2 300.1 L522.6 301.8 L522.0 303.5 L521.5 305.2 L521.0 307.0 L520.6 308.8 L520.2 310.6 L519.8 312.4 L519.6 314.3 L519.3 316.2 L519.1 318.0 L519.0 319.9 L518.9 321.9 L518.9 323.8 L519.0 325.7 L519.0 327.6 L519.2 329.5 L519.4 331.4 L519.6 333.3 L519.9 335.2 L520.2 337.0 L520.6 338.9 L521.1 340.7 L521.6 342.5 L522.1 344.3 L522.7 346.0 L523.4 347.7 L524.1 349.4 L524.8 351.1 L525.6 352.7 L526.4 354.2 L527.3 355.7 L528.2 357.3 L529.2 358.8 L530.3 360.4 L531.4 361.9 L532.7 363.5 L534.0 365.1 L535.4 366.8 L536.8 368.4 L538.4 370.1 L539.9 371.8 L541.6 373.5 L543.3 375.2 L545.1 377.0 L546.9 378.8 L548.8 380.6 L550.7 382.4 L552.7 384.3 L554.6 386.1 L556.6 388.0 L556.7 388.1 L558.7 390.0 L558.8 390.0 L560.7 391.9 L560.8 392.0 L562.8 393.9 L562.9 394.0 L564.8 395.9 L564.9 396.0 L566.9 397.9 L566.9 398.0 L568.9 399.9 L568.9 399.9 L570.8 401.8 L570.9 401.9 L572.8 403.8 L572.9 403.8 L574.8 405.8 L574.8 405.8 L576.7 407.7 L576.7 407.7 L578.6 409.6 L578.6 409.7 L580.5 411.6 L582.4 413.5 L584.3 415.4 L586.1 417.3 L588.0 419.2 L589.8 421.1 L591.7 423.0 L593.5 424.8 L595.4 426.7 L597.2 428.5 L599.1 430.3 L600.9 432.2 L602.8 434.0 L604.7 435.8 L606.6 437.7 L608.6 439.6 L610.6 441.5 L610.6 441.5 L612.6 443.4 L612.6 443.5 L614.6 445.4 L614.6 445.5 L616.6 447.4 L616.7 447.5 L618.6 449.4 L618.8 449.5 L620.7 451.4 L620.8 451.6 L622.7 453.5 L622.9 453.7 L624.8 455.6 L625.0 455.8 L626.9 457.8 L627.1 458.0 L627.5 458.4Z" fill="none" stroke="#2e4fd6" stroke-width="1.6" stroke-dasharray="9 3" stroke-dashoffset="4" clip-path="url(#cb1)"/>
<path d="M627.5 445.5 L627.8 445.2 L627.9 445.0 L629.9 443.1 L630.0 443.0 L632.0 441.0 L632.1 440.9 L634.0 439.0 L634.1 438.9 L636.1 437.0 L636.1 436.9 L638.1 435.0 L638.1 435.0 L640.1 433.1 L642.1 431.2 L644.0 429.3 L645.9 427.5 L647.7 425.7 L649.6 423.9 L651.4 422.1 L653.2 420.3 L655.0 418.4 L656.9 416.6 L658.7 414.7 L660.6 412.9 L662.4 411.0 L664.3 409.1 L666.2 407.2 L668.0 405.3 L669.9 403.3 L670.0 403.3 L671.8 401.4 L671.9 401.3 L673.8 399.4 L673.8 399.4 L675.7 397.5 L675.8 397.4 L677.7 395.5 L677.8 395.4 L679.7 393.5 L679.8 393.4 L681.7 391.5 L681.8 391.4 L683.7 389.5 L683.8 389.4 L685.8 387.5 L685.9 387.4 L687.9 385.5 L688.0 385.4 L690.0 383.5 L690.1 383.4 L692.1 381.5 L692.1 381.5 L694.1 379.6 L696.1 377.7 L698.1 375.8 L700.0 374.0 L701.8 372.3 L703.6 370.6 L705.3 368.9 L706.9 367.2 L708.5 365.6 L710.0 364.0 L711.4 362.4 L712.8 360.9 L714.0 359.4 L715.2 357.9 L716.3 356.5 L717.4 355.1 L718.3 353.8 L719.2 352.4 L719.9 351.2 L720.7 349.9 L721.3 348.6 L722.0 347.2 L722.6 345.8 L723.2 344.4 L723.8 343.0 L724.3 341.5 L724.7 340.0 L725.2 338.4 L725.5 336.9 L725.9 335.3 L726.2 333.7 L726.4 332.0 L726.7 330.4 L726.8 328.7 L726.9 327.1 L727.0 325.4 L727.0 323.8 L727.0 322.1 L727.0 320.4 L726.8 318.8 L726.7 317.1 L726.5 315.5 L726.2 313.9 L725.9 312.3 L725.6 310.8 L725.2 309.2 L724.8 307.7 L724.4 306.3 L723.9 304.8 L723.3 303.4 L722.8 302.0 L722.2 300.7 L721.6 299.4 L720.9 298.2 L720.2 297.0 L719.5 295.8 L718.7 294.7 L718.0 293.6 L717.2 292.6 L716.3 291.6 L715.5 290.7 L714.6 289.8 L713.7 288.9 L712.7 288.0 L711.7 287.1 L710.6 286.3 L709.5 285.5 L708.3 284.7 L707.2 284.0 L706.0 283.3 L704.7 282.7 L703.5 282.1 L702.2 281.5 L700.9 281.0 L699.7 280.5 L698.4 280.1 L697.1 279.8 L695.9 279.5 L694.6 279.2 L693.4 279.0 L692.1 278.9 L690.9 278.8 L689.7 278.7 L688.6 278.7 L687.5 278.7 L686.4 278.8 L685.3 279.0 L684.2 279.1 L683.1 279.4 L681.9 279.7 L680.7 280.0 L679.5 280.4 L678.2 280.9 L676.9 281.4 L675.6 282.1 L674.2 282.7 L672.9 283.4 L671.6 284.2 L670.3 285.1 L669.0 285.9 L667.7 286.9 L666.4 287.8 L665.2 288.8 L664.0 289.9 L662.9 290.9 L661.8 292.0 L660.8 293.1 L659.8 294.2 L658.9 295.3 L657.7 296.9 L656.1 298.8 L654.4 300.6 L652.6 302.3 L650.6 303.8 L648.6 305.3 L646.5 306.6 L644.3 307.7 L642.0 308.8 L639.7 309.6 L637.3 310.3 L634.9 310.9 L632.5 311.3 L630.0 311.5 L627.5 311.6 L625.0 311.5 L622.5 311.3 L620.1 310.9 L617.7 310.3 L615.3 309.6 L613.0 308.8 L610.7 307.7 L608.5 306.6 L606.4 305.3 L604.4 303.8 L602.4 302.3 L600.6 300.6 L598.9 298.8 L597.3 296.9 L596.1 295.3 L595.2 294.2 L594.2 293.1 L593.2 292.0 L592.1 290.9 L591.0 289.9 L589.8 288.8 L588.6 287.8 L587.3 286.9 L586.0 285.9 L584.7 285.1 L583.4 284.2 L582.1 283.4 L580.8 282.7 L579.4 282.1 L578.1 281.4 L576.8 280.9 L575.5 280.4 L574.3 280.0 L573.1 279.7 L571.9 279.4 L570.8 279.1 L569.7 279.0 L568.6 278.8 L567.5 278.7 L566.4 278.7 L565.3 278.7 L564.1 278.8 L562.9 278.9 L561.6 279.0 L560.4 279.2 L559.1 279.5 L557.9 279.8 L556.6 280.1 L555.3 280.5 L554.1 281.0 L552.8 281.5 L551.5 282.1 L550.3 282.7 L549.0 283.3 L547.8 284.0 L546.7 284.7 L545.5 285.5 L544.4 286.3 L543.3 287.1 L542.3 288.0 L541.3 288.9 L540.4 289.8 L539.5 290.7 L538.7 291.6 L537.8 292.6 L537.0 293.6 L536.3 294.7 L535.5 295.8 L534.8 297.0 L534.1 298.2 L533.4 299.4 L532.8 300.7 L532.2 302.0 L531.7 303.4 L531.1 304.8 L530.6 306.3 L530.2 307.7 L529.8 309.2 L529.4 310.8 L529.1 312.3 L528.8 313.9 L528.5 315.5 L528.3 317.1 L528.2 318.8 L528.0 320.4 L528.0 322.1 L528.0 323.8 L528.0 325.4 L528.1 327.1 L528.2 328.7 L528.3 330.4 L528.6 332.0 L528.8 333.7 L529.1 335.3 L529.5 336.9 L529.8 338.4 L530.3 340.0 L530.7 341.5 L531.2 343.0 L531.8 344.4 L532.4 345.8 L533.0 347.2 L533.7 348.6 L534.3 349.9 L535.1 351.2 L535.8 352.4 L536.7 353.8 L537.6 355.1 L538.7 356.5 L539.8 357.9 L541.0 359.4 L542.2 360.9 L543.6 362.4 L545.0 364.0 L546.5 365.6 L548.1 367.2 L549.7 368.9 L551.4 370.6 L553.2 372.3 L555.0 374.0 L556.9 375.8 L558.9 377.7 L560.8 379.6 L562.9 381.5 L562.9 381.5 L564.9 383.4 L565.0 383.5 L567.0 385.4 L567.1 385.5 L569.1 387.4 L569.2 387.5 L571.2 389.4 L571.3 389.5 L573.2 391.4 L573.3 391.5 L575.2 393.4 L575.3 393.5 L577.2 395.4 L577.3 395.5 L579.2 397.4 L579.3 397.5 L581.2 399.4 L581.2 399.4 L583.1 401.3 L583.2 401.4 L585.0 403.3 L585.1 403.3 L586.9 405.2 L588.8 407.2 L590.7 409.1 L592.6 411.0 L594.4 412.9 L596.3 414.7 L598.1 416.6 L600.0 418.4 L601.8 420.3 L603.6 422.1 L605.4 423.9 L607.3 425.7 L609.1 427.5 L611.0 429.3 L612.9 431.2 L614.9 433.1 L616.9 435.0 L616.9 435.0 L618.9 436.9 L618.9 437.0 L620.9 438.9 L621.0 439.0 L622.9 440.9 L623.0 441.0 L625.0 443.0 L625.1 443.1 L627.1 445.0 L627.2 445.2 L627.5 445.5Z" fill="none" stroke="#2e4fd6" stroke-width="1.6" stroke-dasharray="9 3" stroke-dashoffset="6" clip-path="url(#cb1)"/>
<path d="M627.5 445.5 L627.8 445.2 L627.9 445.0 L629.9 443.1 L630.0 443.0 L632.0 441.0 L632.1 440.9 L634.0 439.0 L634.1 438.9 L636.1 437.0 L636.1 436.9 L638.1 435.0 L638.1 435.0 L640.1 433.1 L642.1 431.2 L644.0 429.3 L645.9 427.5 L647.7 425.7 L649.6 423.9 L651.4 422.1 L653.2 420.3 L655.0 418.4 L656.9 416.6 L658.7 414.7 L660.6 412.9 L662.4 411.0 L664.3 409.1 L666.2 407.2 L668.0 405.3 L669.9 403.3 L670.0 403.3 L671.8 401.4 L671.9 401.3 L673.8 399.4 L673.8 399.4 L675.7 397.5 L675.8 397.4 L677.7 395.5 L677.8 395.4 L679.7 393.5 L679.8 393.4 L681.7 391.5 L681.8 391.4 L683.7 389.5 L683.8 389.4 L685.8 387.5 L685.9 387.4 L687.9 385.5 L688.0 385.4 L690.0 383.5 L690.1 383.4 L692.1 381.5 L692.1 381.5 L694.1 379.6 L696.1 377.7 L698.1 375.8 L700.0 374.0 L701.8 372.3 L703.6 370.6 L705.3 368.9 L706.9 367.2 L708.5 365.6 L710.0 364.0 L711.4 362.4 L712.8 360.9 L714.0 359.4 L715.2 357.9 L716.3 356.5 L717.4 355.1 L718.3 353.8 L719.2 352.4 L719.9 351.2 L720.7 349.9 L721.3 348.6 L722.0 347.2 L722.6 345.8 L723.2 344.4 L723.8 343.0 L724.3 341.5 L724.7 340.0 L725.2 338.4 L725.5 336.9 L725.9 335.3 L726.2 333.7 L726.4 332.0 L726.7 330.4 L726.8 328.7 L726.9 327.1 L727.0 325.4 L727.0 323.8 L727.0 322.1 L727.0 320.4 L726.8 318.8 L726.7 317.1 L726.5 315.5 L726.2 313.9 L725.9 312.3 L725.6 310.8 L725.2 309.2 L724.8 307.7 L724.4 306.3 L723.9 304.8 L723.3 303.4 L722.8 302.0 L722.2 300.7 L721.6 299.4 L720.9 298.2 L720.2 297.0 L719.5 295.8 L718.7 294.7 L718.0 293.6 L717.2 292.6 L716.3 291.6 L715.5 290.7 L714.6 289.8 L713.7 288.9 L712.7 288.0 L711.7 287.1 L710.6 286.3 L709.5 285.5 L708.3 284.7 L707.2 284.0 L706.0 283.3 L704.7 282.7 L703.5 282.1 L702.2 281.5 L700.9 281.0 L699.7 280.5 L698.4 280.1 L697.1 279.8 L695.9 279.5 L694.6 279.2 L693.4 279.0 L692.1 278.9 L690.9 278.8 L689.7 278.7 L688.6 278.7 L687.5 278.7 L686.4 278.8 L685.3 279.0 L684.2 279.1 L683.1 279.4 L681.9 279.7 L680.7 280.0 L679.5 280.4 L678.2 280.9 L676.9 281.4 L675.6 282.1 L674.2 282.7 L672.9 283.4 L671.6 284.2 L670.3 285.1 L669.0 285.9 L667.7 286.9 L666.4 287.8 L665.2 288.8 L664.0 289.9 L662.9 290.9 L661.8 292.0 L660.8 293.1 L659.8 294.2 L658.9 295.3 L657.7 296.9 L656.1 298.8 L654.4 300.6 L652.6 302.3 L650.6 303.8 L648.6 305.3 L646.5 306.6 L644.3 307.7 L642.0 308.8 L639.7 309.6 L637.3 310.3 L634.9 310.9 L632.5 311.3 L630.0 311.5 L627.5 311.6 L625.0 311.5 L622.5 311.3 L620.1 310.9 L617.7 310.3 L615.3 309.6 L613.0 308.8 L610.7 307.7 L608.5 306.6 L606.4 305.3 L604.4 303.8 L602.4 302.3 L600.6 300.6 L598.9 298.8 L597.3 296.9 L596.1 295.3 L595.2 294.2 L594.2 293.1 L593.2 292.0 L592.1 290.9 L591.0 289.9 L589.8 288.8 L588.6 287.8 L587.3 286.9 L586.0 285.9 L584.7 285.1 L583.4 284.2 L582.1 283.4 L580.8 282.7 L579.4 282.1 L578.1 281.4 L576.8 280.9 L575.5 280.4 L574.3 280.0 L573.1 279.7 L571.9 279.4 L570.8 279.1 L569.7 279.0 L568.6 278.8 L567.5 278.7 L566.4 278.7 L565.3 278.7 L564.1 278.8 L562.9 278.9 L561.6 279.0 L560.4 279.2 L559.1 279.5 L557.9 279.8 L556.6 280.1 L555.3 280.5 L554.1 281.0 L552.8 281.5 L551.5 282.1 L550.3 282.7 L549.0 283.3 L547.8 284.0 L546.7 284.7 L545.5 285.5 L544.4 286.3 L543.3 287.1 L542.3 288.0 L541.3 288.9 L540.4 289.8 L539.5 290.7 L538.7 291.6 L537.8 292.6 L537.0 293.6 L536.3 294.7 L535.5 295.8 L534.8 297.0 L534.1 298.2 L533.4 299.4 L532.8 300.7 L532.2 302.0 L531.7 303.4 L531.1 304.8 L530.6 306.3 L530.2 307.7 L529.8 309.2 L529.4 310.8 L529.1 312.3 L528.8 313.9 L528.5 315.5 L528.3 317.1 L528.2 318.8 L528.0 320.4 L528.0 322.1 L528.0 323.8 L528.0 325.4 L528.1 327.1 L528.2 328.7 L528.3 330.4 L528.6 332.0 L528.8 333.7 L529.1 335.3 L529.5 336.9 L529.8 338.4 L530.3 340.0 L530.7 341.5 L531.2 343.0 L531.8 344.4 L532.4 345.8 L533.0 347.2 L533.7 348.6 L534.3 349.9 L535.1 351.2 L535.8 352.4 L536.7 353.8 L537.6 355.1 L538.7 356.5 L539.8 357.9 L541.0 359.4 L542.2 360.9 L543.6 362.4 L545.0 364.0 L546.5 365.6 L548.1 367.2 L549.7 368.9 L551.4 370.6 L553.2 372.3 L555.0 374.0 L556.9 375.8 L558.9 377.7 L560.8 379.6 L562.9 381.5 L562.9 381.5 L564.9 383.4 L565.0 383.5 L567.0 385.4 L567.1 385.5 L569.1 387.4 L569.2 387.5 L571.2 389.4 L571.3 389.5 L573.2 391.4 L573.3 391.5 L575.2 393.4 L575.3 393.5 L577.2 395.4 L577.3 395.5 L579.2 397.4 L579.3 397.5 L581.2 399.4 L581.2 399.4 L583.1 401.3 L583.2 401.4 L585.0 403.3 L585.1 403.3 L586.9 405.2 L588.8 407.2 L590.7 409.1 L592.6 411.0 L594.4 412.9 L596.3 414.7 L598.1 416.6 L600.0 418.4 L601.8 420.3 L603.6 422.1 L605.4 423.9 L607.3 425.7 L609.1 427.5 L611.0 429.3 L612.9 431.2 L614.9 433.1 L616.9 435.0 L616.9 435.0 L618.9 436.9 L618.9 437.0 L620.9 438.9 L621.0 439.0 L622.9 440.9 L623.0 441.0 L625.0 443.0 L625.1 443.1 L627.1 445.0 L627.2 445.2 L627.5 445.5Z" fill="none" stroke="#2e4fd6" stroke-width="1.6" stroke-dasharray="8 4" stroke-dashoffset="9" clip-path="url(#cb2)"/>
<path d="M627.5 432.7 L627.7 432.5 L627.8 432.4 L629.8 430.5 L629.9 430.4 L631.8 428.5 L631.9 428.5 L633.8 426.6 L635.8 424.7 L637.7 422.8 L639.6 421.0 L641.4 419.2 L643.2 417.5 L645.0 415.7 L646.8 413.9 L648.6 412.1 L650.5 410.2 L652.3 408.4 L654.1 406.5 L656.0 404.6 L657.8 402.7 L659.7 400.8 L661.6 398.9 L663.5 397.0 L663.5 396.9 L665.4 395.0 L665.5 395.0 L667.4 393.1 L667.4 393.0 L669.3 391.1 L669.4 391.0 L671.3 389.1 L671.4 389.0 L673.3 387.1 L673.4 387.0 L675.3 385.1 L675.5 385.0 L677.4 383.1 L677.5 382.9 L679.5 381.0 L679.6 380.9 L681.6 379.0 L681.8 378.8 L683.8 377.0 L683.9 376.8 L685.9 374.9 L685.9 374.9 L687.9 373.0 L689.9 371.1 L691.9 369.3 L693.7 367.5 L695.5 365.8 L697.2 364.1 L698.9 362.5 L700.5 360.9 L702.0 359.3 L703.4 357.8 L704.7 356.4 L705.9 355.0 L707.1 353.6 L708.2 352.3 L709.1 351.0 L710.0 349.8 L710.8 348.7 L711.5 347.6 L712.1 346.6 L712.7 345.5 L713.3 344.5 L713.8 343.4 L714.3 342.3 L714.8 341.1 L715.2 339.9 L715.7 338.7 L716.1 337.4 L716.4 336.1 L716.7 334.8 L717.0 333.5 L717.3 332.1 L717.5 330.8 L717.7 329.4 L717.8 328.0 L717.9 326.6 L718.0 325.1 L718.0 323.7 L718.0 322.3 L717.9 320.9 L717.8 319.5 L717.7 318.1 L717.5 316.8 L717.3 315.4 L717.1 314.1 L716.8 312.8 L716.5 311.5 L716.1 310.3 L715.8 309.1 L715.4 307.9 L714.9 306.7 L714.5 305.6 L714.0 304.6 L713.5 303.5 L713.0 302.6 L712.4 301.6 L711.9 300.7 L711.3 299.9 L710.7 299.0 L710.1 298.3 L709.5 297.5 L708.9 296.8 L708.2 296.2 L707.5 295.5 L706.8 294.8 L706.0 294.2 L705.2 293.5 L704.3 292.9 L703.4 292.3 L702.5 291.8 L701.6 291.2 L700.7 290.7 L699.7 290.3 L698.7 289.8 L697.7 289.5 L696.8 289.1 L695.8 288.8 L694.8 288.5 L693.9 288.3 L693.0 288.1 L692.1 288.0 L691.2 287.9 L690.3 287.8 L689.5 287.7 L688.7 287.7 L688.0 287.8 L687.3 287.8 L686.6 287.9 L685.9 288.0 L685.1 288.2 L684.3 288.4 L683.4 288.6 L682.5 288.9 L681.5 289.3 L680.5 289.7 L679.5 290.2 L678.4 290.7 L677.4 291.3 L676.3 291.9 L675.2 292.6 L674.2 293.3 L673.1 294.1 L672.1 294.9 L671.1 295.7 L670.1 296.6 L669.2 297.4 L668.3 298.3 L667.5 299.2 L666.7 300.1 L666.0 300.9 L664.8 302.4 L662.8 304.8 L660.7 307.0 L658.5 309.1 L656.1 311.0 L653.6 312.8 L651.0 314.4 L648.3 315.9 L645.5 317.1 L642.6 318.2 L639.6 319.1 L636.7 319.8 L633.6 320.3 L630.6 320.6 L627.5 320.7 L624.4 320.6 L621.4 320.3 L618.3 319.8 L615.4 319.1 L612.4 318.2 L609.5 317.1 L606.7 315.9 L604.0 314.4 L601.4 312.8 L598.9 311.0 L596.5 309.1 L594.3 307.0 L592.2 304.8 L590.2 302.4 L589.0 300.9 L588.3 300.1 L587.5 299.2 L586.7 298.3 L585.8 297.4 L584.9 296.6 L583.9 295.7 L582.9 294.9 L581.9 294.1 L580.8 293.3 L579.8 292.6 L578.7 291.9 L577.6 291.3 L576.6 290.7 L575.5 290.2 L574.5 289.7 L573.5 289.3 L572.5 288.9 L571.6 288.6 L570.7 288.4 L569.9 288.2 L569.1 288.0 L568.4 287.9 L567.7 287.8 L567.0 287.8 L566.3 287.7 L565.5 287.7 L564.7 287.8 L563.8 287.9 L562.9 288.0 L562.0 288.1 L561.1 288.3 L560.2 288.5 L559.2 288.8 L558.2 289.1 L557.3 289.5 L556.3 289.8 L555.3 290.3 L554.3 290.7 L553.4 291.2 L552.5 291.8 L551.6 292.3 L550.7 292.9 L549.8 293.5 L549.0 294.2 L548.2 294.8 L547.5 295.5 L546.8 296.2 L546.1 296.8 L545.5 297.5 L544.9 298.3 L544.3 299.0 L543.7 299.9 L543.1 300.7 L542.6 301.6 L542.0 302.6 L541.5 303.5 L541.0 304.6 L540.5 305.6 L540.1 306.7 L539.6 307.9 L539.2 309.1 L538.9 310.3 L538.5 311.5 L538.2 312.8 L537.9 314.1 L537.7 315.4 L537.5 316.8 L537.3 318.1 L537.2 319.5 L537.1 320.9 L537.0 322.3 L537.0 323.7 L537.0 325.1 L537.1 326.6 L537.2 328.0 L537.3 329.4 L537.5 330.8 L537.7 332.1 L538.0 333.5 L538.3 334.8 L538.6 336.1 L538.9 337.4 L539.3 338.7 L539.8 339.9 L540.2 341.1 L540.7 342.3 L541.2 343.4 L541.7 344.5 L542.3 345.5 L542.9 346.6 L543.5 347.6 L544.2 348.7 L545.0 349.8 L545.9 351.0 L546.8 352.3 L547.9 353.6 L549.1 355.0 L550.3 356.4 L551.6 357.8 L553.0 359.3 L554.5 360.9 L556.1 362.5 L557.8 364.1 L559.5 365.8 L561.3 367.5 L563.1 369.3 L565.1 371.1 L567.1 373.0 L569.1 374.9 L569.1 374.9 L571.1 376.8 L571.2 377.0 L573.2 378.8 L573.4 379.0 L575.4 380.9 L575.5 381.0 L577.5 382.9 L577.6 383.1 L579.5 385.0 L579.7 385.1 L581.6 387.0 L581.7 387.1 L583.6 389.0 L583.7 389.1 L585.6 391.0 L585.7 391.1 L587.6 393.0 L587.6 393.1 L589.5 395.0 L589.6 395.0 L591.5 396.9 L591.5 397.0 L593.4 398.9 L595.3 400.8 L597.2 402.7 L599.0 404.6 L600.9 406.5 L602.7 408.4 L604.5 410.2 L606.4 412.1 L608.2 413.9 L610.0 415.7 L611.8 417.5 L613.6 419.2 L615.4 421.0 L617.3 422.8 L619.2 424.7 L621.2 426.6 L623.1 428.5 L623.2 428.5 L625.1 430.4 L625.2 430.5 L627.2 432.4 L627.3 432.5 L627.5 432.7Z" fill="none" stroke="#2e4fd6" stroke-width="1.6" stroke-dasharray="9 3" stroke-dashoffset="8" clip-path="url(#cb1)"/>
<path d="M627.5 420.1 L627.5 420.1 L629.5 418.2 L631.4 416.4 L633.3 414.5 L635.1 412.8 L636.9 411.0 L638.7 409.3 L640.4 407.5 L642.2 405.7 L644.0 403.9 L645.9 402.0 L647.7 400.2 L649.5 398.3 L651.4 396.4 L653.3 394.5 L655.1 392.6 L657.0 390.6 L657.1 390.6 L659.0 388.7 L659.0 388.6 L660.9 386.7 L661.0 386.6 L662.9 384.7 L663.0 384.6 L664.9 382.7 L665.0 382.6 L666.9 380.7 L667.1 380.6 L669.0 378.7 L669.1 378.5 L671.1 376.6 L671.2 376.5 L673.2 374.6 L673.4 374.4 L675.3 372.5 L675.5 372.3 L677.5 370.4 L677.7 370.3 L679.6 368.4 L679.7 368.3 L681.7 366.4 L683.7 364.5 L685.6 362.7 L687.5 361.0 L689.2 359.3 L690.9 357.7 L692.5 356.1 L694.0 354.6 L695.4 353.1 L696.7 351.7 L698.0 350.3 L699.1 349.1 L700.1 347.8 L701.1 346.7 L701.9 345.6 L702.7 344.6 L703.3 343.6 L703.9 342.8 L704.4 342.0 L704.8 341.2 L705.2 340.4 L705.6 339.6 L706.0 338.7 L706.4 337.8 L706.7 336.9 L707.1 335.9 L707.4 334.9 L707.7 333.8 L707.9 332.8 L708.2 331.7 L708.4 330.6 L708.5 329.5 L708.7 328.3 L708.8 327.2 L708.9 326.0 L708.9 324.9 L709.0 323.7 L708.9 322.6 L708.9 321.4 L708.8 320.3 L708.7 319.1 L708.6 318.0 L708.4 316.9 L708.2 315.9 L708.0 314.8 L707.7 313.8 L707.5 312.8 L707.2 311.8 L706.9 310.9 L706.5 310.0 L706.2 309.2 L705.8 308.4 L705.4 307.6 L705.1 306.9 L704.7 306.2 L704.3 305.6 L703.9 305.0 L703.5 304.5 L703.1 303.9 L702.7 303.5 L702.3 303.0 L701.8 302.6 L701.4 302.1 L700.9 301.7 L700.3 301.2 L699.8 300.8 L699.2 300.4 L698.6 299.9 L697.9 299.5 L697.3 299.2 L696.6 298.8 L695.9 298.5 L695.2 298.2 L694.5 297.9 L693.9 297.7 L693.2 297.5 L692.6 297.3 L691.9 297.1 L691.3 297.0 L690.8 296.9 L690.2 296.8 L689.7 296.8 L689.3 296.8 L688.9 296.8 L688.5 296.8 L688.1 296.8 L687.8 296.9 L687.5 296.9 L687.1 297.0 L686.6 297.1 L686.1 297.3 L685.5 297.5 L684.8 297.7 L684.1 298.0 L683.4 298.4 L682.6 298.7 L681.8 299.2 L681.0 299.7 L680.2 300.2 L679.3 300.7 L678.5 301.3 L677.7 302.0 L676.9 302.6 L676.2 303.3 L675.4 303.9 L674.8 304.6 L674.1 305.3 L673.5 306.0 L673.0 306.6 L671.9 308.0 L669.6 310.8 L667.1 313.4 L664.4 315.9 L661.6 318.2 L658.6 320.3 L655.5 322.3 L652.2 324.0 L648.9 325.5 L645.5 326.8 L642.0 327.8 L638.4 328.6 L634.8 329.2 L631.2 329.6 L627.5 329.7 L623.8 329.6 L620.2 329.2 L616.6 328.6 L613.0 327.8 L609.5 326.8 L606.1 325.5 L602.8 324.0 L599.5 322.3 L596.4 320.3 L593.4 318.2 L590.6 315.9 L587.9 313.4 L585.4 310.8 L583.1 308.0 L582.0 306.6 L581.5 306.0 L580.9 305.3 L580.2 304.6 L579.6 303.9 L578.8 303.3 L578.1 302.6 L577.3 302.0 L576.5 301.3 L575.7 300.7 L574.8 300.2 L574.0 299.7 L573.2 299.2 L572.4 298.7 L571.6 298.4 L570.9 298.0 L570.2 297.7 L569.5 297.5 L568.9 297.3 L568.4 297.1 L567.9 297.0 L567.5 296.9 L567.2 296.9 L566.9 296.8 L566.5 296.8 L566.1 296.8 L565.7 296.8 L565.3 296.8 L564.8 296.8 L564.2 296.9 L563.7 297.0 L563.1 297.1 L562.4 297.3 L561.8 297.5 L561.1 297.7 L560.5 297.9 L559.8 298.2 L559.1 298.5 L558.4 298.8 L557.7 299.2 L557.1 299.5 L556.4 299.9 L555.8 300.4 L555.2 300.8 L554.7 301.2 L554.1 301.7 L553.6 302.1 L553.2 302.6 L552.7 303.0 L552.3 303.5 L551.9 303.9 L551.5 304.5 L551.1 305.0 L550.7 305.6 L550.3 306.2 L549.9 306.9 L549.6 307.6 L549.2 308.4 L548.8 309.2 L548.5 310.0 L548.1 310.9 L547.8 311.8 L547.5 312.8 L547.3 313.8 L547.0 314.8 L546.8 315.9 L546.6 316.9 L546.4 318.0 L546.3 319.1 L546.2 320.3 L546.1 321.4 L546.1 322.6 L546.0 323.7 L546.1 324.9 L546.1 326.0 L546.2 327.2 L546.3 328.3 L546.5 329.5 L546.6 330.6 L546.8 331.7 L547.1 332.8 L547.3 333.8 L547.6 334.9 L547.9 335.9 L548.3 336.9 L548.6 337.8 L549.0 338.7 L549.4 339.6 L549.8 340.4 L550.2 341.2 L550.6 342.0 L551.1 342.8 L551.7 343.6 L552.3 344.6 L553.1 345.6 L553.9 346.7 L554.9 347.8 L555.9 349.1 L557.0 350.3 L558.3 351.7 L559.6 353.1 L561.0 354.6 L562.5 356.1 L564.1 357.7 L565.8 359.3 L567.5 361.0 L569.4 362.7 L571.3 364.5 L573.3 366.4 L575.3 368.3 L575.4 368.4 L577.3 370.3 L577.5 370.4 L579.5 372.3 L579.7 372.5 L581.6 374.4 L581.8 374.6 L583.8 376.5 L583.9 376.6 L585.9 378.5 L586.0 378.7 L587.9 380.6 L588.1 380.7 L590.0 382.6 L590.1 382.7 L592.0 384.6 L592.1 384.7 L594.0 386.6 L594.1 386.7 L596.0 388.6 L596.0 388.7 L597.9 390.6 L598.0 390.6 L599.8 392.6 L601.7 394.5 L603.6 396.4 L605.5 398.3 L607.3 400.2 L609.1 402.0 L611.0 403.9 L612.8 405.7 L614.6 407.5 L616.3 409.3 L618.1 411.0 L619.9 412.8 L621.7 414.5 L623.6 416.4 L625.5 418.2 L627.4 420.1 L627.5 420.1Z" fill="none" stroke="#2e4fd6" stroke-width="1.6" stroke-dasharray="9 3" stroke-dashoffset="10" clip-path="url(#cb1)"/>
<path d="M627.5 420.1 L627.5 420.1 L629.5 418.2 L631.4 416.4 L633.3 414.5 L635.1 412.8 L636.9 411.0 L638.7 409.3 L640.4 407.5 L642.2 405.7 L644.0 403.9 L645.9 402.0 L647.7 400.2 L649.5 398.3 L651.4 396.4 L653.3 394.5 L655.1 392.6 L657.0 390.6 L657.1 390.6 L659.0 388.7 L659.0 388.6 L660.9 386.7 L661.0 386.6 L662.9 384.7 L663.0 384.6 L664.9 382.7 L665.0 382.6 L666.9 380.7 L667.1 380.6 L669.0 378.7 L669.1 378.5 L671.1 376.6 L671.2 376.5 L673.2 374.6 L673.4 374.4 L675.3 372.5 L675.5 372.3 L677.5 370.4 L677.7 370.3 L679.6 368.4 L679.7 368.3 L681.7 366.4 L683.7 364.5 L685.6 362.7 L687.5 361.0 L689.2 359.3 L690.9 357.7 L692.5 356.1 L694.0 354.6 L695.4 353.1 L696.7 351.7 L698.0 350.3 L699.1 349.1 L700.1 347.8 L701.1 346.7 L701.9 345.6 L702.7 344.6 L703.3 343.6 L703.9 342.8 L704.4 342.0 L704.8 341.2 L705.2 340.4 L705.6 339.6 L706.0 338.7 L706.4 337.8 L706.7 336.9 L707.1 335.9 L707.4 334.9 L707.7 333.8 L707.9 332.8 L708.2 331.7 L708.4 330.6 L708.5 329.5 L708.7 328.3 L708.8 327.2 L708.9 326.0 L708.9 324.9 L709.0 323.7 L708.9 322.6 L708.9 321.4 L708.8 320.3 L708.7 319.1 L708.6 318.0 L708.4 316.9 L708.2 315.9 L708.0 314.8 L707.7 313.8 L707.5 312.8 L707.2 311.8 L706.9 310.9 L706.5 310.0 L706.2 309.2 L705.8 308.4 L705.4 307.6 L705.1 306.9 L704.7 306.2 L704.3 305.6 L703.9 305.0 L703.5 304.5 L703.1 303.9 L702.7 303.5 L702.3 303.0 L701.8 302.6 L701.4 302.1 L700.9 301.7 L700.3 301.2 L699.8 300.8 L699.2 300.4 L698.6 299.9 L697.9 299.5 L697.3 299.2 L696.6 298.8 L695.9 298.5 L695.2 298.2 L694.5 297.9 L693.9 297.7 L693.2 297.5 L692.6 297.3 L691.9 297.1 L691.3 297.0 L690.8 296.9 L690.2 296.8 L689.7 296.8 L689.3 296.8 L688.9 296.8 L688.5 296.8 L688.1 296.8 L687.8 296.9 L687.5 296.9 L687.1 297.0 L686.6 297.1 L686.1 297.3 L685.5 297.5 L684.8 297.7 L684.1 298.0 L683.4 298.4 L682.6 298.7 L681.8 299.2 L681.0 299.7 L680.2 300.2 L679.3 300.7 L678.5 301.3 L677.7 302.0 L676.9 302.6 L676.2 303.3 L675.4 303.9 L674.8 304.6 L674.1 305.3 L673.5 306.0 L673.0 306.6 L671.9 308.0 L669.6 310.8 L667.1 313.4 L664.4 315.9 L661.6 318.2 L658.6 320.3 L655.5 322.3 L652.2 324.0 L648.9 325.5 L645.5 326.8 L642.0 327.8 L638.4 328.6 L634.8 329.2 L631.2 329.6 L627.5 329.7 L623.8 329.6 L620.2 329.2 L616.6 328.6 L613.0 327.8 L609.5 326.8 L606.1 325.5 L602.8 324.0 L599.5 322.3 L596.4 320.3 L593.4 318.2 L590.6 315.9 L587.9 313.4 L585.4 310.8 L583.1 308.0 L582.0 306.6 L581.5 306.0 L580.9 305.3 L580.2 304.6 L579.6 303.9 L578.8 303.3 L578.1 302.6 L577.3 302.0 L576.5 301.3 L575.7 300.7 L574.8 300.2 L574.0 299.7 L573.2 299.2 L572.4 298.7 L571.6 298.4 L570.9 298.0 L570.2 297.7 L569.5 297.5 L568.9 297.3 L568.4 297.1 L567.9 297.0 L567.5 296.9 L567.2 296.9 L566.9 296.8 L566.5 296.8 L566.1 296.8 L565.7 296.8 L565.3 296.8 L564.8 296.8 L564.2 296.9 L563.7 297.0 L563.1 297.1 L562.4 297.3 L561.8 297.5 L561.1 297.7 L560.5 297.9 L559.8 298.2 L559.1 298.5 L558.4 298.8 L557.7 299.2 L557.1 299.5 L556.4 299.9 L555.8 300.4 L555.2 300.8 L554.7 301.2 L554.1 301.7 L553.6 302.1 L553.2 302.6 L552.7 303.0 L552.3 303.5 L551.9 303.9 L551.5 304.5 L551.1 305.0 L550.7 305.6 L550.3 306.2 L549.9 306.9 L549.6 307.6 L549.2 308.4 L548.8 309.2 L548.5 310.0 L548.1 310.9 L547.8 311.8 L547.5 312.8 L547.3 313.8 L547.0 314.8 L546.8 315.9 L546.6 316.9 L546.4 318.0 L546.3 319.1 L546.2 320.3 L546.1 321.4 L546.1 322.6 L546.0 323.7 L546.1 324.9 L546.1 326.0 L546.2 327.2 L546.3 328.3 L546.5 329.5 L546.6 330.6 L546.8 331.7 L547.1 332.8 L547.3 333.8 L547.6 334.9 L547.9 335.9 L548.3 336.9 L548.6 337.8 L549.0 338.7 L549.4 339.6 L549.8 340.4 L550.2 341.2 L550.6 342.0 L551.1 342.8 L551.7 343.6 L552.3 344.6 L553.1 345.6 L553.9 346.7 L554.9 347.8 L555.9 349.1 L557.0 350.3 L558.3 351.7 L559.6 353.1 L561.0 354.6 L562.5 356.1 L564.1 357.7 L565.8 359.3 L567.5 361.0 L569.4 362.7 L571.3 364.5 L573.3 366.4 L575.3 368.3 L575.4 368.4 L577.3 370.3 L577.5 370.4 L579.5 372.3 L579.7 372.5 L581.6 374.4 L581.8 374.6 L583.8 376.5 L583.9 376.6 L585.9 378.5 L586.0 378.7 L587.9 380.6 L588.1 380.7 L590.0 382.6 L590.1 382.7 L592.0 384.6 L592.1 384.7 L594.0 386.6 L594.1 386.7 L596.0 388.6 L596.0 388.7 L597.9 390.6 L598.0 390.6 L599.8 392.6 L601.7 394.5 L603.6 396.4 L605.5 398.3 L607.3 400.2 L609.1 402.0 L611.0 403.9 L612.8 405.7 L614.6 407.5 L616.3 409.3 L618.1 411.0 L619.9 412.8 L621.7 414.5 L623.6 416.4 L625.5 418.2 L627.4 420.1 L627.5 420.1Z" fill="none" stroke="#2e4fd6" stroke-width="1.6" stroke-dasharray="8 4" stroke-dashoffset="15" clip-path="url(#cb2)"/>
<path d="M565.9 305.8 L565.8 305.8 L565.7 305.8 L565.5 305.9 L565.3 305.9 L565.0 306.0 L564.7 306.0 L564.4 306.1 L564.0 306.2 L563.7 306.4 L563.3 306.5 L562.9 306.7 L562.5 306.9 L562.1 307.1 L561.7 307.3 L561.3 307.5 L561.0 307.8 L560.6 308.0 L560.3 308.3 L560.0 308.5 L559.8 308.7 L559.5 309.0 L559.3 309.2 L559.2 309.4 L559.0 309.6 L558.8 309.9 L558.5 310.2 L558.3 310.5 L558.1 310.9 L557.9 311.3 L557.6 311.7 L557.4 312.2 L557.1 312.8 L556.9 313.4 L556.7 314.0 L556.4 314.6 L556.2 315.3 L556.0 316.1 L555.8 316.8 L555.7 317.6 L555.5 318.4 L555.4 319.3 L555.3 320.1 L555.2 321.0 L555.1 321.9 L555.1 322.8 L555.1 323.7 L555.1 324.6 L555.1 325.5 L555.2 326.4 L555.3 327.3 L555.4 328.2 L555.5 329.1 L555.7 329.9 L555.9 330.7 L556.1 331.6 L556.3 332.3 L556.5 333.1 L556.8 333.8 L557.0 334.5 L557.3 335.1 L557.6 335.8 L557.9 336.3 L558.1 336.9 L558.4 337.4 L558.8 337.9 L559.2 338.6 L559.7 339.3 L560.3 340.1 L561.0 341.1 L561.8 342.1 L562.7 343.1 L563.8 344.3 L564.9 345.5 L566.1 346.9 L567.5 348.2 L568.9 349.7 L570.4 351.2 L572.1 352.8 L573.8 354.5 L575.6 356.2 L577.5 358.0 L579.5 359.8 L581.5 361.7 L581.6 361.8 L583.6 363.7 L583.7 363.9 L585.7 365.8 L585.9 366.0 L587.9 367.9 L588.1 368.1 L590.1 370.0 L590.3 370.2 L592.2 372.1 L592.4 372.3 L594.3 374.2 L594.5 374.3 L596.4 376.2 L596.5 376.3 L598.4 378.2 L598.5 378.4 L600.4 380.3 L600.5 380.4 L602.4 382.3 L602.5 382.3 L604.3 384.3 L604.4 384.3 L606.3 386.2 L608.2 388.2 L610.1 390.1 L611.9 392.0 L613.8 393.8 L615.6 395.7 L617.4 397.5 L619.2 399.3 L621.0 401.1 L622.7 402.9 L624.5 404.6 L626.2 406.3 L627.5 407.6 L628.8 406.3 L630.5 404.6 L632.3 402.9 L634.0 401.1 L635.8 399.3 L637.6 397.5 L639.4 395.7 L641.2 393.8 L643.1 392.0 L644.9 390.1 L646.8 388.2 L648.7 386.3 L650.6 384.3 L650.7 384.3 L652.5 382.3 L652.6 382.3 L654.5 380.4 L654.6 380.3 L656.5 378.4 L656.6 378.2 L658.5 376.3 L658.6 376.2 L660.5 374.3 L660.7 374.2 L662.6 372.3 L662.8 372.1 L664.7 370.2 L664.9 370.0 L666.9 368.1 L667.1 367.9 L669.1 366.0 L669.3 365.8 L671.3 363.9 L671.4 363.7 L673.4 361.8 L673.5 361.7 L675.5 359.8 L677.5 358.0 L679.4 356.2 L681.2 354.5 L682.9 352.8 L684.6 351.2 L686.1 349.7 L687.5 348.2 L688.9 346.9 L690.1 345.5 L691.2 344.3 L692.3 343.1 L693.2 342.1 L694.0 341.1 L694.7 340.1 L695.3 339.3 L695.8 338.6 L696.2 337.9 L696.6 337.4 L696.9 336.9 L697.1 336.3 L697.4 335.8 L697.7 335.1 L698.0 334.5 L698.2 333.8 L698.5 333.1 L698.7 332.3 L698.9 331.6 L699.1 330.7 L699.3 329.9 L699.5 329.1 L699.6 328.2 L699.7 327.3 L699.8 326.4 L699.9 325.5 L699.9 324.6 L699.9 323.7 L699.9 322.8 L699.9 321.9 L699.8 321.0 L699.7 320.1 L699.6 319.3 L699.5 318.4 L699.3 317.6 L699.2 316.8 L699.0 316.1 L698.8 315.3 L698.6 314.6 L698.3 314.0 L698.1 313.4 L697.9 312.8 L697.6 312.2 L697.4 311.7 L697.1 311.3 L696.9 310.9 L696.7 310.5 L696.5 310.2 L696.2 309.9 L696.0 309.6 L695.8 309.4 L695.7 309.2 L695.5 309.0 L695.2 308.7 L695.0 308.5 L694.7 308.3 L694.4 308.0 L694.0 307.8 L693.7 307.5 L693.3 307.3 L692.9 307.1 L692.5 306.9 L692.1 306.7 L691.7 306.5 L691.3 306.4 L691.0 306.2 L690.6 306.1 L690.3 306.0 L690.0 306.0 L689.7 305.9 L689.5 305.9 L689.3 305.8 L689.2 305.8 L689.1 305.8 L689.0 305.8 L688.8 305.9 L688.5 306.0 L688.2 306.1 L687.8 306.3 L687.3 306.5 L686.8 306.8 L686.3 307.1 L685.7 307.4 L685.1 307.8 L684.5 308.2 L683.9 308.6 L683.3 309.0 L682.8 309.5 L682.2 310.0 L681.7 310.5 L681.2 310.9 L680.8 311.4 L680.4 311.8 L680.0 312.3 L679.1 313.5 L676.4 316.8 L673.4 319.9 L670.3 322.7 L667.0 325.4 L663.6 327.9 L660.0 330.1 L656.2 332.1 L652.3 333.8 L648.4 335.3 L644.3 336.5 L640.2 337.5 L636.0 338.2 L631.7 338.6 L627.5 338.7 L623.3 338.6 L619.0 338.2 L614.8 337.5 L610.7 336.5 L606.6 335.3 L602.7 333.8 L598.8 332.1 L595.0 330.1 L591.4 327.9 L588.0 325.4 L584.7 322.7 L581.6 319.9 L578.6 316.8 L575.9 313.5 L575.0 312.3 L574.6 311.8 L574.2 311.4 L573.8 310.9 L573.3 310.5 L572.8 310.0 L572.2 309.5 L571.7 309.0 L571.1 308.6 L570.5 308.2 L569.9 307.8 L569.3 307.4 L568.7 307.1 L568.2 306.8 L567.7 306.5 L567.2 306.3 L566.8 306.1 L566.5 306.0 L566.2 305.9 L566.0 305.8 L565.9 305.8Z" fill="none" stroke="#2e4fd6" stroke-width="1.6" stroke-dasharray="9 3" stroke-dashoffset="12" clip-path="url(#cb1)"/>
<path d="M565.7 315.8 L565.7 315.9 L565.6 316.1 L565.4 316.4 L565.3 316.7 L565.2 317.0 L565.0 317.4 L564.9 317.9 L564.8 318.3 L564.6 318.8 L564.5 319.4 L564.4 319.9 L564.3 320.5 L564.3 321.1 L564.2 321.7 L564.2 322.4 L564.1 323.0 L564.1 323.7 L564.1 324.3 L564.2 325.0 L564.2 325.6 L564.3 326.3 L564.4 326.9 L564.5 327.5 L564.6 328.1 L564.7 328.7 L564.8 329.3 L565.0 329.8 L565.1 330.3 L565.3 330.8 L565.4 331.2 L565.6 331.6 L565.8 331.9 L565.9 332.3 L566.1 332.5 L566.2 332.8 L566.4 333.1 L566.7 333.5 L567.1 334.1 L567.5 334.7 L568.1 335.4 L568.8 336.3 L569.6 337.2 L570.5 338.3 L571.5 339.4 L572.7 340.6 L573.9 341.9 L575.3 343.3 L576.8 344.8 L578.4 346.3 L580.0 347.9 L581.8 349.6 L583.7 351.4 L585.7 353.3 L587.7 355.2 L587.8 355.3 L589.8 357.2 L590.0 357.3 L592.0 359.2 L592.2 359.5 L594.2 361.4 L594.4 361.6 L596.4 363.5 L596.6 363.7 L598.5 365.6 L598.7 365.8 L600.7 367.7 L600.8 367.9 L602.7 369.8 L602.9 370.0 L604.8 371.9 L604.9 372.0 L606.8 373.9 L606.9 374.0 L608.8 375.9 L608.9 376.0 L610.8 377.9 L610.8 378.0 L612.7 379.9 L614.6 381.8 L616.5 383.7 L618.4 385.6 L620.2 387.5 L622.0 389.3 L623.8 391.1 L625.6 392.9 L627.3 394.7 L627.5 394.9 L627.7 394.7 L629.4 392.9 L631.2 391.1 L633.0 389.3 L634.8 387.5 L636.6 385.6 L638.5 383.7 L640.4 381.8 L642.2 379.9 L644.2 378.0 L644.2 377.9 L646.1 376.0 L646.2 375.9 L648.1 374.0 L648.2 373.9 L650.1 372.0 L650.2 371.9 L652.1 370.0 L652.3 369.8 L654.2 367.9 L654.3 367.7 L656.3 365.8 L656.5 365.6 L658.4 363.7 L658.6 363.5 L660.6 361.6 L660.8 361.4 L662.8 359.5 L663.0 359.2 L665.0 357.3 L665.2 357.2 L667.2 355.3 L667.3 355.2 L669.3 353.3 L671.3 351.4 L673.2 349.6 L675.0 347.9 L676.6 346.3 L678.2 344.8 L679.7 343.3 L681.1 341.9 L682.3 340.6 L683.5 339.4 L684.5 338.3 L685.4 337.2 L686.2 336.3 L686.9 335.4 L687.5 334.7 L687.9 334.1 L688.3 333.5 L688.6 333.1 L688.8 332.8 L688.9 332.5 L689.1 332.3 L689.2 331.9 L689.4 331.6 L689.6 331.2 L689.7 330.8 L689.9 330.3 L690.0 329.8 L690.2 329.3 L690.3 328.7 L690.4 328.1 L690.5 327.5 L690.6 326.9 L690.7 326.3 L690.8 325.6 L690.8 325.0 L690.9 324.3 L690.9 323.7 L690.9 323.0 L690.8 322.4 L690.8 321.7 L690.7 321.1 L690.7 320.5 L690.6 319.9 L690.5 319.4 L690.4 318.8 L690.2 318.3 L690.1 317.9 L690.0 317.4 L689.8 317.0 L689.7 316.7 L689.6 316.4 L689.4 316.1 L689.3 315.9 L689.3 315.8 L689.0 316.1 L688.6 316.4 L688.3 316.7 L688.0 317.0 L687.7 317.3 L687.5 317.5 L687.3 317.7 L687.1 317.9 L686.2 319.1 L683.1 322.8 L679.8 326.3 L676.3 329.6 L672.5 332.6 L668.6 335.4 L664.5 338.0 L660.2 340.2 L655.8 342.2 L651.2 343.9 L646.6 345.3 L641.9 346.4 L637.1 347.2 L632.3 347.6 L627.5 347.8 L622.7 347.6 L617.9 347.2 L613.1 346.4 L608.4 345.3 L603.8 343.9 L599.2 342.2 L594.8 340.2 L590.5 338.0 L586.4 335.4 L582.5 332.6 L578.7 329.6 L575.2 326.3 L571.9 322.8 L568.8 319.1 L567.9 317.9 L567.7 317.7 L567.5 317.5 L567.3 317.3 L567.0 317.0 L566.7 316.7 L566.4 316.4 L566.0 316.1 L565.7 315.8Z" fill="none" stroke="#2e4fd6" stroke-width="1.6" stroke-dasharray="9 3" stroke-dashoffset="14" clip-path="url(#cb1)"/>
<path d="M565.7 315.8 L565.7 315.9 L565.6 316.1 L565.4 316.4 L565.3 316.7 L565.2 317.0 L565.0 317.4 L564.9 317.9 L564.8 318.3 L564.6 318.8 L564.5 319.4 L564.4 319.9 L564.3 320.5 L564.3 321.1 L564.2 321.7 L564.2 322.4 L564.1 323.0 L564.1 323.7 L564.1 324.3 L564.2 325.0 L564.2 325.6 L564.3 326.3 L564.4 326.9 L564.5 327.5 L564.6 328.1 L564.7 328.7 L564.8 329.3 L565.0 329.8 L565.1 330.3 L565.3 330.8 L565.4 331.2 L565.6 331.6 L565.8 331.9 L565.9 332.3 L566.1 332.5 L566.2 332.8 L566.4 333.1 L566.7 333.5 L567.1 334.1 L567.5 334.7 L568.1 335.4 L568.8 336.3 L569.6 337.2 L570.5 338.3 L571.5 339.4 L572.7 340.6 L573.9 341.9 L575.3 343.3 L576.8 344.8 L578.4 346.3 L580.0 347.9 L581.8 349.6 L583.7 351.4 L585.7 353.3 L587.7 355.2 L587.8 355.3 L589.8 357.2 L590.0 357.3 L592.0 359.2 L592.2 359.5 L594.2 361.4 L594.4 361.6 L596.4 363.5 L596.6 363.7 L598.5 365.6 L598.7 365.8 L600.7 367.7 L600.8 367.9 L602.7 369.8 L602.9 370.0 L604.8 371.9 L604.9 372.0 L606.8 373.9 L606.9 374.0 L608.8 375.9 L608.9 376.0 L610.8 377.9 L610.8 378.0 L612.7 379.9 L614.6 381.8 L616.5 383.7 L618.4 385.6 L620.2 387.5 L622.0 389.3 L623.8 391.1 L625.6 392.9 L627.3 394.7 L627.5 394.9 L627.7 394.7 L629.4 392.9 L631.2 391.1 L633.0 389.3 L634.8 387.5 L636.6 385.6 L638.5 383.7 L640.4 381.8 L642.2 379.9 L644.2 378.0 L644.2 377.9 L646.1 376.0 L646.2 375.9 L648.1 374.0 L648.2 373.9 L650.1 372.0 L650.2 371.9 L652.1 370.0 L652.3 369.8 L654.2 367.9 L654.3 367.7 L656.3 365.8 L656.5 365.6 L658.4 363.7 L658.6 363.5 L660.6 361.6 L660.8 361.4 L662.8 359.5 L663.0 359.2 L665.0 357.3 L665.2 357.2 L667.2 355.3 L667.3 355.2 L669.3 353.3 L671.3 351.4 L673.2 349.6 L675.0 347.9 L676.6 346.3 L678.2 344.8 L679.7 343.3 L681.1 341.9 L682.3 340.6 L683.5 339.4 L684.5 338.3 L685.4 337.2 L686.2 336.3 L686.9 335.4 L687.5 334.7 L687.9 334.1 L688.3 333.5 L688.6 333.1 L688.8 332.8 L688.9 332.5 L689.1 332.3 L689.2 331.9 L689.4 331.6 L689.6 331.2 L689.7 330.8 L689.9 330.3 L690.0 329.8 L690.2 329.3 L690.3 328.7 L690.4 328.1 L690.5 327.5 L690.6 326.9 L690.7 326.3 L690.8 325.6 L690.8 325.0 L690.9 324.3 L690.9 323.7 L690.9 323.0 L690.8 322.4 L690.8 321.7 L690.7 321.1 L690.7 320.5 L690.6 319.9 L690.5 319.4 L690.4 318.8 L690.2 318.3 L690.1 317.9 L690.0 317.4 L689.8 317.0 L689.7 316.7 L689.6 316.4 L689.4 316.1 L689.3 315.9 L689.3 315.8 L689.0 316.1 L688.6 316.4 L688.3 316.7 L688.0 317.0 L687.7 317.3 L687.5 317.5 L687.3 317.7 L687.1 317.9 L686.2 319.1 L683.1 322.8 L679.8 326.3 L676.3 329.6 L672.5 332.6 L668.6 335.4 L664.5 338.0 L660.2 340.2 L655.8 342.2 L651.2 343.9 L646.6 345.3 L641.9 346.4 L637.1 347.2 L632.3 347.6 L627.5 347.8 L622.7 347.6 L617.9 347.2 L613.1 346.4 L608.4 345.3 L603.8 343.9 L599.2 342.2 L594.8 340.2 L590.5 338.0 L586.4 335.4 L582.5 332.6 L578.7 329.6 L575.2 326.3 L571.9 322.8 L568.8 319.1 L567.9 317.9 L567.7 317.7 L567.5 317.5 L567.3 317.3 L567.0 317.0 L566.7 316.7 L566.4 316.4 L566.0 316.1 L565.7 315.8Z" fill="none" stroke="#2e4fd6" stroke-width="1.6" stroke-dasharray="8 4" stroke-dashoffset="21" clip-path="url(#cb2)"/>
<path d="M596.1 350.7 L596.2 350.8 L598.2 352.7 L598.5 353.0 L600.5 354.9 L600.7 355.1 L602.7 357.0 L602.9 357.3 L604.9 359.2 L605.1 359.4 L607.0 361.3 L607.2 361.5 L609.1 363.4 L609.3 363.6 L611.2 365.5 L611.3 365.6 L613.2 367.5 L613.4 367.6 L615.2 369.6 L615.3 369.7 L617.2 371.6 L617.3 371.6 L619.2 373.5 L621.1 375.5 L623.0 377.4 L624.8 379.3 L626.6 381.2 L627.5 382.0 L628.4 381.2 L630.2 379.3 L632.0 377.4 L633.9 375.5 L635.8 373.6 L637.7 371.6 L637.8 371.6 L639.7 369.7 L639.8 369.6 L641.6 367.6 L641.8 367.5 L643.7 365.6 L643.8 365.5 L645.7 363.6 L645.9 363.4 L647.8 361.5 L648.0 361.3 L649.9 359.4 L650.1 359.2 L652.1 357.3 L652.3 357.0 L654.3 355.1 L654.5 354.9 L656.5 353.0 L656.8 352.7 L658.8 350.8 L658.9 350.7 L654.1 352.5 L648.9 354.0 L643.7 355.2 L638.3 356.1 L632.9 356.6 L627.5 356.8 L622.1 356.6 L616.7 356.1 L611.3 355.2 L606.1 354.0 L600.9 352.5 L596.1 350.7Z" fill="none" stroke="#2e4fd6" stroke-width="1.6" stroke-dasharray="9 3" stroke-dashoffset="16" clip-path="url(#cb1)"/>
<path d="M624.2 365.8 L625.6 367.2 L627.5 369.1 L629.3 367.2 L630.8 365.8 L627.5 365.9 L624.2 365.8Z" fill="none" stroke="#2e4fd6" stroke-width="1.6" stroke-dasharray="9 3" stroke-dashoffset="18" clip-path="url(#cb1)"/>
<path d="M624.2 365.8 L625.6 367.2 L627.5 369.1 L629.3 367.2 L630.8 365.8 L627.5 365.9 L624.2 365.8Z" fill="none" stroke="#2e4fd6" stroke-width="1.6" stroke-dasharray="8 4" stroke-dashoffset="27" clip-path="url(#cb2)"/>
<path d="M626.2 285V370" stroke="#c0402a" stroke-width="1"/>
<path d="M622.1 280.0 L626.7 285.0 L621.4 289.3 L626.7 294.4 L621.4 298.7 L626.7 303.7 L621.4 308.0 L626.7 312.3 L621.4 317.3 L626.7 321.6 L621.4 326.6 L626.7 330.2 L621.4 335.9 L626.7 339.5 L621.4 344.5 L626.7 348.1 L621.4 353.1 L626.7 356.7 L621.4 361.7 L626.2 366.0 L619.9 370.3" fill="none" stroke="#f4e41c" stroke-width="1.5"/>
<path d="M627.5 273.4 L625.9 271.3 L624.2 269.3 L622.4 267.3 L620.5 265.3 L618.6 263.4 L616.6 261.5 L614.5 259.7 L612.4 257.9 L610.2 256.2 L608.0 254.6 L605.7 253.1 L603.3 251.6 L600.9 250.2 L598.5 248.8 L596.0 247.6 L593.5 246.4 L590.9 245.4 L588.3 244.4 L585.7 243.5 L583.1 242.8 L580.4 242.1 L577.8 241.5 L575.1 241.1 L572.4 240.8 L569.7 240.6 L567.0 240.5 L564.3 240.5 L561.6 240.6 L558.9 240.8 L556.2 241.2 L553.5 241.6 L550.9 242.2 L548.3 242.8 L545.6 243.5 L543.1 244.3 L540.5 245.3 L538.0 246.3 L535.5 247.4 L533.1 248.5 L530.7 249.8 L528.3 251.1 L526.0 252.6 L523.7 254.1 L521.6 255.7 L519.4 257.3 L517.3 259.0 L515.3 260.8 L513.4 262.7 L511.5 264.6 L509.8 266.6 L508.0 268.6 L506.4 270.8 L504.9 272.9 L503.4 275.1 L502.0 277.4 L500.6 279.7 L499.4 282.1 L498.2 284.5 L497.1 286.9 L496.1 289.4 L495.1 291.9 L494.3 294.5 L493.5 297.0 L492.8 299.6 L492.1 302.3 L491.6 304.9 L491.1 307.6 L490.7 310.3 L490.3 313.0 L490.1 315.7 L489.9 318.4 L489.8 321.1 L489.7 323.8 L489.8 326.6 L489.9 329.3 L490.1 332.0 L490.4 334.7 L490.7 337.4 L491.1 340.1 L491.6 342.8 L492.2 345.5 L492.9 348.1 L493.6 350.7 L494.4 353.3 L495.3 355.9 L496.2 358.4 L497.3 360.9 L498.4 363.4 L499.5 365.8 L500.8 368.2 L502.1 370.6 L503.5 372.9 L505.0 375.1 L506.6 377.3 L508.2 379.5 L509.8 381.7 L511.5 383.8 L513.3 385.9 L515.1 387.9 L516.9 389.9 L518.8 391.9 L520.7 393.9 L522.7 395.9 L524.6 397.8 L526.6 399.7 L528.6 401.7 L530.6 403.6 L532.6 405.5 L534.6 407.3 L536.6 409.2 L538.6 411.1 L540.6 413.0 L542.5 414.9 L544.5 416.8 L546.4 418.7 L548.3 420.6 L550.3 422.5 L552.2 424.4 L554.1 426.3 L555.9 428.2 L557.8 430.1 L559.7 432.0 L561.6 434.0 L563.4 435.9 L565.3 437.8 L567.2 439.7 L569.1 441.6 L571.0 443.5 L572.9 445.4 L574.8 447.3 L576.7 449.2 L578.6 451.1 L580.5 453.0 L582.5 454.9 L584.4 456.8 L586.4 458.7 L588.3 460.6 L590.3 462.5 L592.3 464.4 L594.2 466.3 L596.2 468.2 L598.1 470.1 L600.1 472.1 L602.0 474.0 L603.9 476.0 L605.8 477.9 L607.7 479.9 L609.5 481.9 L611.3 484.0 L613.1 486.0 L614.9 488.1 L616.6 490.2 L618.3 492.3 L619.9 494.4 L621.5 496.6 L623.1 498.8 L624.6 501.0 L626.1 503.2 L627.5 505.5 L628.9 503.2 L630.4 501.0 L631.9 498.8 L633.5 496.6 L635.1 494.4 L636.7 492.3 L638.4 490.2 L640.1 488.1 L641.9 486.0 L643.7 484.0 L645.5 481.9 L647.3 479.9 L649.2 477.9 L651.1 476.0 L653.0 474.0 L654.9 472.1 L656.9 470.1 L658.8 468.2 L660.8 466.3 L662.7 464.4 L664.7 462.5 L666.7 460.6 L668.6 458.7 L670.6 456.8 L672.5 454.9 L674.5 453.0 L676.4 451.1 L678.3 449.2 L680.2 447.3 L682.1 445.4 L684.0 443.5 L685.9 441.6 L687.8 439.7 L689.7 437.8 L691.6 435.9 L693.4 434.0 L695.3 432.0 L697.2 430.1 L699.1 428.2 L700.9 426.3 L702.8 424.4 L704.7 422.5 L706.7 420.6 L708.6 418.7 L710.5 416.8 L712.5 414.9 L714.4 413.0 L716.4 411.1 L718.4 409.2 L720.4 407.3 L722.4 405.5 L724.4 403.6 L726.4 401.7 L728.4 399.7 L730.4 397.8 L732.3 395.9 L734.3 393.9 L736.2 391.9 L738.1 389.9 L739.9 387.9 L741.7 385.9 L743.5 383.8 L745.2 381.7 L746.8 379.5 L748.4 377.3 L750.0 375.1 L751.5 372.9 L752.9 370.6 L754.2 368.2 L755.5 365.8 L756.6 363.4 L757.7 360.9 L758.8 358.4 L759.7 355.9 L760.6 353.3 L761.4 350.7 L762.1 348.1 L762.8 345.5 L763.4 342.8 L763.9 340.1 L764.3 337.4 L764.6 334.7 L764.9 332.0 L765.1 329.3 L765.2 326.6 L765.3 323.8 L765.2 321.1 L765.1 318.4 L764.9 315.7 L764.7 313.0 L764.3 310.3 L763.9 307.6 L763.4 304.9 L762.9 302.3 L762.2 299.6 L761.5 297.0 L760.7 294.5 L759.9 291.9 L758.9 289.4 L757.9 286.9 L756.8 284.5 L755.6 282.1 L754.4 279.7 L753.0 277.4 L751.6 275.1 L750.1 272.9 L748.6 270.8 L747.0 268.6 L745.2 266.6 L743.5 264.6 L741.6 262.7 L739.7 260.8 L737.7 259.0 L735.6 257.3 L733.4 255.7 L731.3 254.1 L729.0 252.6 L726.7 251.1 L724.3 249.8 L721.9 248.5 L719.5 247.4 L717.0 246.3 L714.5 245.3 L711.9 244.3 L709.4 243.5 L706.7 242.8 L704.1 242.2 L701.5 241.6 L698.8 241.2 L696.1 240.8 L693.4 240.6 L690.7 240.5 L688.0 240.5 L685.3 240.6 L682.6 240.8 L679.9 241.1 L677.2 241.5 L674.6 242.1 L671.9 242.8 L669.3 243.5 L666.7 244.4 L664.1 245.4 L661.5 246.4 L659.0 247.6 L656.5 248.8 L654.1 250.2 L651.7 251.6 L649.3 253.1 L647.0 254.6 L644.8 256.2 L642.6 257.9 L640.5 259.7 L638.4 261.5 L636.4 263.4 L634.5 265.3 L632.6 267.3 L630.8 269.3 L629.1 271.3 L627.5 273.4Z" fill="none" stroke="#ff1010" stroke-width="2.5" stroke-linejoin="round"/>
</svg><!-- CANVAS END --></div>
<!-- splitter below canvas -->
<div class="a" style="left:259px;top:672px;width:757px;height:3px;background:#a4a4a4"></div>
<div class="a" style="left:259px;top:675px;width:3px;height:66px;background:#a4a4a4"></div>
<!-- messages -->
<div class="a" style="left:262px;top:675px;width:754px;height:66px;background:#fff"></div>
<div class="a" style="left:262px;top:688px;width:754px;height:13px;background:#3399ff"></div>
<div class="t" style="left:264px;top:677px;font-size:11px;letter-spacing:-0.1px">Toolpath distance 'Pocket1' : 2542.57043380489 + rapids : 32.4 = total : 2574.97043380489</div>
<div class="t" style="left:264px;top:689px;font-size:11px;letter-spacing:-0.1px;color:#fff">Estimated Toolpath 'Pocket1' duration : 00:03:11 + rapids : 00:00:03 = total : 00:03:14</div>
<!-- status bar -->
<div class="a" style="left:8px;top:741px;width:1008px;height:20px;background:#f0f0f0"></div>
<div class="a" style="left:8px;top:742px;width:641px;height:18px;border-top:1px solid #a0a0a0;border-right:1px solid #fff;border-bottom:1px solid #fff"></div>
<div class="a" style="left:652px;top:742px;width:198px;height:18px;border-top:1px solid #a0a0a0;border-left:1px solid #a0a0a0;border-right:1px solid #fff;border-bottom:1px solid #fff"></div>
<div class="a" style="left:852px;top:742px;width:148px;height:18px;border-top:1px solid #a0a0a0;border-left:1px solid #a0a0a0;border-right:1px solid #fff;border-bottom:1px solid #fff"></div>
<div class="t" style="left:654px;top:746px;font-size:11.5px;letter-spacing:-0.3px">Property changed</div>
<div class="t" style="left:860px;top:746px;width:138px;text-align:right;font-size:11.5px;letter-spacing:-0.3px">2.0000, 39.0000</div>
<svg class="a" style="left:1003px;top:747px" width="12" height="12"><path d="M11 2L2 11M11 6L6 11M11 10L10 11" stroke="#b0b0b0" stroke-width="1.2"/></svg>
</body></html>
